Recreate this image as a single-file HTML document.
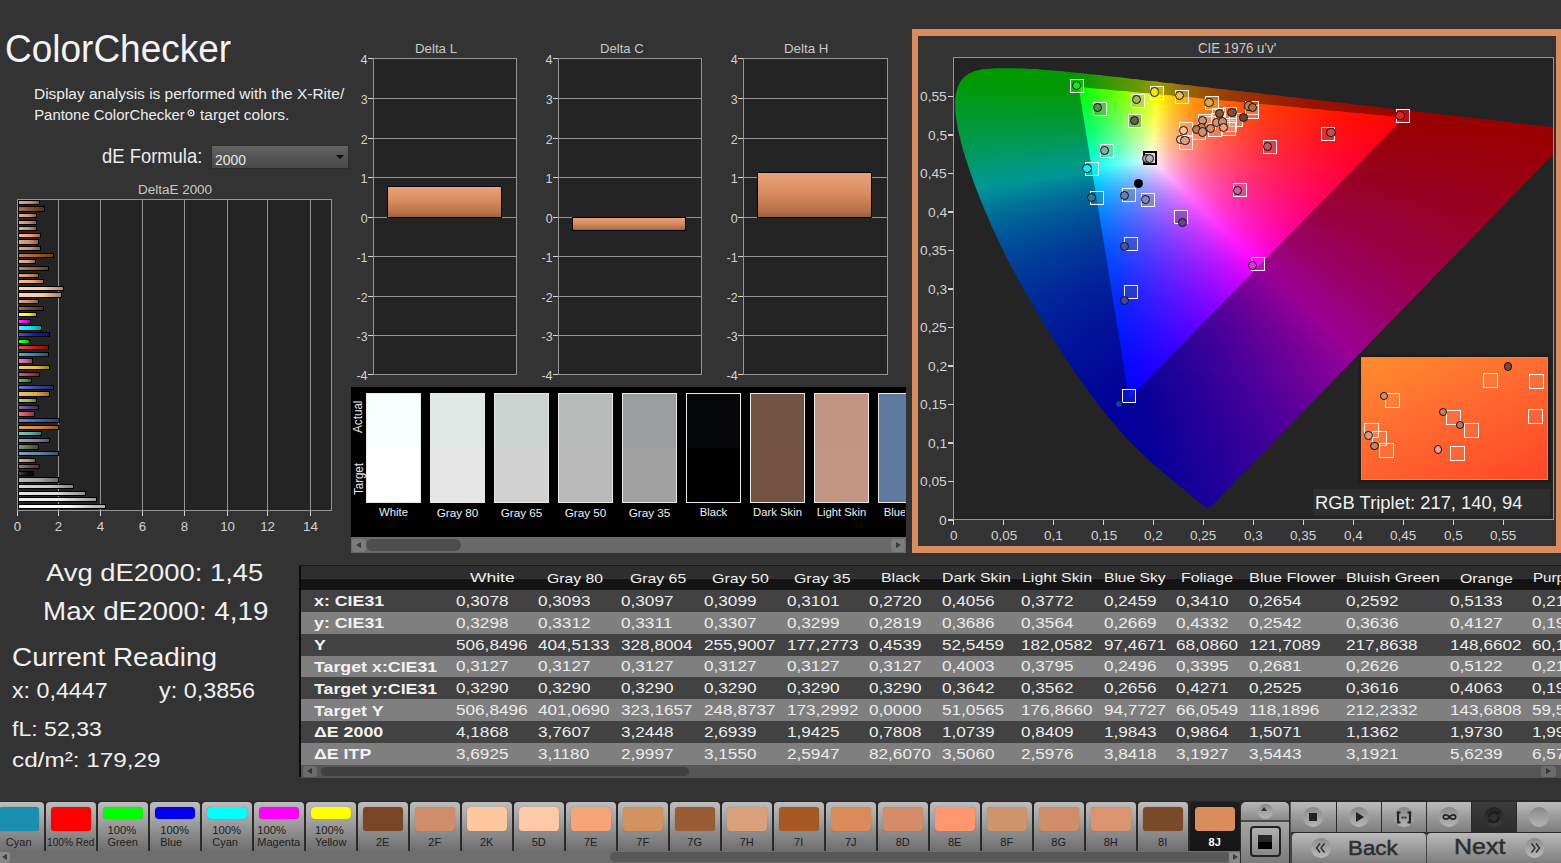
<!DOCTYPE html>
<html><head><meta charset="utf-8"><style>
html,body{margin:0;padding:0;width:1561px;height:863px;overflow:hidden;background:#333333;}
.t{position:absolute;white-space:nowrap;line-height:1;font-family:"Liberation Sans",sans-serif;transform-origin:0 0;}
</style></head><body>
<div class="t" style="left:5.30px;top:30.22px;font-size:38.21px;font-weight:normal;color:#f4f4f4;transform:scaleX(0.9682);">ColorChecker</div>
<div class="t" style="left:34.20px;top:86.86px;font-size:14.76px;font-weight:normal;color:#ececec;transform:scaleX(1.0482);">Display analysis is performed with the X-Rite/</div>
<div class="t" style="left:34.20px;top:107.54px;font-size:14.90px;font-weight:normal;color:#ececec;">Pantone ColorChecker</div>
<svg style="position:absolute;left:187px;top:108.5px" width="8" height="8" viewBox="0 0 8 8"><circle cx="4" cy="4" r="2.9" fill="none" stroke="#e8e8e8" stroke-width="1.3"/><circle cx="4" cy="4" r="1.1" fill="#e8e8e8"/></svg>
<div class="t" style="left:200.00px;top:107.54px;font-size:14.90px;font-weight:normal;color:#ececec;transform:scaleX(1.0383);">target colors.</div>
<div class="t" style="left:101.70px;top:147.25px;font-size:19.59px;font-weight:normal;color:#ececec;transform:scaleX(0.9405);">dE Formula:</div>
<div style="position:absolute;left:210.80px;top:145.00px;width:138.70px;height:24.30px;background:linear-gradient(#656565,#555 45%,#484848);border:1px solid #2c2c2c;box-sizing:border-box;"></div>
<div class="t" style="left:215.00px;top:152.19px;font-size:15.43px;font-weight:normal;color:#e8e8e8;transform:scaleX(0.9030);">2000</div>
<div style="position:absolute;left:335.6px;top:155.4px;width:0;height:0;border-left:4px solid transparent;border-right:4px solid transparent;border-top:4.8px solid #0a0a0a"></div>
<div class="t" style="left:137.60px;top:183.50px;font-size:12.00px;font-weight:normal;color:#c8c8c8;transform:scaleX(1.1217);">DeltaE 2000</div>
<div style="position:absolute;left:17.00px;top:199.00px;width:315.00px;height:312.00px;background:#242424;"></div>
<div style="position:absolute;left:17.00px;top:199.00px;width:1.00px;height:312.00px;background:#959595"></div>
<div style="position:absolute;left:58.00px;top:199.00px;width:1.00px;height:312.00px;background:#959595"></div>
<div style="position:absolute;left:100.00px;top:199.00px;width:1.00px;height:312.00px;background:#959595"></div>
<div style="position:absolute;left:142.00px;top:199.00px;width:1.00px;height:312.00px;background:#959595"></div>
<div style="position:absolute;left:184.00px;top:199.00px;width:1.00px;height:312.00px;background:#959595"></div>
<div style="position:absolute;left:227.00px;top:199.00px;width:1.00px;height:312.00px;background:#959595"></div>
<div style="position:absolute;left:267.00px;top:199.00px;width:1.00px;height:312.00px;background:#959595"></div>
<div style="position:absolute;left:310.00px;top:199.00px;width:1.00px;height:312.00px;background:#959595"></div>
<div style="position:absolute;left:331.00px;top:199.00px;width:1.00px;height:312.00px;background:#959595"></div>
<div style="position:absolute;left:17.00px;top:199.00px;width:315.00px;height:1.00px;background:#959595"></div>
<div style="position:absolute;left:17.00px;top:510.00px;width:315.00px;height:1.00px;background:#959595"></div>
<div style="position:absolute;left:17.00px;top:511.00px;width:1.00px;height:5.00px;background:#d2d2d2"></div>
<div class="t" style="left:13.81px;top:520.01px;font-size:13.29px;font-weight:normal;color:#d2d2d2;">0</div>
<div style="position:absolute;left:58.00px;top:511.00px;width:1.00px;height:5.00px;background:#d2d2d2"></div>
<div class="t" style="left:54.81px;top:520.01px;font-size:13.29px;font-weight:normal;color:#d2d2d2;">2</div>
<div style="position:absolute;left:100.00px;top:511.00px;width:1.00px;height:5.00px;background:#d2d2d2"></div>
<div class="t" style="left:96.76px;top:519.84px;font-size:13.48px;font-weight:normal;color:#d2d2d2;">4</div>
<div style="position:absolute;left:142.00px;top:511.00px;width:1.00px;height:5.00px;background:#d2d2d2"></div>
<div class="t" style="left:138.81px;top:520.01px;font-size:13.29px;font-weight:normal;color:#d2d2d2;">6</div>
<div style="position:absolute;left:184.00px;top:511.00px;width:1.00px;height:5.00px;background:#d2d2d2"></div>
<div class="t" style="left:180.81px;top:520.01px;font-size:13.29px;font-weight:normal;color:#d2d2d2;">8</div>
<div style="position:absolute;left:227.00px;top:511.00px;width:1.00px;height:5.00px;background:#d2d2d2"></div>
<div class="t" style="left:220.13px;top:520.01px;font-size:13.29px;font-weight:normal;color:#d2d2d2;">10</div>
<div style="position:absolute;left:267.00px;top:511.00px;width:1.00px;height:5.00px;background:#d2d2d2"></div>
<div class="t" style="left:260.13px;top:520.01px;font-size:13.29px;font-weight:normal;color:#d2d2d2;">12</div>
<div style="position:absolute;left:310.00px;top:511.00px;width:1.00px;height:5.00px;background:#d2d2d2"></div>
<div class="t" style="left:303.02px;top:519.84px;font-size:13.48px;font-weight:normal;color:#d2d2d2;">14</div>
<div style="position:absolute;left:17.50px;top:199.80px;width:22.48px;height:5.20px;background:linear-gradient(to right,#e2a986,#d98c5e 55%,#8d5b3d);border:1px solid #000;box-sizing:border-box;"></div>
<div style="position:absolute;left:17.50px;top:206.41px;width:27.50px;height:5.20px;background:linear-gradient(to right,#9b775e,#7a4a28 55%,#4f301a);border:1px solid #000;box-sizing:border-box;"></div>
<div style="position:absolute;left:17.50px;top:213.02px;width:19.55px;height:5.20px;background:linear-gradient(to right,#e3af94,#da9470 55%,#8e6049);border:1px solid #000;box-sizing:border-box;"></div>
<div style="position:absolute;left:17.50px;top:219.63px;width:19.55px;height:5.20px;background:linear-gradient(to right,#dca98e,#d18c68 55%,#885b44);border:1px solid #000;box-sizing:border-box;"></div>
<div style="position:absolute;left:17.50px;top:226.24px;width:19.55px;height:5.20px;background:linear-gradient(to right,#dcaf91,#d0946c 55%,#876046);border:1px solid #000;box-sizing:border-box;"></div>
<div style="position:absolute;left:17.50px;top:232.85px;width:23.53px;height:5.20px;background:linear-gradient(to right,#ffb092,#ff966e 55%,#a66248);border:1px solid #000;box-sizing:border-box;"></div>
<div style="position:absolute;left:17.50px;top:239.46px;width:21.64px;height:5.20px;background:linear-gradient(to right,#e0a98e,#d68c68 55%,#8b5b44);border:1px solid #000;box-sizing:border-box;"></div>
<div style="position:absolute;left:17.50px;top:246.07px;width:23.53px;height:5.20px;background:linear-gradient(to right,#e4a783,#db8a5a 55%,#8e5a3a);border:1px solid #000;box-sizing:border-box;"></div>
<div style="position:absolute;left:17.50px;top:252.68px;width:36.71px;height:5.20px;background:linear-gradient(to right,#bc8359,#a65a22 55%,#6c3a16);border:1px solid #000;box-sizing:border-box;"></div>
<div style="position:absolute;left:17.50px;top:259.29px;width:18.50px;height:5.20px;background:linear-gradient(to right,#e3b89b,#daa07a 55%,#8e684f);border:1px solid #000;box-sizing:border-box;"></div>
<div style="position:absolute;left:17.50px;top:265.90px;width:31.69px;height:5.20px;background:linear-gradient(to right,#b38565,#9a5c32 55%,#643c20);border:1px solid #000;box-sizing:border-box;"></div>
<div style="position:absolute;left:17.50px;top:272.51px;width:21.64px;height:5.20px;background:linear-gradient(to right,#dfad86,#d4925e 55%,#8a5f3d);border:1px solid #000;box-sizing:border-box;"></div>
<div style="position:absolute;left:17.50px;top:279.12px;width:26.04px;height:5.20px;background:linear-gradient(to right,#f9bb9a,#f7a478 55%,#a16b4e);border:1px solid #000;box-sizing:border-box;"></div>
<div style="position:absolute;left:17.50px;top:285.73px;width:46.55px;height:5.20px;background:linear-gradient(to right,#ffd6bc,#ffc8a6 55%,#a6826c);border:1px solid #000;box-sizing:border-box;"></div>
<div style="position:absolute;left:17.50px;top:292.34px;width:44.25px;height:5.20px;background:linear-gradient(to right,#ffd5b6,#ffc79d 55%,#a68166);border:1px solid #000;box-sizing:border-box;"></div>
<div style="position:absolute;left:17.50px;top:298.95px;width:21.64px;height:5.20px;background:linear-gradient(to right,#dba98e,#cf8c68 55%,#875b44);border:1px solid #000;box-sizing:border-box;"></div>
<div style="position:absolute;left:17.50px;top:305.56px;width:26.67px;height:5.20px;background:linear-gradient(to right,#9b735c,#7a4426 55%,#4f2c19);border:1px solid #000;box-sizing:border-box;"></div>
<div style="position:absolute;left:17.50px;top:312.17px;width:19.55px;height:5.20px;background:linear-gradient(to right,#ffff40,#ffff00 55%,#a6a600);border:1px solid #000;box-sizing:border-box;"></div>
<div style="position:absolute;left:17.50px;top:318.78px;width:13.69px;height:5.20px;background:linear-gradient(to right,#ff40ff,#ff00ff 55%,#a600a6);border:1px solid #000;box-sizing:border-box;"></div>
<div style="position:absolute;left:17.50px;top:325.39px;width:24.78px;height:5.20px;background:linear-gradient(to right,#40eef4,#00e8f0 55%,#00979c);border:1px solid #000;box-sizing:border-box;"></div>
<div style="position:absolute;left:17.50px;top:332.00px;width:32.74px;height:5.20px;background:linear-gradient(to right,#5252c4,#1818b0 55%,#101072);border:1px solid #000;box-sizing:border-box;"></div>
<div style="position:absolute;left:17.50px;top:338.61px;width:12.64px;height:5.20px;background:linear-gradient(to right,#40ff40,#00ff00 55%,#00a600);border:1px solid #000;box-sizing:border-box;"></div>
<div style="position:absolute;left:17.50px;top:345.22px;width:31.06px;height:5.20px;background:linear-gradient(to right,#d65252,#c81818 55%,#821010);border:1px solid #000;box-sizing:border-box;"></div>
<div style="position:absolute;left:17.50px;top:351.83px;width:31.69px;height:5.20px;background:linear-gradient(to right,#52acc4,#1890b0 55%,#105e72);border:1px solid #000;box-sizing:border-box;"></div>
<div style="position:absolute;left:17.50px;top:358.44px;width:15.36px;height:5.20px;background:linear-gradient(to right,#dc88be,#d060a8 55%,#873e6d);border:1px solid #000;box-sizing:border-box;"></div>
<div style="position:absolute;left:17.50px;top:365.05px;width:32.53px;height:5.20px;background:linear-gradient(to right,#eed064,#e8c030 55%,#977d1f);border:1px solid #000;box-sizing:border-box;"></div>
<div style="position:absolute;left:17.50px;top:371.66px;width:22.48px;height:5.20px;background:linear-gradient(to right,#d06470,#c03040 55%,#7d1f2a);border:1px solid #000;box-sizing:border-box;"></div>
<div style="position:absolute;left:17.50px;top:378.27px;width:14.73px;height:5.20px;background:linear-gradient(to right,#70b87c,#40a050 55%,#2a6834);border:1px solid #000;box-sizing:border-box;"></div>
<div style="position:absolute;left:17.50px;top:384.88px;width:36.71px;height:5.20px;background:linear-gradient(to right,#6a76b8,#3848a0 55%,#242f68);border:1px solid #000;box-sizing:border-box;"></div>
<div style="position:absolute;left:17.50px;top:391.49px;width:32.53px;height:5.20px;background:linear-gradient(to right,#eebe70,#e8a840 55%,#976d2a);border:1px solid #000;box-sizing:border-box;"></div>
<div style="position:absolute;left:17.50px;top:398.10px;width:19.55px;height:5.20px;background:linear-gradient(to right,#b8d070,#a0c040 55%,#687d2a);border:1px solid #000;box-sizing:border-box;"></div>
<div style="position:absolute;left:17.50px;top:404.71px;width:21.85px;height:5.20px;background:linear-gradient(to right,#8870a0,#604080 55%,#3e2a53);border:1px solid #000;box-sizing:border-box;"></div>
<div style="position:absolute;left:17.50px;top:411.32px;width:17.67px;height:5.20px;background:linear-gradient(to right,#d07c88,#c05060 55%,#7d343e);border:1px solid #000;box-sizing:border-box;"></div>
<div style="position:absolute;left:17.50px;top:417.93px;width:42.16px;height:5.20px;background:linear-gradient(to right,#7088c4,#4060b0 55%,#2a3e72);border:1px solid #000;box-sizing:border-box;"></div>
<div style="position:absolute;left:17.50px;top:424.54px;width:41.74px;height:5.20px;background:linear-gradient(to right,#e8a064,#e08030 55%,#92531f);border:1px solid #000;box-sizing:border-box;"></div>
<div style="position:absolute;left:17.50px;top:431.15px;width:24.36px;height:5.20px;background:linear-gradient(to right,#88c4b8,#60b0a0 55%,#3e7268);border:1px solid #000;box-sizing:border-box;"></div>
<div style="position:absolute;left:17.50px;top:437.76px;width:32.11px;height:5.20px;background:linear-gradient(to right,#a0a0c4,#8080b0 55%,#535372);border:1px solid #000;box-sizing:border-box;"></div>
<div style="position:absolute;left:17.50px;top:444.37px;width:21.22px;height:5.20px;background:linear-gradient(to right,#889470,#607040 55%,#3e492a);border:1px solid #000;box-sizing:border-box;"></div>
<div style="position:absolute;left:17.50px;top:450.98px;width:41.95px;height:5.20px;background:linear-gradient(to right,#88a0be,#6080a8 55%,#3e536d);border:1px solid #000;box-sizing:border-box;"></div>
<div style="position:absolute;left:17.50px;top:457.59px;width:18.08px;height:5.20px;background:linear-gradient(to right,#d6aca0,#c89080 55%,#825e53);border:1px solid #000;box-sizing:border-box;"></div>
<div style="position:absolute;left:17.50px;top:464.20px;width:22.90px;height:5.20px;background:linear-gradient(to right,#947c70,#705040 55%,#49342a);border:1px solid #000;box-sizing:border-box;"></div>
<div style="position:absolute;left:17.50px;top:470.81px;width:16.83px;height:5.20px;background:linear-gradient(to right,#4c4c4c,#101010 55%,#0a0a0a);border:1px solid #000;box-sizing:border-box;"></div>
<div style="position:absolute;left:17.50px;top:477.42px;width:41.11px;height:5.20px;background:linear-gradient(to right,#b8b8b8,#a0a0a0 55%,#686868);border:1px solid #000;box-sizing:border-box;"></div>
<div style="position:absolute;left:17.50px;top:484.03px;width:56.81px;height:5.20px;background:linear-gradient(to right,#d6d6d6,#c8c8c8 55%,#828282);border:1px solid #000;box-sizing:border-box;"></div>
<div style="position:absolute;left:17.50px;top:490.64px;width:68.32px;height:5.20px;background:linear-gradient(to right,#e5e5e5,#dcdcdc 55%,#8f8f8f);border:1px solid #000;box-sizing:border-box;"></div>
<div style="position:absolute;left:17.50px;top:497.25px;width:79.21px;height:5.20px;background:linear-gradient(to right,#efefef,#eaeaea 55%,#989898);border:1px solid #000;box-sizing:border-box;"></div>
<div style="position:absolute;left:17.50px;top:503.86px;width:88.21px;height:5.20px;background:linear-gradient(to right,#ffffff,#ffffff 55%,#a6a6a6);border:1px solid #000;box-sizing:border-box;"></div>
<div style="position:absolute;left:17.00px;top:199.00px;width:1.00px;height:312.00px;background:#959595"></div>
<div class="t" style="left:415.30px;top:43.21px;font-size:12.69px;font-weight:normal;color:#c8c8c8;transform:scaleX(1.0466);">Delta L</div>
<div style="position:absolute;left:373.00px;top:58.00px;width:144.00px;height:317.00px;background:#242424;"></div>
<div style="position:absolute;left:373.00px;top:58.00px;width:1.00px;height:317.00px;background:#959595"></div>
<div style="position:absolute;left:516.00px;top:58.00px;width:1.00px;height:317.00px;background:#959595"></div>
<div style="position:absolute;left:373.00px;top:58.00px;width:144.00px;height:1.00px;background:#959595"></div>
<div style="position:absolute;left:368.00px;top:58.00px;width:5.00px;height:1.00px;background:#d2d2d2"></div>
<div class="t" style="left:360.60px;top:53.98px;font-size:12.61px;font-weight:normal;color:#d2d2d2;">4</div>
<div style="position:absolute;left:373.00px;top:98.00px;width:144.00px;height:1.00px;background:#959595"></div>
<div style="position:absolute;left:368.00px;top:98.00px;width:5.00px;height:1.00px;background:#d2d2d2"></div>
<div class="t" style="left:360.70px;top:94.14px;font-size:12.43px;font-weight:normal;color:#d2d2d2;">3</div>
<div style="position:absolute;left:373.00px;top:138.00px;width:144.00px;height:1.00px;background:#959595"></div>
<div style="position:absolute;left:368.00px;top:138.00px;width:5.00px;height:1.00px;background:#d2d2d2"></div>
<div class="t" style="left:360.70px;top:134.14px;font-size:12.43px;font-weight:normal;color:#d2d2d2;">2</div>
<div style="position:absolute;left:373.00px;top:177.00px;width:144.00px;height:1.00px;background:#959595"></div>
<div style="position:absolute;left:368.00px;top:177.00px;width:5.00px;height:1.00px;background:#d2d2d2"></div>
<div class="t" style="left:360.60px;top:172.98px;font-size:12.61px;font-weight:normal;color:#d2d2d2;">1</div>
<div style="position:absolute;left:373.00px;top:217.00px;width:144.00px;height:1.00px;background:#959595"></div>
<div style="position:absolute;left:368.00px;top:217.00px;width:5.00px;height:1.00px;background:#d2d2d2"></div>
<div class="t" style="left:360.70px;top:213.14px;font-size:12.43px;font-weight:normal;color:#d2d2d2;">0</div>
<div style="position:absolute;left:373.00px;top:256.00px;width:144.00px;height:1.00px;background:#959595"></div>
<div style="position:absolute;left:368.00px;top:256.00px;width:5.00px;height:1.00px;background:#d2d2d2"></div>
<div class="t" style="left:356.38px;top:251.98px;font-size:12.61px;font-weight:normal;color:#d2d2d2;">-1</div>
<div style="position:absolute;left:373.00px;top:296.00px;width:144.00px;height:1.00px;background:#959595"></div>
<div style="position:absolute;left:368.00px;top:296.00px;width:5.00px;height:1.00px;background:#d2d2d2"></div>
<div class="t" style="left:356.54px;top:292.14px;font-size:12.43px;font-weight:normal;color:#d2d2d2;">-2</div>
<div style="position:absolute;left:373.00px;top:335.00px;width:144.00px;height:1.00px;background:#959595"></div>
<div style="position:absolute;left:368.00px;top:335.00px;width:5.00px;height:1.00px;background:#d2d2d2"></div>
<div class="t" style="left:356.54px;top:331.14px;font-size:12.43px;font-weight:normal;color:#d2d2d2;">-3</div>
<div style="position:absolute;left:373.00px;top:374.00px;width:144.00px;height:1.00px;background:#959595"></div>
<div style="position:absolute;left:368.00px;top:374.00px;width:5.00px;height:1.00px;background:#d2d2d2"></div>
<div class="t" style="left:356.38px;top:369.98px;font-size:12.61px;font-weight:normal;color:#d2d2d2;">-4</div>
<div style="position:absolute;left:387.20px;top:185.93px;width:114.40px;height:32.17px;background:linear-gradient(#e9a27a,#d98c5e 45%,#b87248 85%,#9a6040);border:1px solid #000;box-sizing:border-box;"></div>
<div class="t" style="left:599.70px;top:43.21px;font-size:12.69px;font-weight:normal;color:#c8c8c8;transform:scaleX(1.0326);">Delta C</div>
<div style="position:absolute;left:558.00px;top:58.00px;width:144.00px;height:317.00px;background:#242424;"></div>
<div style="position:absolute;left:558.00px;top:58.00px;width:1.00px;height:317.00px;background:#959595"></div>
<div style="position:absolute;left:701.00px;top:58.00px;width:1.00px;height:317.00px;background:#959595"></div>
<div style="position:absolute;left:558.00px;top:58.00px;width:144.00px;height:1.00px;background:#959595"></div>
<div style="position:absolute;left:553.00px;top:58.00px;width:5.00px;height:1.00px;background:#d2d2d2"></div>
<div class="t" style="left:545.60px;top:53.98px;font-size:12.61px;font-weight:normal;color:#d2d2d2;">4</div>
<div style="position:absolute;left:558.00px;top:98.00px;width:144.00px;height:1.00px;background:#959595"></div>
<div style="position:absolute;left:553.00px;top:98.00px;width:5.00px;height:1.00px;background:#d2d2d2"></div>
<div class="t" style="left:545.70px;top:94.14px;font-size:12.43px;font-weight:normal;color:#d2d2d2;">3</div>
<div style="position:absolute;left:558.00px;top:138.00px;width:144.00px;height:1.00px;background:#959595"></div>
<div style="position:absolute;left:553.00px;top:138.00px;width:5.00px;height:1.00px;background:#d2d2d2"></div>
<div class="t" style="left:545.70px;top:134.14px;font-size:12.43px;font-weight:normal;color:#d2d2d2;">2</div>
<div style="position:absolute;left:558.00px;top:177.00px;width:144.00px;height:1.00px;background:#959595"></div>
<div style="position:absolute;left:553.00px;top:177.00px;width:5.00px;height:1.00px;background:#d2d2d2"></div>
<div class="t" style="left:545.60px;top:172.98px;font-size:12.61px;font-weight:normal;color:#d2d2d2;">1</div>
<div style="position:absolute;left:558.00px;top:217.00px;width:144.00px;height:1.00px;background:#959595"></div>
<div style="position:absolute;left:553.00px;top:217.00px;width:5.00px;height:1.00px;background:#d2d2d2"></div>
<div class="t" style="left:545.70px;top:213.14px;font-size:12.43px;font-weight:normal;color:#d2d2d2;">0</div>
<div style="position:absolute;left:558.00px;top:256.00px;width:144.00px;height:1.00px;background:#959595"></div>
<div style="position:absolute;left:553.00px;top:256.00px;width:5.00px;height:1.00px;background:#d2d2d2"></div>
<div class="t" style="left:541.38px;top:251.98px;font-size:12.61px;font-weight:normal;color:#d2d2d2;">-1</div>
<div style="position:absolute;left:558.00px;top:296.00px;width:144.00px;height:1.00px;background:#959595"></div>
<div style="position:absolute;left:553.00px;top:296.00px;width:5.00px;height:1.00px;background:#d2d2d2"></div>
<div class="t" style="left:541.54px;top:292.14px;font-size:12.43px;font-weight:normal;color:#d2d2d2;">-2</div>
<div style="position:absolute;left:558.00px;top:335.00px;width:144.00px;height:1.00px;background:#959595"></div>
<div style="position:absolute;left:553.00px;top:335.00px;width:5.00px;height:1.00px;background:#d2d2d2"></div>
<div class="t" style="left:541.54px;top:331.14px;font-size:12.43px;font-weight:normal;color:#d2d2d2;">-3</div>
<div style="position:absolute;left:558.00px;top:374.00px;width:144.00px;height:1.00px;background:#959595"></div>
<div style="position:absolute;left:553.00px;top:374.00px;width:5.00px;height:1.00px;background:#d2d2d2"></div>
<div class="t" style="left:541.38px;top:369.98px;font-size:12.61px;font-weight:normal;color:#d2d2d2;">-4</div>
<div style="position:absolute;left:572.20px;top:217.00px;width:114.20px;height:14.03px;background:linear-gradient(#e9a27a,#d98c5e 45%,#b87248 85%,#9a6040);border:1px solid #000;box-sizing:border-box;"></div>
<div class="t" style="left:784.30px;top:43.21px;font-size:12.69px;font-weight:normal;color:#c8c8c8;transform:scaleX(1.0491);">Delta H</div>
<div style="position:absolute;left:743.00px;top:58.00px;width:145.00px;height:317.00px;background:#242424;"></div>
<div style="position:absolute;left:743.00px;top:58.00px;width:1.00px;height:317.00px;background:#959595"></div>
<div style="position:absolute;left:887.00px;top:58.00px;width:1.00px;height:317.00px;background:#959595"></div>
<div style="position:absolute;left:743.00px;top:58.00px;width:145.00px;height:1.00px;background:#959595"></div>
<div style="position:absolute;left:738.00px;top:58.00px;width:5.00px;height:1.00px;background:#d2d2d2"></div>
<div class="t" style="left:730.70px;top:53.98px;font-size:12.61px;font-weight:normal;color:#d2d2d2;">4</div>
<div style="position:absolute;left:743.00px;top:98.00px;width:145.00px;height:1.00px;background:#959595"></div>
<div style="position:absolute;left:738.00px;top:98.00px;width:5.00px;height:1.00px;background:#d2d2d2"></div>
<div class="t" style="left:730.80px;top:94.14px;font-size:12.43px;font-weight:normal;color:#d2d2d2;">3</div>
<div style="position:absolute;left:743.00px;top:138.00px;width:145.00px;height:1.00px;background:#959595"></div>
<div style="position:absolute;left:738.00px;top:138.00px;width:5.00px;height:1.00px;background:#d2d2d2"></div>
<div class="t" style="left:730.80px;top:134.14px;font-size:12.43px;font-weight:normal;color:#d2d2d2;">2</div>
<div style="position:absolute;left:743.00px;top:177.00px;width:145.00px;height:1.00px;background:#959595"></div>
<div style="position:absolute;left:738.00px;top:177.00px;width:5.00px;height:1.00px;background:#d2d2d2"></div>
<div class="t" style="left:730.70px;top:172.98px;font-size:12.61px;font-weight:normal;color:#d2d2d2;">1</div>
<div style="position:absolute;left:743.00px;top:217.00px;width:145.00px;height:1.00px;background:#959595"></div>
<div style="position:absolute;left:738.00px;top:217.00px;width:5.00px;height:1.00px;background:#d2d2d2"></div>
<div class="t" style="left:730.80px;top:213.14px;font-size:12.43px;font-weight:normal;color:#d2d2d2;">0</div>
<div style="position:absolute;left:743.00px;top:256.00px;width:145.00px;height:1.00px;background:#959595"></div>
<div style="position:absolute;left:738.00px;top:256.00px;width:5.00px;height:1.00px;background:#d2d2d2"></div>
<div class="t" style="left:726.48px;top:251.98px;font-size:12.61px;font-weight:normal;color:#d2d2d2;">-1</div>
<div style="position:absolute;left:743.00px;top:296.00px;width:145.00px;height:1.00px;background:#959595"></div>
<div style="position:absolute;left:738.00px;top:296.00px;width:5.00px;height:1.00px;background:#d2d2d2"></div>
<div class="t" style="left:726.64px;top:292.14px;font-size:12.43px;font-weight:normal;color:#d2d2d2;">-2</div>
<div style="position:absolute;left:743.00px;top:335.00px;width:145.00px;height:1.00px;background:#959595"></div>
<div style="position:absolute;left:738.00px;top:335.00px;width:5.00px;height:1.00px;background:#d2d2d2"></div>
<div class="t" style="left:726.64px;top:331.14px;font-size:12.43px;font-weight:normal;color:#d2d2d2;">-3</div>
<div style="position:absolute;left:743.00px;top:374.00px;width:145.00px;height:1.00px;background:#959595"></div>
<div style="position:absolute;left:738.00px;top:374.00px;width:5.00px;height:1.00px;background:#d2d2d2"></div>
<div class="t" style="left:726.48px;top:369.98px;font-size:12.61px;font-weight:normal;color:#d2d2d2;">-4</div>
<div style="position:absolute;left:757.30px;top:172.12px;width:115.20px;height:45.98px;background:linear-gradient(#e9a27a,#d98c5e 45%,#b87248 85%,#9a6040);border:1px solid #000;box-sizing:border-box;"></div>
<div style="position:absolute;left:350.50px;top:387.00px;width:555.00px;height:150.00px;background:#000;"></div>
<div style="position:absolute;left:350.5px;top:387px;width:555px;height:150px;overflow:hidden">
<div style="position:absolute;left:15.50px;top:6px;width:55px;height:110px;border:1.5px solid #e8e8e8;box-sizing:border-box;background:linear-gradient(#f6fffd 50%,#ffffff 50%)"></div>
<div style="position:absolute;left:79.50px;top:6px;width:55px;height:110px;border:1.5px solid #e8e8e8;box-sizing:border-box;background:linear-gradient(#e0e6e3 50%,#e6e6e6 50%)"></div>
<div style="position:absolute;left:143.50px;top:6px;width:55px;height:110px;border:1.5px solid #e8e8e8;box-sizing:border-box;background:linear-gradient(#ccd2d0 50%,#d1d1d1 50%)"></div>
<div style="position:absolute;left:207.50px;top:6px;width:55px;height:110px;border:1.5px solid #e8e8e8;box-sizing:border-box;background:linear-gradient(#b6bab9 50%,#b9b9b9 50%)"></div>
<div style="position:absolute;left:271.50px;top:6px;width:55px;height:110px;border:1.5px solid #e8e8e8;box-sizing:border-box;background:linear-gradient(#9a9d9d 50%,#a1a1a1 50%)"></div>
<div style="position:absolute;left:335.50px;top:6px;width:55px;height:110px;border:1.5px solid #e8e8e8;box-sizing:border-box;background:linear-gradient(#050608 50%,#000000 50%)"></div>
<div style="position:absolute;left:399.50px;top:6px;width:55px;height:110px;border:1.5px solid #e8e8e8;box-sizing:border-box;background:linear-gradient(#735444 50%,#735243 50%)"></div>
<div style="position:absolute;left:463.50px;top:6px;width:55px;height:110px;border:1.5px solid #e8e8e8;box-sizing:border-box;background:linear-gradient(#c29582 50%,#c29682 50%)"></div>
<div style="position:absolute;left:527.50px;top:6px;width:55px;height:110px;border:1.5px solid #e8e8e8;box-sizing:border-box;background:linear-gradient(#5e7b9e 50%,#5e7a9d 50%)"></div>
</div>
<div class="t" style="left:379.05px;top:507.29px;font-size:11.31px;font-weight:normal;color:#f0f0f0;">White</div>
<div class="t" style="left:436.68px;top:506.94px;font-size:11.71px;font-weight:normal;color:#f0f0f0;">Gray 80</div>
<div class="t" style="left:500.68px;top:506.94px;font-size:11.71px;font-weight:normal;color:#f0f0f0;">Gray 65</div>
<div class="t" style="left:564.68px;top:506.94px;font-size:11.71px;font-weight:normal;color:#f0f0f0;">Gray 50</div>
<div class="t" style="left:628.68px;top:506.94px;font-size:11.71px;font-weight:normal;color:#f0f0f0;">Gray 35</div>
<div class="t" style="left:699.64px;top:507.29px;font-size:11.31px;font-weight:normal;color:#f0f0f0;">Black</div>
<div class="t" style="left:752.98px;top:507.29px;font-size:11.31px;font-weight:normal;color:#f0f0f0;">Dark Skin</div>
<div class="t" style="left:816.67px;top:507.29px;font-size:11.31px;font-weight:normal;color:#f0f0f0;">Light Skin</div>
<div style="position:absolute;left:877px;top:500px;width:28.4px;height:30px;overflow:hidden">
<div class="t" style="left:6.80px;top:7.29px;font-size:11.31px;font-weight:normal;color:#f0f0f0;">Blue Sky</div>
</div>
<div class="t" style="left:352.39px;top:432.90px;font-size:12.41px;color:#e8e8e8;transform:rotate(-90deg) scaleX(0.9417);">Actual</div>
<div class="t" style="left:351.86px;top:495.00px;font-size:13.04px;color:#e8e8e8;transform:rotate(-90deg) scaleX(0.8825);">Target</div>
<div style="position:absolute;left:350.50px;top:537.00px;width:555.00px;height:16.00px;background:#6a6a6a;"></div>
<div style="position:absolute;left:352.00px;top:538.50px;width:13.50px;height:13.00px;background:#7c7c7c;border-radius:3px;"></div>
<div style="position:absolute;left:355.5px;top:541.5px;width:0;height:0;border-top:3.5px solid transparent;border-bottom:3.5px solid transparent;border-right:5px solid #3a3a3a"></div>
<div style="position:absolute;left:366.00px;top:539.00px;width:95.00px;height:12.00px;background:#4e4e4e;border-radius:6px;"></div>
<div style="position:absolute;left:891.00px;top:538.50px;width:13.50px;height:13.00px;background:#7c7c7c;border-radius:3px;"></div>
<div style="position:absolute;left:895.5px;top:541.5px;width:0;height:0;border-top:3.5px solid transparent;border-bottom:3.5px solid transparent;border-left:5px solid #3a3a3a"></div>
<div class="t" style="left:46.40px;top:561.41px;font-size:24.69px;font-weight:normal;color:#f0f0f0;transform:scaleX(1.1092);">Avg dE2000: 1,45</div>
<div class="t" style="left:42.60px;top:598.96px;font-size:25.93px;font-weight:normal;color:#f0f0f0;transform:scaleX(1.0711);">Max dE2000: 4,19</div>
<div class="t" style="left:12.20px;top:643.74px;font-size:26.07px;font-weight:normal;color:#f0f0f0;transform:scaleX(1.0719);">Current Reading</div>
<div class="t" style="left:12.20px;top:680.02px;font-size:21.86px;font-weight:normal;color:#f0f0f0;transform:scaleX(1.0629);">x: 0,4447</div>
<div class="t" style="left:159.40px;top:680.02px;font-size:21.86px;font-weight:normal;color:#f0f0f0;transform:scaleX(1.0685);">y: 0,3856</div>
<div class="t" style="left:12.20px;top:718.36px;font-size:21.10px;font-weight:normal;color:#f0f0f0;transform:scaleX(1.0939);">fL: 52,33</div>
<div class="t" style="left:12.20px;top:750.18px;font-size:20.97px;font-weight:normal;color:#f0f0f0;transform:scaleX(1.1591);">cd/m²: 179,29</div>
<div style="position:absolute;left:299.00px;top:565.00px;width:1262.00px;height:1.20px;background:#1a1a1a;"></div>
<div style="position:absolute;left:299.00px;top:566.20px;width:1262.00px;height:12.30px;background:#2e2e2e;"></div>
<div style="position:absolute;left:299.00px;top:578.50px;width:1262.00px;height:11.50px;background:#141414;"></div>
<div style="position:absolute;left:299.00px;top:590.00px;width:1262.00px;height:22.05px;background:#424242;"></div>
<div style="position:absolute;left:299.00px;top:611.85px;width:1262.00px;height:22.05px;background:#7f7f7f;"></div>
<div style="position:absolute;left:299.00px;top:633.70px;width:1262.00px;height:22.05px;background:#424242;"></div>
<div style="position:absolute;left:299.00px;top:655.55px;width:1262.00px;height:22.05px;background:#7f7f7f;"></div>
<div style="position:absolute;left:299.00px;top:677.40px;width:1262.00px;height:22.05px;background:#424242;"></div>
<div style="position:absolute;left:299.00px;top:699.25px;width:1262.00px;height:22.05px;background:#7f7f7f;"></div>
<div style="position:absolute;left:299.00px;top:721.10px;width:1262.00px;height:22.05px;background:#424242;"></div>
<div style="position:absolute;left:299.00px;top:742.95px;width:1262.00px;height:22.05px;background:#7f7f7f;"></div>
<div style="position:absolute;left:299.00px;top:566.20px;width:2.00px;height:211.00px;background:#0a0a0a;"></div>
<div class="t" style="left:470.20px;top:572.21px;font-size:12.69px;font-weight:normal;color:#f0f0f0;transform:scaleX(1.3756);">White</div>
<div class="t" style="left:547.00px;top:571.83px;font-size:13.14px;font-weight:normal;color:#f0f0f0;transform:scaleX(1.1986);">Gray 80</div>
<div class="t" style="left:629.50px;top:571.83px;font-size:13.14px;font-weight:normal;color:#f0f0f0;transform:scaleX(1.2028);">Gray 65</div>
<div class="t" style="left:711.70px;top:571.83px;font-size:13.14px;font-weight:normal;color:#f0f0f0;transform:scaleX(1.2178);">Gray 50</div>
<div class="t" style="left:794.20px;top:571.83px;font-size:13.14px;font-weight:normal;color:#f0f0f0;transform:scaleX(1.2114);">Gray 35</div>
<div class="t" style="left:880.50px;top:572.21px;font-size:12.69px;font-weight:normal;color:#f0f0f0;transform:scaleX(1.2544);">Black</div>
<div class="t" style="left:941.60px;top:572.21px;font-size:12.69px;font-weight:normal;color:#f0f0f0;transform:scaleX(1.2507);">Dark Skin</div>
<div class="t" style="left:1022.00px;top:572.21px;font-size:12.69px;font-weight:normal;color:#f0f0f0;transform:scaleX(1.2566);">Light Skin</div>
<div class="t" style="left:1103.60px;top:572.21px;font-size:12.69px;font-weight:normal;color:#f0f0f0;transform:scaleX(1.2285);">Blue Sky</div>
<div class="t" style="left:1181.00px;top:572.21px;font-size:12.69px;font-weight:normal;color:#f0f0f0;transform:scaleX(1.2493);">Foliage</div>
<div class="t" style="left:1249.00px;top:572.21px;font-size:12.69px;font-weight:normal;color:#f0f0f0;transform:scaleX(1.2955);">Blue Flower</div>
<div class="t" style="left:1345.60px;top:572.21px;font-size:12.69px;font-weight:normal;color:#f0f0f0;transform:scaleX(1.2789);">Bluish Green</div>
<div class="t" style="left:1459.50px;top:571.83px;font-size:13.14px;font-weight:normal;color:#f0f0f0;transform:scaleX(1.2069);">Orange</div>
<div class="t" style="left:1532.60px;top:572.21px;font-size:12.69px;font-weight:normal;color:#f0f0f0;transform:scaleX(1.1891);">Purplish Blue</div>
<div class="t" style="left:456.20px;top:593.94px;font-size:14.43px;font-weight:normal;color:#ececec;transform:scaleX(1.1891);">0,3078</div>
<div class="t" style="left:538.40px;top:593.94px;font-size:14.43px;font-weight:normal;color:#ececec;transform:scaleX(1.1891);">0,3093</div>
<div class="t" style="left:621.30px;top:593.94px;font-size:14.43px;font-weight:normal;color:#ececec;transform:scaleX(1.1891);">0,3097</div>
<div class="t" style="left:703.90px;top:593.94px;font-size:14.43px;font-weight:normal;color:#ececec;transform:scaleX(1.1891);">0,3099</div>
<div class="t" style="left:786.50px;top:593.94px;font-size:14.43px;font-weight:normal;color:#ececec;transform:scaleX(1.1891);">0,3101</div>
<div class="t" style="left:868.60px;top:593.94px;font-size:14.43px;font-weight:normal;color:#ececec;transform:scaleX(1.1891);">0,2720</div>
<div class="t" style="left:941.60px;top:593.94px;font-size:14.43px;font-weight:normal;color:#ececec;transform:scaleX(1.1891);">0,4056</div>
<div class="t" style="left:1021.10px;top:593.94px;font-size:14.43px;font-weight:normal;color:#ececec;transform:scaleX(1.1891);">0,3772</div>
<div class="t" style="left:1103.60px;top:593.94px;font-size:14.43px;font-weight:normal;color:#ececec;transform:scaleX(1.1891);">0,2459</div>
<div class="t" style="left:1175.90px;top:593.94px;font-size:14.43px;font-weight:normal;color:#ececec;transform:scaleX(1.1891);">0,3410</div>
<div class="t" style="left:1249.00px;top:593.94px;font-size:14.43px;font-weight:normal;color:#ececec;transform:scaleX(1.1891);">0,2654</div>
<div class="t" style="left:1345.60px;top:593.94px;font-size:14.43px;font-weight:normal;color:#ececec;transform:scaleX(1.1891);">0,2592</div>
<div class="t" style="left:1450.00px;top:593.94px;font-size:14.43px;font-weight:normal;color:#ececec;transform:scaleX(1.1891);">0,5133</div>
<div class="t" style="left:1531.80px;top:593.94px;font-size:14.43px;font-weight:normal;color:#ececec;transform:scaleX(1.1891);">0,2107</div>
<div class="t" style="left:456.20px;top:615.79px;font-size:14.43px;font-weight:normal;color:#ececec;transform:scaleX(1.1891);">0,3298</div>
<div class="t" style="left:538.40px;top:615.79px;font-size:14.43px;font-weight:normal;color:#ececec;transform:scaleX(1.1891);">0,3312</div>
<div class="t" style="left:621.30px;top:615.79px;font-size:14.43px;font-weight:normal;color:#ececec;transform:scaleX(1.1891);">0,3311</div>
<div class="t" style="left:703.90px;top:615.79px;font-size:14.43px;font-weight:normal;color:#ececec;transform:scaleX(1.1891);">0,3307</div>
<div class="t" style="left:786.50px;top:615.79px;font-size:14.43px;font-weight:normal;color:#ececec;transform:scaleX(1.1891);">0,3299</div>
<div class="t" style="left:868.60px;top:615.79px;font-size:14.43px;font-weight:normal;color:#ececec;transform:scaleX(1.1891);">0,2819</div>
<div class="t" style="left:941.60px;top:615.79px;font-size:14.43px;font-weight:normal;color:#ececec;transform:scaleX(1.1891);">0,3686</div>
<div class="t" style="left:1021.10px;top:615.79px;font-size:14.43px;font-weight:normal;color:#ececec;transform:scaleX(1.1891);">0,3564</div>
<div class="t" style="left:1103.60px;top:615.79px;font-size:14.43px;font-weight:normal;color:#ececec;transform:scaleX(1.1891);">0,2669</div>
<div class="t" style="left:1175.90px;top:615.79px;font-size:14.43px;font-weight:normal;color:#ececec;transform:scaleX(1.1891);">0,4332</div>
<div class="t" style="left:1249.00px;top:615.79px;font-size:14.43px;font-weight:normal;color:#ececec;transform:scaleX(1.1891);">0,2542</div>
<div class="t" style="left:1345.60px;top:615.79px;font-size:14.43px;font-weight:normal;color:#ececec;transform:scaleX(1.1891);">0,3636</div>
<div class="t" style="left:1450.00px;top:615.79px;font-size:14.43px;font-weight:normal;color:#ececec;transform:scaleX(1.1891);">0,4127</div>
<div class="t" style="left:1531.80px;top:615.79px;font-size:14.43px;font-weight:normal;color:#ececec;transform:scaleX(1.1891);">0,1912</div>
<div class="t" style="left:456.20px;top:637.64px;font-size:14.43px;font-weight:normal;color:#ececec;transform:scaleX(1.1891);">506,8496</div>
<div class="t" style="left:538.40px;top:637.64px;font-size:14.43px;font-weight:normal;color:#ececec;transform:scaleX(1.1891);">404,5133</div>
<div class="t" style="left:621.30px;top:637.64px;font-size:14.43px;font-weight:normal;color:#ececec;transform:scaleX(1.1891);">328,8004</div>
<div class="t" style="left:703.90px;top:637.64px;font-size:14.43px;font-weight:normal;color:#ececec;transform:scaleX(1.1891);">255,9007</div>
<div class="t" style="left:786.50px;top:637.64px;font-size:14.43px;font-weight:normal;color:#ececec;transform:scaleX(1.1891);">177,2773</div>
<div class="t" style="left:868.60px;top:637.64px;font-size:14.43px;font-weight:normal;color:#ececec;transform:scaleX(1.1891);">0,4539</div>
<div class="t" style="left:941.60px;top:637.64px;font-size:14.43px;font-weight:normal;color:#ececec;transform:scaleX(1.1891);">52,5459</div>
<div class="t" style="left:1021.10px;top:637.64px;font-size:14.43px;font-weight:normal;color:#ececec;transform:scaleX(1.1891);">182,0582</div>
<div class="t" style="left:1103.60px;top:637.64px;font-size:14.43px;font-weight:normal;color:#ececec;transform:scaleX(1.1891);">97,4671</div>
<div class="t" style="left:1175.90px;top:637.64px;font-size:14.43px;font-weight:normal;color:#ececec;transform:scaleX(1.1891);">68,0860</div>
<div class="t" style="left:1249.00px;top:637.64px;font-size:14.43px;font-weight:normal;color:#ececec;transform:scaleX(1.1891);">121,7089</div>
<div class="t" style="left:1345.60px;top:637.64px;font-size:14.43px;font-weight:normal;color:#ececec;transform:scaleX(1.1891);">217,8638</div>
<div class="t" style="left:1450.00px;top:637.64px;font-size:14.43px;font-weight:normal;color:#ececec;transform:scaleX(1.1891);">148,6602</div>
<div class="t" style="left:1531.80px;top:637.64px;font-size:14.43px;font-weight:normal;color:#ececec;transform:scaleX(1.1891);">60,1234</div>
<div class="t" style="left:456.20px;top:659.49px;font-size:14.43px;font-weight:normal;color:#ececec;transform:scaleX(1.1891);">0,3127</div>
<div class="t" style="left:538.40px;top:659.49px;font-size:14.43px;font-weight:normal;color:#ececec;transform:scaleX(1.1891);">0,3127</div>
<div class="t" style="left:621.30px;top:659.49px;font-size:14.43px;font-weight:normal;color:#ececec;transform:scaleX(1.1891);">0,3127</div>
<div class="t" style="left:703.90px;top:659.49px;font-size:14.43px;font-weight:normal;color:#ececec;transform:scaleX(1.1891);">0,3127</div>
<div class="t" style="left:786.50px;top:659.49px;font-size:14.43px;font-weight:normal;color:#ececec;transform:scaleX(1.1891);">0,3127</div>
<div class="t" style="left:868.60px;top:659.49px;font-size:14.43px;font-weight:normal;color:#ececec;transform:scaleX(1.1891);">0,3127</div>
<div class="t" style="left:941.60px;top:659.49px;font-size:14.43px;font-weight:normal;color:#ececec;transform:scaleX(1.1891);">0,4003</div>
<div class="t" style="left:1021.10px;top:659.49px;font-size:14.43px;font-weight:normal;color:#ececec;transform:scaleX(1.1891);">0,3795</div>
<div class="t" style="left:1103.60px;top:659.49px;font-size:14.43px;font-weight:normal;color:#ececec;transform:scaleX(1.1891);">0,2496</div>
<div class="t" style="left:1175.90px;top:659.49px;font-size:14.43px;font-weight:normal;color:#ececec;transform:scaleX(1.1891);">0,3395</div>
<div class="t" style="left:1249.00px;top:659.49px;font-size:14.43px;font-weight:normal;color:#ececec;transform:scaleX(1.1891);">0,2681</div>
<div class="t" style="left:1345.60px;top:659.49px;font-size:14.43px;font-weight:normal;color:#ececec;transform:scaleX(1.1891);">0,2626</div>
<div class="t" style="left:1450.00px;top:659.49px;font-size:14.43px;font-weight:normal;color:#ececec;transform:scaleX(1.1891);">0,5122</div>
<div class="t" style="left:1531.80px;top:659.49px;font-size:14.43px;font-weight:normal;color:#ececec;transform:scaleX(1.1891);">0,2119</div>
<div class="t" style="left:456.20px;top:681.34px;font-size:14.43px;font-weight:normal;color:#ececec;transform:scaleX(1.1891);">0,3290</div>
<div class="t" style="left:538.40px;top:681.34px;font-size:14.43px;font-weight:normal;color:#ececec;transform:scaleX(1.1891);">0,3290</div>
<div class="t" style="left:621.30px;top:681.34px;font-size:14.43px;font-weight:normal;color:#ececec;transform:scaleX(1.1891);">0,3290</div>
<div class="t" style="left:703.90px;top:681.34px;font-size:14.43px;font-weight:normal;color:#ececec;transform:scaleX(1.1891);">0,3290</div>
<div class="t" style="left:786.50px;top:681.34px;font-size:14.43px;font-weight:normal;color:#ececec;transform:scaleX(1.1891);">0,3290</div>
<div class="t" style="left:868.60px;top:681.34px;font-size:14.43px;font-weight:normal;color:#ececec;transform:scaleX(1.1891);">0,3290</div>
<div class="t" style="left:941.60px;top:681.34px;font-size:14.43px;font-weight:normal;color:#ececec;transform:scaleX(1.1891);">0,3642</div>
<div class="t" style="left:1021.10px;top:681.34px;font-size:14.43px;font-weight:normal;color:#ececec;transform:scaleX(1.1891);">0,3562</div>
<div class="t" style="left:1103.60px;top:681.34px;font-size:14.43px;font-weight:normal;color:#ececec;transform:scaleX(1.1891);">0,2656</div>
<div class="t" style="left:1175.90px;top:681.34px;font-size:14.43px;font-weight:normal;color:#ececec;transform:scaleX(1.1891);">0,4271</div>
<div class="t" style="left:1249.00px;top:681.34px;font-size:14.43px;font-weight:normal;color:#ececec;transform:scaleX(1.1891);">0,2525</div>
<div class="t" style="left:1345.60px;top:681.34px;font-size:14.43px;font-weight:normal;color:#ececec;transform:scaleX(1.1891);">0,3616</div>
<div class="t" style="left:1450.00px;top:681.34px;font-size:14.43px;font-weight:normal;color:#ececec;transform:scaleX(1.1891);">0,4063</div>
<div class="t" style="left:1531.80px;top:681.34px;font-size:14.43px;font-weight:normal;color:#ececec;transform:scaleX(1.1891);">0,1934</div>
<div class="t" style="left:456.20px;top:703.19px;font-size:14.43px;font-weight:normal;color:#ececec;transform:scaleX(1.1891);">506,8496</div>
<div class="t" style="left:538.40px;top:703.19px;font-size:14.43px;font-weight:normal;color:#ececec;transform:scaleX(1.1891);">401,0690</div>
<div class="t" style="left:621.30px;top:703.19px;font-size:14.43px;font-weight:normal;color:#ececec;transform:scaleX(1.1891);">323,1657</div>
<div class="t" style="left:703.90px;top:703.19px;font-size:14.43px;font-weight:normal;color:#ececec;transform:scaleX(1.1891);">248,8737</div>
<div class="t" style="left:786.50px;top:703.19px;font-size:14.43px;font-weight:normal;color:#ececec;transform:scaleX(1.1891);">173,2992</div>
<div class="t" style="left:868.60px;top:703.19px;font-size:14.43px;font-weight:normal;color:#ececec;transform:scaleX(1.1891);">0,0000</div>
<div class="t" style="left:941.60px;top:703.19px;font-size:14.43px;font-weight:normal;color:#ececec;transform:scaleX(1.1891);">51,0565</div>
<div class="t" style="left:1021.10px;top:703.19px;font-size:14.43px;font-weight:normal;color:#ececec;transform:scaleX(1.1891);">176,8660</div>
<div class="t" style="left:1103.60px;top:703.19px;font-size:14.43px;font-weight:normal;color:#ececec;transform:scaleX(1.1891);">94,7727</div>
<div class="t" style="left:1175.90px;top:703.19px;font-size:14.43px;font-weight:normal;color:#ececec;transform:scaleX(1.1891);">66,0549</div>
<div class="t" style="left:1249.00px;top:703.19px;font-size:14.43px;font-weight:normal;color:#ececec;transform:scaleX(1.1891);">118,1896</div>
<div class="t" style="left:1345.60px;top:703.19px;font-size:14.43px;font-weight:normal;color:#ececec;transform:scaleX(1.1891);">212,2332</div>
<div class="t" style="left:1450.00px;top:703.19px;font-size:14.43px;font-weight:normal;color:#ececec;transform:scaleX(1.1891);">143,6808</div>
<div class="t" style="left:1531.80px;top:703.19px;font-size:14.43px;font-weight:normal;color:#ececec;transform:scaleX(1.1891);">59,5123</div>
<div class="t" style="left:456.20px;top:725.04px;font-size:14.43px;font-weight:normal;color:#ececec;transform:scaleX(1.1891);">4,1868</div>
<div class="t" style="left:538.40px;top:725.04px;font-size:14.43px;font-weight:normal;color:#ececec;transform:scaleX(1.1891);">3,7607</div>
<div class="t" style="left:621.30px;top:725.04px;font-size:14.43px;font-weight:normal;color:#ececec;transform:scaleX(1.1891);">3,2448</div>
<div class="t" style="left:703.90px;top:725.04px;font-size:14.43px;font-weight:normal;color:#ececec;transform:scaleX(1.1891);">2,6939</div>
<div class="t" style="left:786.50px;top:725.04px;font-size:14.43px;font-weight:normal;color:#ececec;transform:scaleX(1.1891);">1,9425</div>
<div class="t" style="left:868.60px;top:725.04px;font-size:14.43px;font-weight:normal;color:#ececec;transform:scaleX(1.1891);">0,7808</div>
<div class="t" style="left:941.60px;top:725.04px;font-size:14.43px;font-weight:normal;color:#ececec;transform:scaleX(1.1891);">1,0739</div>
<div class="t" style="left:1021.10px;top:725.04px;font-size:14.43px;font-weight:normal;color:#ececec;transform:scaleX(1.1891);">0,8409</div>
<div class="t" style="left:1103.60px;top:725.04px;font-size:14.43px;font-weight:normal;color:#ececec;transform:scaleX(1.1891);">1,9843</div>
<div class="t" style="left:1175.90px;top:725.04px;font-size:14.43px;font-weight:normal;color:#ececec;transform:scaleX(1.1891);">0,9864</div>
<div class="t" style="left:1249.00px;top:725.04px;font-size:14.43px;font-weight:normal;color:#ececec;transform:scaleX(1.1891);">1,5071</div>
<div class="t" style="left:1345.60px;top:725.04px;font-size:14.43px;font-weight:normal;color:#ececec;transform:scaleX(1.1891);">1,1362</div>
<div class="t" style="left:1450.00px;top:725.04px;font-size:14.43px;font-weight:normal;color:#ececec;transform:scaleX(1.1891);">1,9730</div>
<div class="t" style="left:1531.80px;top:725.04px;font-size:14.43px;font-weight:normal;color:#ececec;transform:scaleX(1.1891);">1,9912</div>
<div class="t" style="left:456.20px;top:746.89px;font-size:14.43px;font-weight:normal;color:#ececec;transform:scaleX(1.1891);">3,6925</div>
<div class="t" style="left:538.40px;top:746.89px;font-size:14.43px;font-weight:normal;color:#ececec;transform:scaleX(1.1891);">3,1180</div>
<div class="t" style="left:621.30px;top:746.89px;font-size:14.43px;font-weight:normal;color:#ececec;transform:scaleX(1.1891);">2,9997</div>
<div class="t" style="left:703.90px;top:746.89px;font-size:14.43px;font-weight:normal;color:#ececec;transform:scaleX(1.1891);">3,1550</div>
<div class="t" style="left:786.50px;top:746.89px;font-size:14.43px;font-weight:normal;color:#ececec;transform:scaleX(1.1891);">2,5947</div>
<div class="t" style="left:868.60px;top:746.89px;font-size:14.43px;font-weight:normal;color:#ececec;transform:scaleX(1.1891);">82,6070</div>
<div class="t" style="left:941.60px;top:746.89px;font-size:14.43px;font-weight:normal;color:#ececec;transform:scaleX(1.1891);">3,5060</div>
<div class="t" style="left:1021.10px;top:746.89px;font-size:14.43px;font-weight:normal;color:#ececec;transform:scaleX(1.1891);">2,5976</div>
<div class="t" style="left:1103.60px;top:746.89px;font-size:14.43px;font-weight:normal;color:#ececec;transform:scaleX(1.1891);">3,8418</div>
<div class="t" style="left:1175.90px;top:746.89px;font-size:14.43px;font-weight:normal;color:#ececec;transform:scaleX(1.1891);">3,1927</div>
<div class="t" style="left:1249.00px;top:746.89px;font-size:14.43px;font-weight:normal;color:#ececec;transform:scaleX(1.1891);">3,5443</div>
<div class="t" style="left:1345.60px;top:746.89px;font-size:14.43px;font-weight:normal;color:#ececec;transform:scaleX(1.1891);">3,1921</div>
<div class="t" style="left:1450.00px;top:746.89px;font-size:14.43px;font-weight:normal;color:#ececec;transform:scaleX(1.1891);">5,6239</div>
<div class="t" style="left:1531.80px;top:746.89px;font-size:14.43px;font-weight:normal;color:#ececec;transform:scaleX(1.1891);">6,5712</div>
<div class="t" style="left:314.20px;top:593.29px;font-size:15.07px;font-weight:bold;color:#f2f2f2;transform:scaleX(1.1810);">x: CIE31</div>
<div class="t" style="left:314.20px;top:615.14px;font-size:15.07px;font-weight:bold;color:#f2f2f2;transform:scaleX(1.1810);">y: CIE31</div>
<div class="t" style="left:314.20px;top:636.99px;font-size:15.07px;font-weight:bold;color:#f2f2f2;transform:scaleX(1.1810);">Y</div>
<div class="t" style="left:314.20px;top:658.84px;font-size:15.07px;font-weight:bold;color:#f2f2f2;transform:scaleX(1.1810);">Target x:CIE31</div>
<div class="t" style="left:314.20px;top:680.69px;font-size:15.07px;font-weight:bold;color:#f2f2f2;transform:scaleX(1.1810);">Target y:CIE31</div>
<div class="t" style="left:314.20px;top:702.54px;font-size:15.07px;font-weight:bold;color:#f2f2f2;transform:scaleX(1.1810);">Target Y</div>
<div class="t" style="left:314.20px;top:724.39px;font-size:15.07px;font-weight:bold;color:#f2f2f2;transform:scaleX(1.1810);">ΔE 2000</div>
<div class="t" style="left:314.20px;top:746.24px;font-size:15.07px;font-weight:bold;color:#f2f2f2;transform:scaleX(1.1810);">ΔE ITP</div>
<div style="position:absolute;left:301.00px;top:765.00px;width:1260.00px;height:12.50px;background:#565656;"></div>
<div style="position:absolute;left:302.50px;top:766.00px;width:14.50px;height:11.00px;background:#6c6c6c;border-radius:3px;"></div>
<div style="position:absolute;left:307px;top:768px;width:0;height:0;border-top:3.5px solid transparent;border-bottom:3.5px solid transparent;border-right:5px solid #333"></div>
<div style="position:absolute;left:321.00px;top:766.50px;width:368.00px;height:9.50px;background:#404040;border-radius:5px;"></div>
<div style="position:absolute;left:1541.00px;top:766.00px;width:14.50px;height:11.00px;background:#6c6c6c;border-radius:3px;"></div>
<div style="position:absolute;left:1546px;top:768px;width:0;height:0;border-top:3.5px solid transparent;border-bottom:3.5px solid transparent;border-left:5px solid #333"></div>
<div style="position:absolute;left:0.00px;top:801.00px;width:1242.00px;height:62.00px;background:#2a2a2a;"></div>
<div style="position:absolute;left:-6.30px;top:802.00px;width:50.10px;height:48.50px;background:linear-gradient(#bdbdbd,#a4a4a4 35%,#7e7e7e 80%,#6e6e6e);border-radius:4px 4px 0 0;"></div>
<div style="position:absolute;left:-0.90px;top:806.80px;width:39.70px;height:24.20px;background:#1a90b0;border-radius:3.5px;box-shadow:0 0 1px rgba(0,0,0,.4);"></div>
<div class="t" style="left:5.84px;top:836.54px;font-size:11.01px;font-weight:normal;color:#202020;">Cyan</div>
<div style="position:absolute;left:45.70px;top:802.00px;width:50.10px;height:48.50px;background:linear-gradient(#bdbdbd,#a4a4a4 35%,#7e7e7e 80%,#6e6e6e);border-radius:4px 4px 0 0;"></div>
<div style="position:absolute;left:51.10px;top:806.80px;width:39.70px;height:24.20px;background:#ff0000;border-radius:3.5px;box-shadow:0 0 1px rgba(0,0,0,.4);"></div>
<div class="t" style="left:47.00px;top:836.54px;font-size:11.01px;font-weight:normal;color:#202020;transform:scaleX(0.9215);">100% Red</div>
<div style="position:absolute;left:97.70px;top:802.00px;width:50.10px;height:48.50px;background:linear-gradient(#bdbdbd,#a4a4a4 35%,#7e7e7e 80%,#6e6e6e);border-radius:4px 4px 0 0;"></div>
<div style="position:absolute;left:103.10px;top:806.80px;width:39.70px;height:12.70px;background:#00ff00;border-radius:4px;box-shadow:0 0 1px rgba(0,0,0,.4);"></div>
<div class="t" style="left:107.39px;top:824.59px;font-size:11.30px;font-weight:normal;color:#202020;">100%</div>
<div class="t" style="left:107.39px;top:836.54px;font-size:11.01px;font-weight:normal;color:#202020;">Green</div>
<div style="position:absolute;left:149.70px;top:802.00px;width:50.10px;height:48.50px;background:linear-gradient(#bdbdbd,#a4a4a4 35%,#7e7e7e 80%,#6e6e6e);border-radius:4px 4px 0 0;"></div>
<div style="position:absolute;left:155.10px;top:806.80px;width:39.70px;height:12.70px;background:#0000ee;border-radius:4px;box-shadow:0 0 1px rgba(0,0,0,.4);"></div>
<div class="t" style="left:160.23px;top:824.59px;font-size:11.30px;font-weight:normal;color:#202020;">100%</div>
<div class="t" style="left:160.23px;top:836.54px;font-size:11.01px;font-weight:normal;color:#202020;">Blue</div>
<div style="position:absolute;left:201.70px;top:802.00px;width:50.10px;height:48.50px;background:linear-gradient(#bdbdbd,#a4a4a4 35%,#7e7e7e 80%,#6e6e6e);border-radius:4px 4px 0 0;"></div>
<div style="position:absolute;left:207.10px;top:806.80px;width:39.70px;height:12.70px;background:#00ffff;border-radius:4px;box-shadow:0 0 1px rgba(0,0,0,.4);"></div>
<div class="t" style="left:212.23px;top:824.59px;font-size:11.30px;font-weight:normal;color:#202020;">100%</div>
<div class="t" style="left:212.23px;top:836.54px;font-size:11.01px;font-weight:normal;color:#202020;">Cyan</div>
<div style="position:absolute;left:253.70px;top:802.00px;width:50.10px;height:48.50px;background:linear-gradient(#bdbdbd,#a4a4a4 35%,#7e7e7e 80%,#6e6e6e);border-radius:4px 4px 0 0;"></div>
<div style="position:absolute;left:259.10px;top:806.80px;width:39.70px;height:12.70px;background:#ff00ff;border-radius:4px;box-shadow:0 0 1px rgba(0,0,0,.4);"></div>
<div class="t" style="left:257.25px;top:824.59px;font-size:11.30px;font-weight:normal;color:#202020;">100%</div>
<div class="t" style="left:257.25px;top:836.54px;font-size:11.01px;font-weight:normal;color:#202020;">Magenta</div>
<div style="position:absolute;left:305.70px;top:802.00px;width:50.10px;height:48.50px;background:linear-gradient(#bdbdbd,#a4a4a4 35%,#7e7e7e 80%,#6e6e6e);border-radius:4px 4px 0 0;"></div>
<div style="position:absolute;left:311.10px;top:806.80px;width:39.70px;height:12.70px;background:#ffff00;border-radius:4px;box-shadow:0 0 1px rgba(0,0,0,.4);"></div>
<div class="t" style="left:314.98px;top:824.59px;font-size:11.30px;font-weight:normal;color:#202020;">100%</div>
<div class="t" style="left:314.98px;top:836.54px;font-size:11.01px;font-weight:normal;color:#202020;">Yellow</div>
<div style="position:absolute;left:357.70px;top:802.00px;width:50.10px;height:48.50px;background:linear-gradient(#bdbdbd,#a4a4a4 35%,#7e7e7e 80%,#6e6e6e);border-radius:4px 4px 0 0;"></div>
<div style="position:absolute;left:363.10px;top:806.80px;width:39.70px;height:24.20px;background:#7a4426;border-radius:3.5px;box-shadow:0 0 1px rgba(0,0,0,.4);"></div>
<div class="t" style="left:375.95px;top:836.54px;font-size:11.01px;font-weight:normal;color:#202020;">2E</div>
<div style="position:absolute;left:409.70px;top:802.00px;width:50.10px;height:48.50px;background:linear-gradient(#bdbdbd,#a4a4a4 35%,#7e7e7e 80%,#6e6e6e);border-radius:4px 4px 0 0;"></div>
<div style="position:absolute;left:415.10px;top:806.80px;width:39.70px;height:24.20px;background:#cf8c68;border-radius:3.5px;box-shadow:0 0 1px rgba(0,0,0,.4);"></div>
<div class="t" style="left:428.28px;top:836.54px;font-size:11.01px;font-weight:normal;color:#202020;">2F</div>
<div style="position:absolute;left:461.70px;top:802.00px;width:50.10px;height:48.50px;background:linear-gradient(#bdbdbd,#a4a4a4 35%,#7e7e7e 80%,#6e6e6e);border-radius:4px 4px 0 0;"></div>
<div style="position:absolute;left:467.10px;top:806.80px;width:39.70px;height:24.20px;background:#ffc79d;border-radius:3.5px;box-shadow:0 0 1px rgba(0,0,0,.4);"></div>
<div class="t" style="left:479.95px;top:836.54px;font-size:11.01px;font-weight:normal;color:#202020;">2K</div>
<div style="position:absolute;left:513.70px;top:802.00px;width:50.10px;height:48.50px;background:linear-gradient(#bdbdbd,#a4a4a4 35%,#7e7e7e 80%,#6e6e6e);border-radius:4px 4px 0 0;"></div>
<div style="position:absolute;left:519.10px;top:806.80px;width:39.70px;height:24.20px;background:#ffc8a6;border-radius:3.5px;box-shadow:0 0 1px rgba(0,0,0,.4);"></div>
<div class="t" style="left:531.65px;top:836.54px;font-size:11.01px;font-weight:normal;color:#202020;">5D</div>
<div style="position:absolute;left:565.70px;top:802.00px;width:50.10px;height:48.50px;background:linear-gradient(#bdbdbd,#a4a4a4 35%,#7e7e7e 80%,#6e6e6e);border-radius:4px 4px 0 0;"></div>
<div style="position:absolute;left:571.10px;top:806.80px;width:39.70px;height:24.20px;background:#f7a478;border-radius:3.5px;box-shadow:0 0 1px rgba(0,0,0,.4);"></div>
<div class="t" style="left:583.95px;top:836.54px;font-size:11.01px;font-weight:normal;color:#202020;">7E</div>
<div style="position:absolute;left:617.70px;top:802.00px;width:50.10px;height:48.50px;background:linear-gradient(#bdbdbd,#a4a4a4 35%,#7e7e7e 80%,#6e6e6e);border-radius:4px 4px 0 0;"></div>
<div style="position:absolute;left:623.10px;top:806.80px;width:39.70px;height:24.20px;background:#d4925e;border-radius:3.5px;box-shadow:0 0 1px rgba(0,0,0,.4);"></div>
<div class="t" style="left:636.28px;top:836.54px;font-size:11.01px;font-weight:normal;color:#202020;">7F</div>
<div style="position:absolute;left:669.70px;top:802.00px;width:50.10px;height:48.50px;background:linear-gradient(#bdbdbd,#a4a4a4 35%,#7e7e7e 80%,#6e6e6e);border-radius:4px 4px 0 0;"></div>
<div style="position:absolute;left:675.10px;top:806.80px;width:39.70px;height:24.20px;background:#9a5c32;border-radius:3.5px;box-shadow:0 0 1px rgba(0,0,0,.4);"></div>
<div class="t" style="left:687.35px;top:836.54px;font-size:11.01px;font-weight:normal;color:#202020;">7G</div>
<div style="position:absolute;left:721.70px;top:802.00px;width:50.10px;height:48.50px;background:linear-gradient(#bdbdbd,#a4a4a4 35%,#7e7e7e 80%,#6e6e6e);border-radius:4px 4px 0 0;"></div>
<div style="position:absolute;left:727.10px;top:806.80px;width:39.70px;height:24.20px;background:#daa07a;border-radius:3.5px;box-shadow:0 0 1px rgba(0,0,0,.4);"></div>
<div class="t" style="left:739.65px;top:836.54px;font-size:11.01px;font-weight:normal;color:#202020;">7H</div>
<div style="position:absolute;left:773.70px;top:802.00px;width:50.10px;height:48.50px;background:linear-gradient(#bdbdbd,#a4a4a4 35%,#7e7e7e 80%,#6e6e6e);border-radius:4px 4px 0 0;"></div>
<div style="position:absolute;left:779.10px;top:806.80px;width:39.70px;height:24.20px;background:#a65a22;border-radius:3.5px;box-shadow:0 0 1px rgba(0,0,0,.4);"></div>
<div class="t" style="left:794.10px;top:836.54px;font-size:11.01px;font-weight:normal;color:#202020;">7I</div>
<div style="position:absolute;left:825.70px;top:802.00px;width:50.10px;height:48.50px;background:linear-gradient(#bdbdbd,#a4a4a4 35%,#7e7e7e 80%,#6e6e6e);border-radius:4px 4px 0 0;"></div>
<div style="position:absolute;left:831.10px;top:806.80px;width:39.70px;height:24.20px;background:#db8a5a;border-radius:3.5px;box-shadow:0 0 1px rgba(0,0,0,.4);"></div>
<div class="t" style="left:844.89px;top:836.54px;font-size:11.01px;font-weight:normal;color:#202020;">7J</div>
<div style="position:absolute;left:877.70px;top:802.00px;width:50.10px;height:48.50px;background:linear-gradient(#bdbdbd,#a4a4a4 35%,#7e7e7e 80%,#6e6e6e);border-radius:4px 4px 0 0;"></div>
<div style="position:absolute;left:883.10px;top:806.80px;width:39.70px;height:24.20px;background:#d68c68;border-radius:3.5px;box-shadow:0 0 1px rgba(0,0,0,.4);"></div>
<div class="t" style="left:895.65px;top:836.54px;font-size:11.01px;font-weight:normal;color:#202020;">8D</div>
<div style="position:absolute;left:929.70px;top:802.00px;width:50.10px;height:48.50px;background:linear-gradient(#bdbdbd,#a4a4a4 35%,#7e7e7e 80%,#6e6e6e);border-radius:4px 4px 0 0;"></div>
<div style="position:absolute;left:935.10px;top:806.80px;width:39.70px;height:24.20px;background:#ff966e;border-radius:3.5px;box-shadow:0 0 1px rgba(0,0,0,.4);"></div>
<div class="t" style="left:947.95px;top:836.54px;font-size:11.01px;font-weight:normal;color:#202020;">8E</div>
<div style="position:absolute;left:981.70px;top:802.00px;width:50.10px;height:48.50px;background:linear-gradient(#bdbdbd,#a4a4a4 35%,#7e7e7e 80%,#6e6e6e);border-radius:4px 4px 0 0;"></div>
<div style="position:absolute;left:987.10px;top:806.80px;width:39.70px;height:24.20px;background:#d0946c;border-radius:3.5px;box-shadow:0 0 1px rgba(0,0,0,.4);"></div>
<div class="t" style="left:1000.28px;top:836.54px;font-size:11.01px;font-weight:normal;color:#202020;">8F</div>
<div style="position:absolute;left:1033.70px;top:802.00px;width:50.10px;height:48.50px;background:linear-gradient(#bdbdbd,#a4a4a4 35%,#7e7e7e 80%,#6e6e6e);border-radius:4px 4px 0 0;"></div>
<div style="position:absolute;left:1039.10px;top:806.80px;width:39.70px;height:24.20px;background:#d18c68;border-radius:3.5px;box-shadow:0 0 1px rgba(0,0,0,.4);"></div>
<div class="t" style="left:1051.35px;top:836.54px;font-size:11.01px;font-weight:normal;color:#202020;">8G</div>
<div style="position:absolute;left:1085.70px;top:802.00px;width:50.10px;height:48.50px;background:linear-gradient(#bdbdbd,#a4a4a4 35%,#7e7e7e 80%,#6e6e6e);border-radius:4px 4px 0 0;"></div>
<div style="position:absolute;left:1091.10px;top:806.80px;width:39.70px;height:24.20px;background:#da9470;border-radius:3.5px;box-shadow:0 0 1px rgba(0,0,0,.4);"></div>
<div class="t" style="left:1103.65px;top:836.54px;font-size:11.01px;font-weight:normal;color:#202020;">8H</div>
<div style="position:absolute;left:1137.70px;top:802.00px;width:50.10px;height:48.50px;background:linear-gradient(#bdbdbd,#a4a4a4 35%,#7e7e7e 80%,#6e6e6e);border-radius:4px 4px 0 0;"></div>
<div style="position:absolute;left:1143.10px;top:806.80px;width:39.70px;height:24.20px;background:#7a4a28;border-radius:3.5px;box-shadow:0 0 1px rgba(0,0,0,.4);"></div>
<div class="t" style="left:1158.10px;top:836.54px;font-size:11.01px;font-weight:normal;color:#202020;">8I</div>
<div style="position:absolute;left:1189.70px;top:802.00px;width:50.10px;height:48.50px;background:linear-gradient(#1e1e1e,#151515);border-radius:4px 4px 0 0;"></div>
<div style="position:absolute;left:1195.10px;top:806.80px;width:39.70px;height:24.20px;background:#d98c5e;border-radius:3.5px;box-shadow:0 0 1px rgba(0,0,0,.4);"></div>
<div class="t" style="left:1208.59px;top:836.54px;font-size:11.01px;font-weight:bold;color:#ffffff;">8J</div>
<div style="position:absolute;left:-8.20px;top:802.00px;width:1.90px;height:48.50px;background:#2a2a2a;"></div>
<div style="position:absolute;left:43.80px;top:802.00px;width:1.90px;height:48.50px;background:#2a2a2a;"></div>
<div style="position:absolute;left:95.80px;top:802.00px;width:1.90px;height:48.50px;background:#2a2a2a;"></div>
<div style="position:absolute;left:147.80px;top:802.00px;width:1.90px;height:48.50px;background:#2a2a2a;"></div>
<div style="position:absolute;left:199.80px;top:802.00px;width:1.90px;height:48.50px;background:#2a2a2a;"></div>
<div style="position:absolute;left:251.80px;top:802.00px;width:1.90px;height:48.50px;background:#2a2a2a;"></div>
<div style="position:absolute;left:303.80px;top:802.00px;width:1.90px;height:48.50px;background:#2a2a2a;"></div>
<div style="position:absolute;left:355.80px;top:802.00px;width:1.90px;height:48.50px;background:#2a2a2a;"></div>
<div style="position:absolute;left:407.80px;top:802.00px;width:1.90px;height:48.50px;background:#2a2a2a;"></div>
<div style="position:absolute;left:459.80px;top:802.00px;width:1.90px;height:48.50px;background:#2a2a2a;"></div>
<div style="position:absolute;left:511.80px;top:802.00px;width:1.90px;height:48.50px;background:#2a2a2a;"></div>
<div style="position:absolute;left:563.80px;top:802.00px;width:1.90px;height:48.50px;background:#2a2a2a;"></div>
<div style="position:absolute;left:615.80px;top:802.00px;width:1.90px;height:48.50px;background:#2a2a2a;"></div>
<div style="position:absolute;left:667.80px;top:802.00px;width:1.90px;height:48.50px;background:#2a2a2a;"></div>
<div style="position:absolute;left:719.80px;top:802.00px;width:1.90px;height:48.50px;background:#2a2a2a;"></div>
<div style="position:absolute;left:771.80px;top:802.00px;width:1.90px;height:48.50px;background:#2a2a2a;"></div>
<div style="position:absolute;left:823.80px;top:802.00px;width:1.90px;height:48.50px;background:#2a2a2a;"></div>
<div style="position:absolute;left:875.80px;top:802.00px;width:1.90px;height:48.50px;background:#2a2a2a;"></div>
<div style="position:absolute;left:927.80px;top:802.00px;width:1.90px;height:48.50px;background:#2a2a2a;"></div>
<div style="position:absolute;left:979.80px;top:802.00px;width:1.90px;height:48.50px;background:#2a2a2a;"></div>
<div style="position:absolute;left:1031.80px;top:802.00px;width:1.90px;height:48.50px;background:#2a2a2a;"></div>
<div style="position:absolute;left:1083.80px;top:802.00px;width:1.90px;height:48.50px;background:#2a2a2a;"></div>
<div style="position:absolute;left:1135.80px;top:802.00px;width:1.90px;height:48.50px;background:#2a2a2a;"></div>
<div style="position:absolute;left:1187.80px;top:802.00px;width:1.90px;height:48.50px;background:#2a2a2a;"></div>
<div style="position:absolute;left:1239.80px;top:802.00px;width:1.90px;height:48.50px;background:#2a2a2a;"></div>
<div style="position:absolute;left:0.00px;top:850.50px;width:1242.00px;height:12.50px;background:#6e6e6e;"></div>
<div style="position:absolute;left:0.00px;top:851.50px;width:10.00px;height:11.00px;background:#8a8a8a;border-radius:0 3px 3px 0;"></div>
<div style="position:absolute;left:2px;top:853.5px;width:0;height:0;border-top:3.5px solid transparent;border-bottom:3.5px solid transparent;border-right:5px solid #3a3a3a"></div>
<div style="position:absolute;left:610.00px;top:852.00px;width:620.00px;height:10.00px;background:#585858;border-radius:5px;"></div>
<div style="position:absolute;left:1229.00px;top:851.50px;width:11.00px;height:11.00px;background:#8a8a8a;border-radius:3px;"></div>
<div style="position:absolute;left:1233px;top:853.5px;width:0;height:0;border-top:3.5px solid transparent;border-bottom:3.5px solid transparent;border-left:5px solid #3a3a3a"></div>
<div style="position:absolute;left:1240.00px;top:800.00px;width:321.00px;height:63.00px;background:#2a2a2a;"></div>
<div style="position:absolute;left:1241.00px;top:802.00px;width:48.00px;height:18.40px;background:linear-gradient(#b8b8b8,#8a8a8a);border-radius:5px 5px 0 0;"></div>
<div style="position:absolute;left:1241.00px;top:820.40px;width:48.00px;height:42.60px;background:linear-gradient(#a8a8a8,#7c7c7c);"></div>
<div style="position:absolute;left:1241.00px;top:820.40px;width:48.00px;height:1.20px;background:#4a4a4a;"></div>
<div style="position:absolute;left:1258.00px;top:804.00px;width:14.50px;height:14.50px;background:linear-gradient(#8a8a8a,#a8a8a8 60%,#b0b0b0);border-radius:50%;"></div>
<div style="position:absolute;left:1261.2px;top:806.8px;width:0;height:0;border-left:3.8px solid transparent;border-right:3.8px solid transparent;border-bottom:4px solid #333"></div>
<div style="position:absolute;left:1249.50px;top:826.40px;width:31.00px;height:30.60px;border:2.2px solid #222;border-radius:4px;box-sizing:border-box;background:linear-gradient(#b0b0b0,#888);"></div>
<div style="position:absolute;left:1257.60px;top:835.30px;width:14.50px;height:13.80px;background:linear-gradient(#262626 50%,#000 50%);"></div>
<div style="position:absolute;left:1290.40px;top:802.00px;width:45.60px;height:30.40px;background:linear-gradient(#bcbcbc,#9a9a9a 50%,#7e7e7e);"></div>
<div style="position:absolute;left:1303.20px;top:807.00px;width:20.00px;height:20.00px;background:linear-gradient(#888,#a4a4a4 60%,#b4b4b4);border-radius:50%;"></div>
<div style="position:absolute;left:1336.70px;top:802.00px;width:44.50px;height:30.40px;background:linear-gradient(#bcbcbc,#9a9a9a 50%,#7e7e7e);"></div>
<div style="position:absolute;left:1348.95px;top:807.00px;width:20.00px;height:20.00px;background:linear-gradient(#888,#a4a4a4 60%,#b4b4b4);border-radius:50%;"></div>
<div style="position:absolute;left:1381.80px;top:802.00px;width:44.30px;height:30.40px;background:linear-gradient(#bcbcbc,#9a9a9a 50%,#7e7e7e);"></div>
<div style="position:absolute;left:1393.95px;top:807.00px;width:20.00px;height:20.00px;background:linear-gradient(#888,#a4a4a4 60%,#b4b4b4);border-radius:50%;"></div>
<div style="position:absolute;left:1426.80px;top:802.00px;width:44.50px;height:30.40px;background:linear-gradient(#bcbcbc,#9a9a9a 50%,#7e7e7e);"></div>
<div style="position:absolute;left:1439.05px;top:807.00px;width:20.00px;height:20.00px;background:linear-gradient(#888,#a4a4a4 60%,#b4b4b4);border-radius:50%;"></div>
<div style="position:absolute;left:1472.00px;top:802.00px;width:44.30px;height:30.40px;background:linear-gradient(#3c3c3c,#2c2c2c);"></div>
<div style="position:absolute;left:1484.15px;top:807.00px;width:20.00px;height:20.00px;background:linear-gradient(#222,#3a3a3a);border-radius:50%;"></div>
<div style="position:absolute;left:1517.00px;top:802.00px;width:44.00px;height:30.40px;background:linear-gradient(#bcbcbc,#9a9a9a 50%,#7e7e7e);"></div>
<div style="position:absolute;left:1529.00px;top:807.00px;width:20.00px;height:20.00px;background:linear-gradient(#888,#a4a4a4 60%,#b4b4b4);border-radius:50%;"></div>
<div style="position:absolute;left:1290.40px;top:802.00px;width:1.00px;height:30.40px;background:#555;"></div>
<div style="position:absolute;left:1308.60px;top:813.00px;width:8.40px;height:8.40px;background:#222;"></div>
<div style="position:absolute;left:1355.8px;top:812px;width:0;height:0;border-top:5.3px solid transparent;border-bottom:5.3px solid transparent;border-left:8.5px solid #222"></div>
<svg style="position:absolute;left:1396px;top:811px" width="16" height="13" viewBox="0 0 16 13"><path d="M4.5 1.5 H2 V11.5 H4.5 M11.5 1.5 H14 V11.5 H11.5" fill="none" stroke="#222" stroke-width="2.2"/><rect x="5.6" y="5.6" width="1.9" height="1.9" fill="#222"/><rect x="8.5" y="5.6" width="1.9" height="1.9" fill="#222"/></svg>
<svg style="position:absolute;left:1440.5px;top:812px" width="17" height="10" viewBox="0 0 17 10"><path d="M8.5 5 C6.8 2.2 2.3 2.2 2.3 5 C2.3 7.8 6.8 7.8 8.5 5 C10.2 2.2 14.7 2.2 14.7 5 C14.7 7.8 10.2 7.8 8.5 5Z" fill="none" stroke="#222" stroke-width="1.7"/></svg>
<svg style="position:absolute;left:1485px;top:808px" width="18" height="18" viewBox="0 0 18 18"><path d="M4.2 9 A4.8 4.8 0 0 1 12.8 6" fill="none" stroke="#1c1c1c" stroke-width="2"/><path d="M13.8 9 A4.8 4.8 0 0 1 5.2 12" fill="none" stroke="#1c1c1c" stroke-width="2"/><path d="M10.5 4 L14.8 3.5 L14 8 Z" fill="#1c1c1c"/><path d="M7.5 14 L3.2 14.5 L4 10 Z" fill="#1c1c1c"/></svg>
<div style="position:absolute;left:1290.40px;top:832.40px;width:1.20px;height:30.60px;background:#444;"></div>
<div style="position:absolute;left:1291.60px;top:833.20px;width:134.50px;height:29.80px;background:linear-gradient(#bababa,#9c9c9c 50%,#7e7e7e);border-radius:4px 4px 0 0;"></div>
<div style="position:absolute;left:1427.00px;top:833.20px;width:134.00px;height:29.80px;background:linear-gradient(#bababa,#9c9c9c 50%,#7e7e7e);border-radius:4px 0 0 0;"></div>
<div style="position:absolute;left:1426.00px;top:832.40px;width:1.00px;height:30.60px;background:#444;"></div>
<div style="position:absolute;left:1311.00px;top:838.30px;width:19.60px;height:19.60px;background:linear-gradient(#8c8c8c,#a8a8a8 60%,#b8b8b8);border-radius:50%;"></div>
<div style="position:absolute;left:1524.50px;top:838.30px;width:19.60px;height:19.60px;background:linear-gradient(#8c8c8c,#a8a8a8 60%,#b8b8b8);border-radius:50%;"></div>
<svg style="position:absolute;left:1314px;top:841px" width="14" height="14" viewBox="0 0 14 14"><path d="M6 2.5 L2.5 7 L6 11.5 M10.5 2.5 L7 7 L10.5 11.5" fill="none" stroke="#2a2a2a" stroke-width="1.4"/></svg>
<svg style="position:absolute;left:1527.5px;top:841px" width="14" height="14" viewBox="0 0 14 14"><path d="M3.5 2.5 L7 7 L3.5 11.5 M8 2.5 L11.5 7 L8 11.5" fill="none" stroke="#2a2a2a" stroke-width="1.4"/></svg>
<div class="t" style="left:1347.70px;top:838.05px;font-size:20.41px;font-weight:normal;color:#2e2e2e;transform:scaleX(1.0940);-webkit-text-stroke:0.5px #2e2e2e;">Back</div>
<div class="t" style="left:1454.30px;top:837.17px;font-size:21.45px;font-weight:normal;color:#2e2e2e;transform:scaleX(1.1661);-webkit-text-stroke:0.5px #2e2e2e;">Next</div>
<div style="position:absolute;left:912.00px;top:29.30px;width:649.00px;height:523.70px;background:#d98c5e;"></div>
<div style="position:absolute;left:918.20px;top:36.20px;width:638.20px;height:509.70px;background:#333333;"></div>
<div class="t" style="left:1197.70px;top:41.18px;font-size:14.14px;font-weight:normal;color:#c8c8c8;transform:scaleX(0.9408);">CIE 1976 u'v'</div>
<div style="position:absolute;left:953.00px;top:57.00px;width:601.00px;height:463.00px;background:#242424;border:1px solid #959595;box-sizing:border-box"></div>
<div style="position:absolute;left:953.8px;top:57.8px;width:599.5px;height:461.2px;overflow:hidden;clip-path:polygon(256.6px 449.4px,256.6px 449.4px,256.6px 449.4px,256.5px 449.4px,256.5px 449.4px,256.5px 449.4px,256.4px 449.5px,256.4px 449.5px,256.3px 449.6px,256.3px 449.6px,256.2px 449.7px,256.2px 449.7px,256.1px 449.7px,256.0px 449.7px,256.0px 449.7px,255.9px 449.7px,255.8px 449.7px,255.8px 449.8px,255.7px 449.8px,255.6px 449.9px,255.5px 449.9px,255.4px 449.9px,255.3px 449.9px,255.2px 449.9px,255.1px 449.9px,255.0px 449.9px,254.9px 449.9px,254.8px 449.9px,254.6px 449.9px,254.5px 449.9px,254.4px 449.9px,254.2px 449.9px,254.1px 450.0px,253.9px 450.0px,253.7px 450.0px,253.5px 449.9px,253.3px 449.9px,253.0px 449.7px,252.7px 449.6px,252.4px 449.4px,252.0px 449.2px,251.6px 448.9px,251.1px 448.6px,250.6px 448.3px,250.0px 447.9px,249.4px 447.5px,248.8px 447.0px,248.2px 446.5px,247.5px 446.0px,246.8px 445.4px,245.9px 444.8px,245.1px 444.1px,244.1px 443.3px,243.1px 442.5px,242.0px 441.6px,240.9px 440.7px,239.7px 439.7px,238.5px 438.7px,237.3px 437.6px,235.9px 436.4px,234.5px 435.2px,233.1px 434.0px,231.5px 432.8px,230.0px 431.4px,228.3px 430.0px,226.5px 428.6px,224.6px 427.0px,222.5px 425.3px,220.4px 423.6px,218.2px 421.8px,215.9px 419.9px,213.5px 417.9px,211.1px 415.9px,208.6px 413.8px,206.0px 411.6px,203.2px 409.2px,200.3px 406.7px,197.3px 404.1px,194.2px 401.3px,191.0px 398.3px,187.6px 395.1px,184.1px 391.8px,180.6px 388.4px,176.9px 384.7px,173.0px 380.6px,168.8px 376.0px,164.3px 370.9px,159.6px 365.3px,154.5px 359.3px,149.3px 352.8px,144.0px 345.9px,138.4px 338.6px,132.7px 330.8px,126.8px 322.5px,120.7px 313.9px,114.6px 304.8px,108.4px 295.3px,102.0px 285.3px,95.5px 274.9px,89.1px 264.3px,82.8px 253.7px,76.4px 242.8px,70.1px 231.7px,63.8px 220.5px,57.8px 209.3px,52.1px 198.3px,46.8px 187.4px,41.7px 176.5px,36.8px 165.8px,32.3px 155.3px,28.1px 145.2px,24.3px 135.5px,20.7px 126.1px,17.5px 117.1px,14.5px 108.5px,11.9px 100.4px,9.6px 92.9px,7.6px 85.8px,6.0px 79.2px,4.6px 73.0px,3.5px 67.1px,2.6px 61.7px,1.9px 56.8px,1.6px 52.2px,1.4px 48.0px,1.4px 44.0px,1.7px 40.2px,2.1px 36.8px,2.8px 33.6px,3.6px 30.7px,4.6px 28.0px,5.8px 25.6px,7.2px 23.3px,8.8px 21.3px,10.5px 19.5px,12.3px 17.9px,14.2px 16.5px,16.3px 15.4px,18.5px 14.4px,20.8px 13.5px,23.1px 12.8px,25.5px 12.2px,28.0px 11.7px,30.6px 11.4px,33.3px 11.1px,36.0px 10.9px,38.7px 10.7px,41.5px 10.5px,44.3px 10.5px,47.2px 10.4px,50.0px 10.4px,52.9px 10.4px,55.7px 10.4px,58.5px 10.4px,61.4px 10.5px,64.3px 10.6px,67.2px 10.7px,70.1px 10.8px,73.1px 10.9px,76.1px 11.1px,79.2px 11.3px,82.3px 11.5px,85.4px 11.7px,88.6px 11.9px,91.9px 12.2px,95.2px 12.4px,98.6px 12.7px,102.0px 13.0px,105.5px 13.3px,109.0px 13.7px,112.6px 14.0px,116.3px 14.4px,120.1px 14.7px,123.9px 15.1px,127.8px 15.5px,131.8px 15.9px,135.8px 16.4px,140.0px 16.8px,144.2px 17.3px,148.6px 17.7px,153.0px 18.2px,157.5px 18.7px,162.1px 19.2px,166.8px 19.8px,171.6px 20.3px,176.5px 20.9px,181.5px 21.4px,186.6px 22.0px,191.8px 22.6px,197.1px 23.2px,202.5px 23.8px,208.0px 24.4px,213.6px 25.1px,219.3px 25.7px,225.1px 26.4px,231.0px 27.1px,237.0px 27.8px,243.2px 28.5px,249.4px 29.2px,255.7px 29.9px,262.2px 30.7px,268.7px 31.4px,275.3px 32.2px,282.1px 33.0px,288.9px 33.7px,295.8px 34.5px,302.7px 35.3px,309.8px 36.1px,316.9px 37.0px,324.1px 37.8px,331.3px 38.6px,338.6px 39.4px,345.9px 40.3px,353.2px 41.2px,360.6px 42.0px,367.8px 42.8px,375.0px 43.7px,382.1px 44.5px,389.2px 45.3px,396.2px 46.1px,403.2px 46.9px,410.2px 47.7px,417.2px 48.5px,424.1px 49.3px,431.0px 50.1px,437.6px 50.9px,444.1px 51.6px,450.5px 52.3px,456.8px 53.1px,462.9px 53.8px,468.8px 54.4px,474.7px 55.1px,480.3px 55.8px,485.9px 56.4px,491.2px 57.0px,496.4px 57.6px,501.4px 58.2px,506.3px 58.8px,511.0px 59.3px,515.5px 59.8px,519.9px 60.3px,524.1px 60.8px,528.2px 61.3px,532.1px 61.7px,535.9px 62.2px,539.5px 62.6px,543.1px 63.0px,546.5px 63.4px,549.8px 63.8px,553.0px 64.1px,556.1px 64.5px,559.2px 64.9px,562.1px 65.2px,565.0px 65.5px,567.8px 65.9px,570.5px 66.2px,573.1px 66.5px,575.6px 66.8px,578.0px 67.0px,580.4px 67.3px,582.6px 67.6px,584.8px 67.8px,586.8px 68.0px,588.8px 68.3px,590.7px 68.5px,592.5px 68.7px,594.1px 68.9px,595.5px 69.0px,596.9px 69.2px,598.4px 69.4px,600.1px 69.6px,602.0px 69.8px,604.1px 70.0px,606.3px 70.3px,608.4px 70.5px,610.5px 70.8px,612.4px 71.0px,614.4px 71.2px,616.3px 71.4px,618.0px 71.6px,619.5px 71.8px,620.6px 71.9px,621.4px 72.0px,622.1px 72.1px,622.6px 72.2px,623.0px 72.2px)">
<div style="position:absolute;left:26.8px;top:9.5px;width:58.8px;height:2.4px;background:linear-gradient(90deg,#009900 0px,#009900 59px)"></div><div style="position:absolute;left:17.8px;top:11.5px;width:92.3px;height:2.4px;background:linear-gradient(90deg,#009900 0px,#009900 92px)"></div><div style="position:absolute;left:13.0px;top:13.5px;width:117.4px;height:2.4px;background:linear-gradient(90deg,#009900 0px,#029900 111px,#0b9900 117px)"></div><div style="position:absolute;left:9.9px;top:15.5px;width:139.4px;height:2.4px;background:linear-gradient(90deg,#009900 0px,#019900 114px,#299900 139px)"></div><div style="position:absolute;left:7.5px;top:17.5px;width:159.8px;height:2.4px;background:linear-gradient(90deg,#009900 0px,#029900 117px,#489900 160px)"></div><div style="position:absolute;left:5.7px;top:19.5px;width:179.5px;height:2.4px;background:linear-gradient(90deg,#009903 0px,#039900 120px,#609900 174px,#6c9900 179px)"></div><div style="position:absolute;left:4.1px;top:21.5px;width:198.7px;height:2.4px;background:linear-gradient(90deg,#009905 0px,#009900 120px,#5d9900 174px,#939900 199px)"></div><div style="position:absolute;left:2.9px;top:23.5px;width:217.4px;height:2.4px;background:linear-gradient(90deg,#009907 0px,#039900 123px,#619900 177px,#969900 201px,#997900 217px)"></div><div style="position:absolute;left:1.9px;top:25.5px;width:235.8px;height:2.4px;background:linear-gradient(90deg,#009909 0px,#019900 123px,#5f9900 177px,#999600 204px,#996600 231px,#996000 236px)"></div><div style="position:absolute;left:1.1px;top:27.5px;width:253.9px;height:2.4px;background:linear-gradient(90deg,#00990b 0px,#039900 126px,#649900 180px,#999800 204px,#996600 231px,#994d00 254px)"></div><div style="position:absolute;left:0.4px;top:29.5px;width:271.9px;height:2.4px;background:linear-gradient(90deg,#00990d 0px,#029902 126px,#629900 180px,#999900 204px,#996700 231px,#993e00 272px)"></div><div style="position:absolute;left:0.0px;top:31.5px;width:289.7px;height:2.4px;background:linear-gradient(90deg,#009910 0px,#019905 126px,#5b9900 177px,#999900 204px,#996700 231px,#993b00 276px,#993200 290px)"></div><div style="position:absolute;left:0.0px;top:33.5px;width:307.1px;height:2.4px;background:linear-gradient(90deg,#009912 0px,#009908 126px,#5b9901 177px,#999900 204px,#996600 231px,#993a00 276px,#992900 307px)"></div><div style="position:absolute;left:0.0px;top:35.5px;width:324.5px;height:2.4px;background:linear-gradient(90deg,#009914 0px,#00990a 126px,#5b9904 177px,#999800 204px,#996600 231px,#993a00 276px,#992100 325px)"></div><div style="position:absolute;left:0.0px;top:37.5px;width:341.9px;height:2.4px;background:linear-gradient(90deg,#009916 0px,#04990d 129px,#629907 180px,#999804 204px,#996500 231px,#993a00 276px,#991a00 342px)"></div><div style="position:absolute;left:0.0px;top:39.5px;width:359.2px;height:2.4px;background:linear-gradient(90deg,#009918 0px,#039910 129px,#62990b 180px,#999807 204px,#996502 231px,#993900 276px,#991500 359px)"></div><div style="position:absolute;left:0.0px;top:41.5px;width:376.5px;height:2.4px;background:linear-gradient(90deg,#00991b 0px,#039913 129px,#62990e 180px,#99970b 204px,#996405 231px,#993900 276px,#991500 357px,#991000 376px)"></div><div style="position:absolute;left:0.0px;top:43.5px;width:393.8px;height:2.4px;background:linear-gradient(90deg,#00991d 0px,#039916 129px,#629912 180px,#99970f 204px,#996408 231px,#993801 276px,#991500 357px,#990c00 394px)"></div><div style="position:absolute;left:0.0px;top:45.5px;width:411.2px;height:2.4px;background:linear-gradient(90deg,#00991f 0px,#029919 129px,#629915 180px,#999613 204px,#99630a 231px,#993803 276px,#991400 357px,#990800 411px)"></div><div style="position:absolute;left:0.0px;top:47.5px;width:428.6px;height:2.4px;background:linear-gradient(90deg,#009921 0px,#02991c 129px,#5b9919 177px,#999616 204px,#99630d 231px,#993705 276px,#991400 357px,#990500 429px)"></div><div style="position:absolute;left:0.0px;top:49.5px;width:446.0px;height:2.4px;background:linear-gradient(90deg,#009924 0px,#01991f 129px,#5b991d 177px,#99951a 204px,#996210 231px,#993707 276px,#991400 357px,#990200 446px)"></div><div style="position:absolute;left:0.0px;top:51.5px;width:463.6px;height:2.4px;background:linear-gradient(90deg,#009926 0px,#009923 129px,#5b9921 177px,#99951e 204px,#996213 231px,#993609 276px,#991301 357px,#990000 464px)"></div><div style="position:absolute;left:0.0px;top:53.5px;width:481.0px;height:2.4px;background:linear-gradient(90deg,#009928 0px,#009926 129px,#5b9924 177px,#969923 201px,#996116 231px,#99360b 276px,#991302 357px,#990000 477px,#990000 481px)"></div><div style="position:absolute;left:0.0px;top:55.5px;width:498.2px;height:2.4px;background:linear-gradient(90deg,#00992b 0px,#009929 129px,#5b9928 177px,#969928 201px,#996118 231px,#99350d 276px,#991304 357px,#990000 477px,#990000 498px)"></div><div style="position:absolute;left:0.0px;top:57.5px;width:515.5px;height:2.4px;background:linear-gradient(90deg,#00992d 0px,#04992c 132px,#62992c 180px,#97992c 201px,#99641d 228px,#993910 270px,#991506 348px,#990000 471px,#990000 516px)"></div><div style="position:absolute;left:0.0px;top:59.5px;width:532.9px;height:2.4px;background:linear-gradient(90deg,#00992f 0px,#039930 132px,#629930 180px,#979930 201px,#996420 228px,#993912 270px,#991507 348px,#990000 468px,#990000 533px)"></div><div style="position:absolute;left:0.0px;top:61.5px;width:550.4px;height:2.4px;background:linear-gradient(90deg,#009932 0px,#039933 132px,#629934 180px,#989935 201px,#996323 228px,#993814 270px,#991408 348px,#990001 468px,#990000 550px)"></div><div style="position:absolute;left:0.0px;top:63.5px;width:567.6px;height:2.4px;background:linear-gradient(90deg,#009934 0px,#029937 132px,#639938 180px,#999939 201px,#996727 225px,#993c18 264px,#99180b 336px,#990002 459px,#990000 568px)"></div><div style="position:absolute;left:0.2px;top:65.5px;width:584.7px;height:2.4px;background:linear-gradient(90deg,#009937 0px,#02993a 132px,#5c993c 177px,#99983d 201px,#99662a 225px,#993b1a 264px,#99170c 336px,#990003 459px,#990000 585px)"></div><div style="position:absolute;left:0.5px;top:67.5px;width:599.0px;height:2.4px;background:linear-gradient(90deg,#009939 0px,#02993e 132px,#5d9940 177px,#999741 201px,#99652d 225px,#993b1c 264px,#99170e 336px,#990004 456px,#990000 599px)"></div><div style="position:absolute;left:0.9px;top:69.5px;width:598.6px;height:2.4px;background:linear-gradient(90deg,#00993c 0px,#029941 132px,#5e9945 177px,#999545 201px,#996430 225px,#993a1e 264px,#99160f 336px,#990005 456px,#990000 599px)"></div><div style="position:absolute;left:1.3px;top:71.5px;width:598.2px;height:2.4px;background:linear-gradient(90deg,#00993e 0px,#029945 132px,#5f9949 177px,#96994b 198px,#996333 225px,#993920 264px,#991610 336px,#990006 453px,#990000 598px)"></div><div style="position:absolute;left:1.7px;top:73.5px;width:597.8px;height:2.4px;background:linear-gradient(90deg,#009941 0px,#039949 132px,#60994d 177px,#989950 198px,#996236 225px,#993621 267px,#991311 342px,#990006 456px,#990000 598px)"></div><div style="position:absolute;left:2.2px;top:75.5px;width:597.3px;height:2.4px;background:linear-gradient(90deg,#009943 0px,#03994d 132px,#619952 177px,#999955 198px,#99653b 222px,#993a26 261px,#991613 333px,#990007 450px,#990001 597px)"></div><div style="position:absolute;left:2.6px;top:77.5px;width:596.9px;height:2.4px;background:linear-gradient(90deg,#009946 0px,#039950 132px,#629957 177px,#999759 198px,#99643e 222px,#993928 261px,#991515 333px,#990009 447px,#990002 597px)"></div><div style="position:absolute;left:3.1px;top:79.5px;width:596.4px;height:2.4px;background:linear-gradient(90deg,#009949 0px,#039954 132px,#63995b 177px,#99955d 198px,#996241 222px,#99382a 261px,#991416 333px,#99000a 444px,#990002 596px)"></div><div style="position:absolute;left:3.6px;top:81.5px;width:595.9px;height:2.4px;background:linear-gradient(90deg,#00994b 0px,#049958 132px,#5d995f 174px,#969964 195px,#996144 222px,#99372c 261px,#991418 333px,#99000b 444px,#990003 596px)"></div><div style="position:absolute;left:4.1px;top:83.5px;width:595.4px;height:2.4px;background:linear-gradient(90deg,#00994e 0px,#04995c 132px,#5f9964 174px,#989969 195px,#99644a 219px,#99382f 258px,#99151a 327px,#99000c 438px,#990003 595px)"></div><div style="position:absolute;left:4.6px;top:85.5px;width:594.9px;height:2.4px;background:linear-gradient(90deg,#009951 0px,#009960 129px,#519968 168px,#99986e 195px,#996850 216px,#993c34 252px,#99181d 318px,#99000d 432px,#990004 595px)"></div><div style="position:absolute;left:5.1px;top:87.5px;width:594.4px;height:2.4px;background:linear-gradient(90deg,#009953 0px,#009964 129px,#5a996d 171px,#999572 195px,#996653 216px,#993b37 252px,#99171f 318px,#99000e 429px,#990005 594px)"></div><div style="position:absolute;left:5.7px;top:89.5px;width:593.8px;height:2.4px;background:linear-gradient(90deg,#009956 0px,#009968 129px,#5b9973 171px,#969979 192px,#996052 219px,#993635 258px,#99131e 330px,#99000f 435px,#990005 594px)"></div><div style="position:absolute;left:6.2px;top:91.5px;width:593.3px;height:2.4px;background:linear-gradient(90deg,#009959 0px,#00996d 129px,#5d9978 171px,#98997f 192px,#996359 216px,#99393b 252px,#991622 318px,#990011 426px,#990006 593px)"></div><div style="position:absolute;left:6.8px;top:93.5px;width:592.7px;height:2.4px;background:linear-gradient(90deg,#00995c 0px,#019971 129px,#5e997d 171px,#999883 192px,#99675f 213px,#993b3f 249px,#991624 315px,#990012 423px,#990006 593px)"></div><div style="position:absolute;left:7.4px;top:95.5px;width:592.1px;height:2.4px;background:linear-gradient(90deg,#00995f 0px,#019976 129px,#609982 171px,#999587 192px,#996562 213px,#993a41 249px,#991625 315px,#990013 423px,#990007 592px)"></div><div style="position:absolute;left:8.0px;top:97.5px;width:591.5px;height:2.4px;background:linear-gradient(90deg,#009962 0px,#02997a 129px,#619988 171px,#96998f 189px,#995f61 216px,#99343f 255px,#991124 327px,#990013 426px,#990008 591px)"></div><div style="position:absolute;left:8.6px;top:99.5px;width:590.8px;height:2.4px;background:linear-gradient(90deg,#009965 0px,#02997f 129px,#5b998c 168px,#989996 189px,#99676c 210px,#993d4a 243px,#99192c 303px,#990016 411px,#990008 591px)"></div><div style="position:absolute;left:9.2px;top:101.5px;width:588.3px;height:2.4px;background:linear-gradient(90deg,#009968 0px,#039984 129px,#5d9992 168px,#989699 189px,#99606b 213px,#993747 249px,#99142a 315px,#990016 417px,#990009 588px)"></div><div style="position:absolute;left:9.9px;top:103.5px;width:585.7px;height:2.4px;background:linear-gradient(90deg,#00996b 0px,#049989 129px,#5f9998 168px,#998b96 192px,#995a6a 216px,#993145 255px,#990f27 330px,#990017 420px,#99000a 586px)"></div><div style="position:absolute;left:10.5px;top:105.5px;width:583.1px;height:2.4px;background:linear-gradient(90deg,#00996e 0px,#00998c 126px,#5d9499 168px,#998999 192px,#99586c 216px,#993047 255px,#990e28 330px,#990018 417px,#99000a 583px)"></div><div style="position:absolute;left:11.2px;top:107.5px;width:580.5px;height:2.4px;background:linear-gradient(90deg,#009971 0px,#009991 126px,#4e9199 162px,#997f95 195px,#99526b 219px,#992b45 261px,#990a26 342px,#990018 423px,#99000b 580px)"></div><div style="position:absolute;left:11.9px;top:109.5px;width:577.9px;height:2.4px;background:linear-gradient(90deg,#009975 0px,#009996 126px,#997c98 195px,#994d6a 222px,#992644 267px,#990624 357px,#990016 453px,#99000c 578px)"></div><div style="position:absolute;left:12.5px;top:111.5px;width:575.2px;height:2.4px;background:linear-gradient(90deg,#009978 0px,#009699 126px,#967899 195px,#994869 225px,#992242 273px,#990323 369px,#99000d 575px)"></div><div style="position:absolute;left:13.2px;top:113.5px;width:572.6px;height:2.4px;background:linear-gradient(90deg,#00997b 0px,#009599 117px,#019199 126px,#997198 198px,#99466b 225px,#992144 273px,#990324 369px,#99000d 573px)"></div><div style="position:absolute;left:13.9px;top:115.5px;width:570.0px;height:2.4px;background:linear-gradient(90deg,#00997f 0px,#009599 105px,#028d99 126px,#976e99 198px,#993e66 231px,#991c41 282px,#990022 384px,#99000e 570px)"></div><div style="position:absolute;left:14.6px;top:117.5px;width:567.4px;height:2.4px;background:linear-gradient(90deg,#009982 0px,#009599 93px,#028899 126px,#996797 201px,#993d69 231px,#991b42 282px,#990023 384px,#99000f 567px)"></div><div style="position:absolute;left:15.3px;top:119.5px;width:564.7px;height:2.4px;background:linear-gradient(90deg,#009985 0px,#009599 81px,#038499 126px,#986499 201px,#993c6b 231px,#991a44 282px,#990025 381px,#990010 565px)"></div><div style="position:absolute;left:16.0px;top:121.5px;width:562.0px;height:2.4px;background:linear-gradient(90deg,#009989 0px,#009599 69px,#048099 126px,#995d96 204px,#99386a 234px,#991742 288px,#990025 384px,#990011 562px)"></div><div style="position:absolute;left:16.8px;top:123.5px;width:559.4px;height:2.4px;background:linear-gradient(90deg,#00998d 0px,#009399 60px,#007d99 123px,#995b99 204px,#99366c 234px,#991644 288px,#990026 384px,#990011 559px)"></div><div style="position:absolute;left:17.5px;top:125.5px;width:556.7px;height:2.4px;background:linear-gradient(90deg,#009990 0px,#009299 51px,#007999 123px,#995595 207px,#993067 240px,#991241 297px,#990026 387px,#990012 557px)"></div><div style="position:absolute;left:18.2px;top:127.5px;width:554.0px;height:2.4px;background:linear-gradient(90deg,#009994 0px,#008b99 60px,#007599 123px,#995398 207px,#992f69 240px,#991143 297px,#990028 384px,#990013 554px)"></div><div style="position:absolute;left:19.0px;top:129.5px;width:551.3px;height:2.4px;background:linear-gradient(90deg,#009998 0px,#017299 123px,#985099 207px,#992c68 243px,#990e41 303px,#990029 384px,#990014 551px)"></div><div style="position:absolute;left:19.7px;top:131.5px;width:548.6px;height:2.4px;background:linear-gradient(90deg,#009799 0px,#026e99 123px,#994b97 210px,#992a6a 243px,#990e43 303px,#99002b 381px,#990015 549px)"></div><div style="position:absolute;left:20.5px;top:133.5px;width:545.9px;height:2.4px;background:linear-gradient(90deg,#009399 0px,#026b99 123px,#994999 210px,#992769 246px,#990c43 306px,#99002c 381px,#990015 546px)"></div><div style="position:absolute;left:21.3px;top:135.5px;width:543.2px;height:2.4px;background:linear-gradient(90deg,#008f99 0px,#036899 123px,#994496 213px,#992468 249px,#990a41 312px,#99002d 381px,#990016 543px)"></div><div style="position:absolute;left:22.1px;top:137.5px;width:540.5px;height:2.4px;background:linear-gradient(90deg,#008c99 0px,#046599 123px,#994298 213px,#99236a 249px,#990943 312px,#99002e 381px,#990017 540px)"></div><div style="position:absolute;left:22.9px;top:139.5px;width:537.7px;height:2.4px;background:linear-gradient(90deg,#008999 0px,#006399 120px,#993d95 216px,#992069 252px,#990742 318px,#99002c 393px,#990018 538px)"></div><div style="position:absolute;left:23.7px;top:141.5px;width:535.0px;height:2.4px;background:linear-gradient(90deg,#008699 0px,#016099 120px,#993b97 216px,#991f6b 252px,#990744 315px,#99002e 387px,#990019 535px)"></div><div style="position:absolute;left:24.5px;top:143.5px;width:532.2px;height:2.4px;background:linear-gradient(90deg,#008299 0px,#015d99 120px,#983a99 216px,#991d6a 255px,#990543 321px,#990023 453px,#99001a 532px)"></div><div style="position:absolute;left:25.3px;top:145.5px;width:529.5px;height:2.4px;background:linear-gradient(90deg,#007f99 0px,#025a99 120px,#993597 219px,#991a69 258px,#990342 327px,#990022 465px,#99001b 529px)"></div><div style="position:absolute;left:26.1px;top:147.5px;width:526.7px;height:2.4px;background:linear-gradient(90deg,#007c99 0px,#035899 120px,#993498 219px,#99196a 258px,#990243 327px,#990023 462px,#99001c 527px)"></div><div style="position:absolute;left:26.9px;top:149.5px;width:523.9px;height:2.4px;background:linear-gradient(90deg,#007a99 0px,#035599 120px,#993096 222px,#991567 264px,#990041 336px,#990022 480px,#99001d 524px)"></div><div style="position:absolute;left:27.8px;top:151.5px;width:521.2px;height:2.4px;background:linear-gradient(90deg,#007799 0px,#045399 120px,#992e97 222px,#991468 264px,#990042 336px,#990022 480px,#99001d 521px)"></div><div style="position:absolute;left:28.6px;top:153.5px;width:518.4px;height:2.4px;background:linear-gradient(90deg,#007499 0px,#015299 117px,#992d99 222px,#99136a 264px,#990043 336px,#990023 480px,#99001e 518px)"></div><div style="position:absolute;left:29.4px;top:155.5px;width:515.6px;height:2.4px;background:linear-gradient(90deg,#007299 0px,#014f99 117px,#992997 225px,#991169 267px,#990042 342px,#990022 492px,#99001f 516px)"></div><div style="position:absolute;left:30.3px;top:157.5px;width:512.8px;height:2.4px;background:linear-gradient(90deg,#006f99 0px,#024d99 117px,#992898 225px,#99106a 267px,#990044 339px,#990024 483px,#990020 513px)"></div><div style="position:absolute;left:31.2px;top:159.5px;width:510.0px;height:2.4px;background:linear-gradient(90deg,#006d99 0px,#034b99 117px,#992496 228px,#990d67 273px,#990045 339px,#990025 483px,#990021 510px)"></div><div style="position:absolute;left:32.0px;top:161.5px;width:507.2px;height:2.4px;background:linear-gradient(90deg,#006a99 0px,#034999 117px,#992397 228px,#990c69 273px,#990046 339px,#990026 480px,#990022 507px)"></div><div style="position:absolute;left:32.9px;top:163.5px;width:504.4px;height:2.4px;background:linear-gradient(90deg,#006899 0px,#044799 117px,#992299 228px,#990c6a 273px,#990048 336px,#990027 474px,#990023 504px)"></div><div style="position:absolute;left:33.7px;top:165.5px;width:501.6px;height:2.4px;background:linear-gradient(90deg,#006699 0px,#014699 114px,#991e96 231px,#990a69 276px,#990049 336px,#990028 474px,#990024 502px)"></div><div style="position:absolute;left:34.6px;top:167.5px;width:498.8px;height:2.4px;background:linear-gradient(90deg,#006399 0px,#014499 114px,#991d98 231px,#99096a 276px,#99004a 336px,#990029 471px,#990025 499px)"></div><div style="position:absolute;left:35.5px;top:169.5px;width:495.9px;height:2.4px;background:linear-gradient(90deg,#006199 0px,#024299 114px,#991a95 234px,#990667 282px,#990047 348px,#990026 496px)"></div><div style="position:absolute;left:36.4px;top:171.5px;width:493.1px;height:2.4px;background:linear-gradient(90deg,#005f99 0px,#034099 114px,#991997 234px,#990669 282px,#990044 360px,#990027 493px)"></div><div style="position:absolute;left:37.3px;top:173.5px;width:490.3px;height:2.4px;background:linear-gradient(90deg,#005d99 0px,#033e99 114px,#991898 234px,#99056a 282px,#990043 366px,#990028 490px)"></div><div style="position:absolute;left:38.2px;top:175.5px;width:487.4px;height:2.4px;background:linear-gradient(90deg,#005b99 0px,#043c99 114px,#991596 237px,#990267 288px,#990040 378px,#990029 487px)"></div><div style="position:absolute;left:39.1px;top:177.5px;width:484.6px;height:2.4px;background:linear-gradient(90deg,#005999 0px,#013b99 111px,#991497 237px,#990268 288px,#990042 375px,#99002b 485px)"></div><div style="position:absolute;left:40.1px;top:179.5px;width:481.7px;height:2.4px;background:linear-gradient(90deg,#005799 0px,#023a99 111px,#991295 240px,#990067 291px,#990041 381px,#99002c 482px)"></div><div style="position:absolute;left:41.0px;top:181.5px;width:478.8px;height:2.4px;background:linear-gradient(90deg,#005599 0px,#023899 111px,#991196 240px,#990069 291px,#990042 381px,#99002d 479px)"></div><div style="position:absolute;left:41.9px;top:183.5px;width:475.9px;height:2.4px;background:linear-gradient(90deg,#005399 0px,#033699 111px,#990f98 240px,#99006a 291px,#990042 381px,#99002e 476px)"></div><div style="position:absolute;left:42.9px;top:185.5px;width:473.1px;height:2.4px;background:linear-gradient(90deg,#005299 0px,#043599 111px,#990d95 243px,#990067 297px,#990040 393px,#99002f 473px)"></div><div style="position:absolute;left:43.8px;top:187.5px;width:470.2px;height:2.4px;background:linear-gradient(90deg,#005099 0px,#013499 108px,#990c97 243px,#990068 297px,#990042 390px,#990030 470px)"></div><div style="position:absolute;left:44.8px;top:189.5px;width:467.3px;height:2.4px;background:linear-gradient(90deg,#004e99 0px,#023399 108px,#990b98 243px,#990069 297px,#990042 390px,#990031 467px)"></div><div style="position:absolute;left:45.8px;top:191.5px;width:464.3px;height:2.4px;background:linear-gradient(90deg,#004c99 0px,#023199 108px,#990996 246px,#99006a 297px,#990043 390px,#990032 464px)"></div><div style="position:absolute;left:46.7px;top:193.5px;width:461.4px;height:2.4px;background:linear-gradient(90deg,#004b99 0px,#033099 108px,#990897 246px,#99006b 297px,#990044 390px,#990034 461px)"></div><div style="position:absolute;left:47.7px;top:195.5px;width:458.5px;height:2.4px;background:linear-gradient(90deg,#004999 0px,#042e99 108px,#990798 246px,#99006a 300px,#990043 396px,#990035 458px)"></div><div style="position:absolute;left:48.7px;top:197.5px;width:455.6px;height:2.4px;background:linear-gradient(90deg,#004799 0px,#012e99 105px,#990596 249px,#990068 306px,#990041 408px,#990036 456px)"></div><div style="position:absolute;left:49.7px;top:199.5px;width:452.6px;height:2.4px;background:linear-gradient(90deg,#004699 0px,#022c99 105px,#990497 249px,#990069 306px,#990042 405px,#990037 453px)"></div><div style="position:absolute;left:50.7px;top:201.5px;width:449.6px;height:2.4px;background:linear-gradient(90deg,#004499 0px,#032b99 105px,#990295 252px,#990066 312px,#990040 417px,#990039 450px)"></div><div style="position:absolute;left:51.8px;top:203.5px;width:446.7px;height:2.4px;background:linear-gradient(90deg,#004399 0px,#032a99 105px,#990196 252px,#990067 312px,#990041 417px,#99003a 447px)"></div><div style="position:absolute;left:52.8px;top:205.5px;width:443.7px;height:2.4px;background:linear-gradient(90deg,#004199 0px,#042999 105px,#990197 252px,#990068 312px,#990041 417px,#99003b 444px)"></div><div style="position:absolute;left:53.8px;top:207.5px;width:440.7px;height:2.4px;background:linear-gradient(90deg,#004099 0px,#022899 102px,#990095 255px,#990066 318px,#99003f 429px,#99003c 441px)"></div><div style="position:absolute;left:54.9px;top:209.5px;width:437.7px;height:2.4px;background:linear-gradient(90deg,#003f99 0px,#022799 102px,#990096 255px,#990067 318px,#990040 426px,#99003e 438px)"></div><div style="position:absolute;left:56.0px;top:211.5px;width:434.7px;height:2.4px;background:linear-gradient(90deg,#003d99 0px,#032699 102px,#990097 255px,#990068 318px,#990041 426px,#99003f 435px)"></div><div style="position:absolute;left:57.0px;top:213.5px;width:431.7px;height:2.4px;background:linear-gradient(90deg,#003c99 0px,#042499 102px,#990098 255px,#990069 318px,#990042 426px,#990040 432px)"></div><div style="position:absolute;left:58.1px;top:215.5px;width:428.7px;height:2.4px;background:linear-gradient(90deg,#003b99 0px,#022499 99px,#990099 255px,#99006a 318px,#990042 426px,#990042 429px)"></div><div style="position:absolute;left:59.2px;top:217.5px;width:425.6px;height:2.4px;background:linear-gradient(90deg,#003999 0px,#022399 99px,#950099 252px,#990063 333px,#990043 426px)"></div><div style="position:absolute;left:60.3px;top:219.5px;width:422.6px;height:2.4px;background:linear-gradient(90deg,#003899 0px,#032299 99px,#910099 249px,#99008f 267px,#990062 336px,#990045 423px)"></div><div style="position:absolute;left:61.4px;top:221.5px;width:419.6px;height:2.4px;background:linear-gradient(90deg,#003799 0px,#042199 99px,#8d0099 246px,#990093 264px,#990064 333px,#990046 420px)"></div><div style="position:absolute;left:62.5px;top:223.5px;width:416.5px;height:2.4px;background:linear-gradient(90deg,#003599 0px,#042099 99px,#890099 243px,#990094 264px,#990065 333px,#990048 417px)"></div><div style="position:absolute;left:63.6px;top:225.5px;width:413.5px;height:2.4px;background:linear-gradient(90deg,#003499 0px,#021f99 96px,#860099 240px,#990095 264px,#990066 333px,#990049 413px)"></div><div style="position:absolute;left:64.7px;top:227.5px;width:410.4px;height:2.4px;background:linear-gradient(90deg,#003399 0px,#031e99 96px,#820099 237px,#990095 264px,#990067 333px,#99004b 410px)"></div><div style="position:absolute;left:65.9px;top:229.5px;width:407.3px;height:2.4px;background:linear-gradient(90deg,#003299 0px,#041d99 96px,#7f0099 234px,#990096 264px,#990068 333px,#99004c 407px)"></div><div style="position:absolute;left:67.0px;top:231.5px;width:404.3px;height:2.4px;background:linear-gradient(90deg,#003199 0px,#041c99 96px,#7e0099 234px,#990094 267px,#990067 336px,#99004e 404px)"></div><div style="position:absolute;left:68.1px;top:233.5px;width:401.2px;height:2.4px;background:linear-gradient(90deg,#003099 0px,#021c99 93px,#7b0099 231px,#990095 267px,#990068 336px,#99004f 401px)"></div><div style="position:absolute;left:69.3px;top:235.5px;width:398.1px;height:2.4px;background:linear-gradient(90deg,#002e99 0px,#031b99 93px,#770099 228px,#990096 267px,#990067 339px,#990051 398px)"></div><div style="position:absolute;left:70.4px;top:237.5px;width:395.0px;height:2.4px;background:linear-gradient(90deg,#002d99 0px,#041a99 93px,#740099 225px,#990097 267px,#990068 339px,#990052 395px)"></div><div style="position:absolute;left:71.5px;top:239.5px;width:391.9px;height:2.4px;background:linear-gradient(90deg,#002c99 0px,#021a99 90px,#710099 222px,#990095 270px,#990067 342px,#990054 392px)"></div><div style="position:absolute;left:72.7px;top:241.5px;width:388.8px;height:2.4px;background:linear-gradient(90deg,#002b99 0px,#031999 90px,#6e0099 219px,#990096 270px,#990068 342px,#990056 389px)"></div><div style="position:absolute;left:73.8px;top:243.5px;width:385.8px;height:2.4px;background:linear-gradient(90deg,#002a99 0px,#031899 90px,#6b0099 216px,#990097 270px,#990068 342px,#990057 386px)"></div><div style="position:absolute;left:75.0px;top:245.5px;width:382.6px;height:2.4px;background:linear-gradient(90deg,#002999 0px,#041799 90px,#680099 213px,#990095 273px,#990066 348px,#990059 383px)"></div><div style="position:absolute;left:76.2px;top:247.5px;width:379.5px;height:2.4px;background:linear-gradient(90deg,#002899 0px,#021799 87px,#650099 210px,#990095 273px,#990067 348px,#99005b 380px)"></div><div style="position:absolute;left:77.3px;top:249.5px;width:376.4px;height:2.4px;background:linear-gradient(90deg,#002799 0px,#031699 87px,#630099 207px,#990096 273px,#990068 348px,#99005c 376px)"></div><div style="position:absolute;left:78.5px;top:251.5px;width:373.3px;height:2.4px;background:linear-gradient(90deg,#002699 0px,#031599 87px,#600099 204px,#990097 273px,#990069 348px,#99005e 373px)"></div><div style="position:absolute;left:79.7px;top:253.5px;width:370.2px;height:2.4px;background:linear-gradient(90deg,#002599 0px,#041499 87px,#5d0099 201px,#990095 276px,#990067 354px,#990060 370px)"></div><div style="position:absolute;left:80.9px;top:255.5px;width:367.1px;height:2.4px;background:linear-gradient(90deg,#002499 0px,#021499 84px,#5b0099 198px,#990096 276px,#990067 354px,#990062 367px)"></div><div style="position:absolute;left:82.0px;top:257.5px;width:364.0px;height:2.4px;background:linear-gradient(90deg,#002399 0px,#031399 84px,#5a0099 198px,#990097 276px,#990068 354px,#990064 364px)"></div><div style="position:absolute;left:83.2px;top:259.5px;width:360.8px;height:2.4px;background:linear-gradient(90deg,#002299 0px,#041299 84px,#580099 195px,#990095 279px,#990066 360px,#990066 361px)"></div><div style="position:absolute;left:84.4px;top:261.5px;width:357.7px;height:2.4px;background:linear-gradient(90deg,#002299 0px,#041199 84px,#550099 192px,#990096 279px,#990068 358px)"></div><div style="position:absolute;left:85.6px;top:263.5px;width:354.6px;height:2.4px;background:linear-gradient(90deg,#002199 0px,#031199 81px,#530099 189px,#990096 279px,#99006a 355px)"></div><div style="position:absolute;left:86.8px;top:265.5px;width:351.4px;height:2.4px;background:linear-gradient(90deg,#002099 0px,#031099 81px,#510099 186px,#990097 279px,#99006c 351px)"></div><div style="position:absolute;left:88.0px;top:267.5px;width:348.3px;height:2.4px;background:linear-gradient(90deg,#001f99 0px,#041099 81px,#4e0099 183px,#990095 282px,#99006e 348px)"></div><div style="position:absolute;left:89.2px;top:269.5px;width:345.1px;height:2.4px;background:linear-gradient(90deg,#001e99 0px,#040f99 81px,#4e0099 183px,#990096 282px,#990070 345px)"></div><div style="position:absolute;left:90.5px;top:271.5px;width:341.9px;height:2.4px;background:linear-gradient(90deg,#001d99 0px,#030f99 78px,#4c0099 180px,#990096 282px,#990072 342px)"></div><div style="position:absolute;left:91.7px;top:273.5px;width:338.8px;height:2.4px;background:linear-gradient(90deg,#001c99 0px,#030e99 78px,#4a0099 177px,#990097 282px,#990074 339px)"></div><div style="position:absolute;left:92.9px;top:275.5px;width:335.6px;height:2.4px;background:linear-gradient(90deg,#001c99 0px,#040d99 78px,#480099 174px,#990095 285px,#990076 336px)"></div><div style="position:absolute;left:94.2px;top:277.5px;width:332.4px;height:2.4px;background:linear-gradient(90deg,#001b99 0px,#030d99 75px,#460099 171px,#990096 285px,#990078 332px)"></div><div style="position:absolute;left:95.4px;top:279.5px;width:329.2px;height:2.4px;background:linear-gradient(90deg,#001a99 0px,#030c99 75px,#440099 168px,#990097 285px,#99007b 329px)"></div><div style="position:absolute;left:96.6px;top:281.5px;width:326.0px;height:2.4px;background:linear-gradient(90deg,#001999 0px,#040c99 75px,#440099 168px,#990095 288px,#99007d 326px)"></div><div style="position:absolute;left:97.9px;top:283.5px;width:322.9px;height:2.4px;background:linear-gradient(90deg,#001899 0px,#040b99 75px,#420099 165px,#990096 288px,#99007f 323px)"></div><div style="position:absolute;left:99.1px;top:285.5px;width:319.7px;height:2.4px;background:linear-gradient(90deg,#001899 0px,#030b99 72px,#400099 162px,#990096 288px,#990082 320px)"></div><div style="position:absolute;left:100.4px;top:287.5px;width:316.5px;height:2.4px;background:linear-gradient(90deg,#001799 0px,#040a99 72px,#3e0099 159px,#990097 288px,#990084 316px)"></div><div style="position:absolute;left:101.7px;top:289.5px;width:313.2px;height:2.4px;background:linear-gradient(90deg,#001699 0px,#040999 72px,#3e0099 159px,#990095 291px,#990086 313px)"></div><div style="position:absolute;left:103.0px;top:291.5px;width:310.0px;height:2.4px;background:linear-gradient(90deg,#001599 0px,#030999 69px,#3c0099 156px,#990096 291px,#990089 310px)"></div><div style="position:absolute;left:104.2px;top:293.5px;width:306.8px;height:2.4px;background:linear-gradient(90deg,#001599 0px,#030999 69px,#3c0099 156px,#990096 291px,#99008c 307px)"></div><div style="position:absolute;left:105.5px;top:295.5px;width:303.6px;height:2.4px;background:linear-gradient(90deg,#001499 0px,#040899 69px,#3e0099 159px,#990097 291px,#99008e 304px)"></div><div style="position:absolute;left:106.8px;top:297.5px;width:300.3px;height:2.4px;background:linear-gradient(90deg,#001399 0px,#050799 69px,#3f0099 159px,#990095 294px,#990091 300px)"></div><div style="position:absolute;left:108.1px;top:299.5px;width:297.1px;height:2.4px;background:linear-gradient(90deg,#001399 0px,#030799 66px,#3f0099 159px,#990096 294px,#990093 297px)"></div><div style="position:absolute;left:109.4px;top:301.5px;width:293.8px;height:2.4px;background:linear-gradient(90deg,#001299 0px,#040799 66px,#430099 165px,#990096 294px)"></div><div style="position:absolute;left:110.7px;top:303.5px;width:290.6px;height:2.4px;background:linear-gradient(90deg,#001199 0px,#040699 66px,#490099 174px,#990099 291px)"></div><div style="position:absolute;left:112.1px;top:305.5px;width:287.3px;height:2.4px;background:linear-gradient(90deg,#001099 0px,#030699 63px,#470099 171px,#960099 287px)"></div><div style="position:absolute;left:113.4px;top:307.5px;width:284.0px;height:2.4px;background:linear-gradient(90deg,#001099 0px,#040599 63px,#570099 195px,#930099 284px)"></div><div style="position:absolute;left:114.8px;top:309.5px;width:280.7px;height:2.4px;background:linear-gradient(90deg,#000f99 0px,#040599 63px,#810099 258px,#910099 281px)"></div><div style="position:absolute;left:116.1px;top:311.5px;width:277.4px;height:2.4px;background:linear-gradient(90deg,#000e99 0px,#030599 60px,#8e0099 277px)"></div><div style="position:absolute;left:117.5px;top:313.5px;width:274.1px;height:2.4px;background:linear-gradient(90deg,#000e99 0px,#040499 60px,#8b0099 274px)"></div><div style="position:absolute;left:118.9px;top:315.5px;width:270.8px;height:2.4px;background:linear-gradient(90deg,#000d99 0px,#040399 60px,#890099 271px)"></div><div style="position:absolute;left:120.3px;top:317.5px;width:267.5px;height:2.4px;background:linear-gradient(90deg,#000d99 0px,#030399 57px,#860099 267px)"></div><div style="position:absolute;left:121.6px;top:319.5px;width:264.1px;height:2.4px;background:linear-gradient(90deg,#000c99 0px,#040399 57px,#840099 264px)"></div><div style="position:absolute;left:123.0px;top:321.5px;width:260.8px;height:2.4px;background:linear-gradient(90deg,#000b99 0px,#040299 57px,#810099 261px)"></div><div style="position:absolute;left:124.5px;top:323.5px;width:257.4px;height:2.4px;background:linear-gradient(90deg,#000b99 0px,#030299 54px,#7f0099 257px)"></div><div style="position:absolute;left:125.9px;top:325.5px;width:254.1px;height:2.4px;background:linear-gradient(90deg,#000a99 0px,#040299 54px,#7d0099 254px)"></div><div style="position:absolute;left:127.3px;top:327.5px;width:250.7px;height:2.4px;background:linear-gradient(90deg,#000a99 0px,#040199 54px,#7a0099 251px)"></div><div style="position:absolute;left:128.8px;top:329.5px;width:247.3px;height:2.4px;background:linear-gradient(90deg,#000999 0px,#030199 51px,#780099 247px)"></div><div style="position:absolute;left:130.2px;top:331.5px;width:243.9px;height:2.4px;background:linear-gradient(90deg,#000899 0px,#040099 51px,#760099 244px)"></div><div style="position:absolute;left:131.7px;top:333.5px;width:240.5px;height:2.4px;background:linear-gradient(90deg,#000899 0px,#050099 51px,#730099 241px)"></div><div style="position:absolute;left:133.2px;top:335.5px;width:237.1px;height:2.4px;background:linear-gradient(90deg,#000799 0px,#050099 51px,#710099 237px)"></div><div style="position:absolute;left:134.6px;top:337.5px;width:233.7px;height:2.4px;background:linear-gradient(90deg,#000799 0px,#040099 48px,#6f0099 234px)"></div><div style="position:absolute;left:136.1px;top:339.5px;width:230.2px;height:2.4px;background:linear-gradient(90deg,#000699 0px,#050099 48px,#6d0099 230px)"></div><div style="position:absolute;left:137.6px;top:341.5px;width:226.8px;height:2.4px;background:linear-gradient(90deg,#000599 0px,#040099 45px,#6b0099 227px)"></div><div style="position:absolute;left:139.1px;top:343.5px;width:223.3px;height:2.4px;background:linear-gradient(90deg,#000599 0px,#040099 45px,#690099 223px)"></div><div style="position:absolute;left:140.6px;top:345.5px;width:219.9px;height:2.4px;background:linear-gradient(90deg,#000499 0px,#050099 45px,#670099 220px)"></div><div style="position:absolute;left:142.2px;top:347.5px;width:216.4px;height:2.4px;background:linear-gradient(90deg,#000499 0px,#040099 42px,#650099 216px)"></div><div style="position:absolute;left:143.7px;top:349.5px;width:212.9px;height:2.4px;background:linear-gradient(90deg,#000399 0px,#050099 42px,#630099 213px)"></div><div style="position:absolute;left:145.3px;top:351.5px;width:209.4px;height:2.4px;background:linear-gradient(90deg,#000399 0px,#050099 42px,#610099 209px)"></div><div style="position:absolute;left:146.9px;top:353.5px;width:205.9px;height:2.4px;background:linear-gradient(90deg,#000299 0px,#040099 39px,#5f0099 206px)"></div><div style="position:absolute;left:148.5px;top:355.5px;width:202.3px;height:2.4px;background:linear-gradient(90deg,#000299 0px,#050099 39px,#5d0099 202px)"></div><div style="position:absolute;left:150.1px;top:357.5px;width:198.8px;height:2.4px;background:linear-gradient(90deg,#000199 0px,#060099 39px,#5b0099 199px)"></div><div style="position:absolute;left:151.7px;top:359.5px;width:195.2px;height:2.4px;background:linear-gradient(90deg,#000199 0px,#050099 36px,#590099 195px)"></div><div style="position:absolute;left:153.4px;top:361.5px;width:191.6px;height:2.4px;background:linear-gradient(90deg,#000099 0px,#050099 36px,#570099 192px)"></div><div style="position:absolute;left:155.1px;top:363.5px;width:188.0px;height:2.4px;background:linear-gradient(90deg,#000099 0px,#060099 36px,#560099 188px)"></div><div style="position:absolute;left:156.7px;top:365.5px;width:184.4px;height:2.4px;background:linear-gradient(90deg,#000099 0px,#070099 36px,#540099 184px)"></div><div style="position:absolute;left:158.5px;top:367.5px;width:180.7px;height:2.4px;background:linear-gradient(90deg,#000099 0px,#060099 33px,#520099 181px)"></div><div style="position:absolute;left:160.2px;top:369.5px;width:177.1px;height:2.4px;background:linear-gradient(90deg,#000099 0px,#060099 33px,#500099 177px)"></div><div style="position:absolute;left:161.9px;top:371.5px;width:173.4px;height:2.4px;background:linear-gradient(90deg,#000099 0px,#070099 33px,#4f0099 173px)"></div><div style="position:absolute;left:163.7px;top:373.5px;width:169.7px;height:2.4px;background:linear-gradient(90deg,#000099 0px,#080099 33px,#4d0099 170px)"></div><div style="position:absolute;left:165.4px;top:375.5px;width:166.0px;height:2.4px;background:linear-gradient(90deg,#000099 0px,#080099 33px,#4b0099 166px)"></div><div style="position:absolute;left:167.2px;top:377.5px;width:162.2px;height:2.4px;background:linear-gradient(90deg,#000099 0px,#0a0099 36px,#4a0099 162px)"></div><div style="position:absolute;left:169.0px;top:379.5px;width:158.5px;height:2.4px;background:linear-gradient(90deg,#000099 0px,#0d0099 39px,#480099 158px)"></div><div style="position:absolute;left:170.9px;top:381.5px;width:154.7px;height:2.4px;background:linear-gradient(90deg,#000099 0px,#100099 45px,#470099 155px)"></div><div style="position:absolute;left:172.8px;top:383.5px;width:150.8px;height:2.4px;background:linear-gradient(90deg,#000099 0px,#240099 84px,#450099 151px)"></div><div style="position:absolute;left:174.8px;top:385.5px;width:146.9px;height:2.4px;background:linear-gradient(90deg,#000099 0px,#430099 147px)"></div><div style="position:absolute;left:176.8px;top:387.5px;width:143.0px;height:2.4px;background:linear-gradient(90deg,#000099 0px,#420099 143px)"></div><div style="position:absolute;left:178.8px;top:389.5px;width:139.0px;height:2.4px;background:linear-gradient(90deg,#000099 0px,#400099 139px)"></div><div style="position:absolute;left:180.8px;top:391.5px;width:135.0px;height:2.4px;background:linear-gradient(90deg,#000099 0px,#3f0099 135px)"></div><div style="position:absolute;left:182.9px;top:393.5px;width:131.0px;height:2.4px;background:linear-gradient(90deg,#000099 0px,#3d0099 131px)"></div><div style="position:absolute;left:185.0px;top:395.5px;width:127.0px;height:2.4px;background:linear-gradient(90deg,#000099 0px,#3c0099 127px)"></div><div style="position:absolute;left:187.1px;top:397.5px;width:122.9px;height:2.4px;background:linear-gradient(90deg,#010099 0px,#3b0099 123px)"></div><div style="position:absolute;left:189.3px;top:399.5px;width:118.8px;height:2.4px;background:linear-gradient(90deg,#020099 0px,#390099 119px)"></div><div style="position:absolute;left:191.4px;top:401.5px;width:114.7px;height:2.4px;background:linear-gradient(90deg,#030099 0px,#380099 115px)"></div><div style="position:absolute;left:193.7px;top:403.5px;width:110.5px;height:2.4px;background:linear-gradient(90deg,#040099 0px,#360099 111px)"></div><div style="position:absolute;left:195.9px;top:405.5px;width:106.3px;height:2.4px;background:linear-gradient(90deg,#040099 0px,#350099 106px)"></div><div style="position:absolute;left:198.2px;top:407.5px;width:102.1px;height:2.4px;background:linear-gradient(90deg,#050099 0px,#340099 102px)"></div><div style="position:absolute;left:200.5px;top:409.5px;width:97.9px;height:2.4px;background:linear-gradient(90deg,#060099 0px,#320099 98px)"></div><div style="position:absolute;left:202.8px;top:411.5px;width:93.6px;height:2.4px;background:linear-gradient(90deg,#070099 0px,#310099 94px)"></div><div style="position:absolute;left:205.2px;top:413.5px;width:89.3px;height:2.4px;background:linear-gradient(90deg,#080099 0px,#300099 89px)"></div><div style="position:absolute;left:207.6px;top:415.5px;width:85.0px;height:2.4px;background:linear-gradient(90deg,#090099 0px,#2e0099 85px)"></div><div style="position:absolute;left:210.0px;top:417.5px;width:80.6px;height:2.4px;background:linear-gradient(90deg,#0a0099 0px,#2d0099 81px)"></div><div style="position:absolute;left:212.4px;top:419.5px;width:76.2px;height:2.4px;background:linear-gradient(90deg,#0a0099 0px,#2c0099 76px)"></div><div style="position:absolute;left:214.9px;top:421.5px;width:71.9px;height:2.4px;background:linear-gradient(90deg,#0b0099 0px,#2b0099 72px)"></div><div style="position:absolute;left:217.3px;top:423.5px;width:67.5px;height:2.4px;background:linear-gradient(90deg,#0c0099 0px,#290099 67px)"></div><div style="position:absolute;left:219.7px;top:425.5px;width:63.1px;height:2.4px;background:linear-gradient(90deg,#0d0099 0px,#280099 63px)"></div><div style="position:absolute;left:222.2px;top:427.5px;width:58.7px;height:2.4px;background:linear-gradient(90deg,#0e0099 0px,#270099 59px)"></div><div style="position:absolute;left:224.6px;top:429.5px;width:54.3px;height:2.4px;background:linear-gradient(90deg,#0f0099 0px,#260099 54px)"></div><div style="position:absolute;left:227.0px;top:431.5px;width:50.0px;height:2.4px;background:linear-gradient(90deg,#0f0099 0px,#250099 50px)"></div><div style="position:absolute;left:229.5px;top:433.5px;width:45.6px;height:2.4px;background:linear-gradient(90deg,#100099 0px,#240099 46px)"></div><div style="position:absolute;left:231.8px;top:435.5px;width:41.3px;height:2.4px;background:linear-gradient(90deg,#110099 0px,#220099 41px)"></div><div style="position:absolute;left:234.2px;top:437.5px;width:37.0px;height:2.4px;background:linear-gradient(90deg,#120099 0px,#210099 37px)"></div><div style="position:absolute;left:236.5px;top:439.5px;width:32.7px;height:2.4px;background:linear-gradient(90deg,#120099 0px,#200099 33px)"></div><div style="position:absolute;left:238.9px;top:441.5px;width:28.4px;height:2.4px;background:linear-gradient(90deg,#130099 0px,#1f0099 28px)"></div><div style="position:absolute;left:241.4px;top:443.5px;width:24.0px;height:2.4px;background:linear-gradient(90deg,#140099 0px,#1e0099 24px)"></div><div style="position:absolute;left:243.9px;top:445.5px;width:19.6px;height:2.4px;background:linear-gradient(90deg,#150099 0px,#1d0099 20px)"></div><div style="position:absolute;left:246.5px;top:447.5px;width:15.0px;height:2.4px;background:linear-gradient(90deg,#160099 0px,#1c0099 15px)"></div><div style="position:absolute;left:249.6px;top:449.5px;width:9.8px;height:2.4px;background:linear-gradient(90deg,#170099 0px,#1b0099 10px)"></div>
</div>
<div style="position:absolute;left:953.8px;top:57.8px;width:599.5px;height:461.2px;overflow:hidden;clip-path:polygon(450.4px 59.6px,124.9px 29.1px,175.3px 340.6px)">
<div style="position:absolute;left:122.0px;top:27.5px;width:10.4px;height:2.4px;background:linear-gradient(90deg,#00ff00 0px,#08ff00 6px,#13ff00 10px)"></div><div style="position:absolute;left:122.0px;top:29.5px;width:31.7px;height:2.4px;background:linear-gradient(90deg,#00ff04 0px,#07ff03 6px,#4eff00 32px)"></div><div style="position:absolute;left:122.3px;top:31.5px;width:52.7px;height:2.4px;background:linear-gradient(90deg,#00ff09 0px,#07ff07 6px,#6eff00 42px,#91ff00 53px)"></div><div style="position:absolute;left:122.6px;top:33.5px;width:73.8px;height:2.4px;background:linear-gradient(90deg,#00ff0d 0px,#07ff0c 6px,#6fff05 42px,#d9ff00 72px,#e0ff00 74px)"></div><div style="position:absolute;left:123.0px;top:35.5px;width:94.8px;height:2.4px;background:linear-gradient(90deg,#00ff12 0px,#07ff11 6px,#6fff0a 42px,#dbff03 72px,#fbff00 80px,#ffd600 92px,#ffcd00 95px)"></div><div style="position:absolute;left:123.3px;top:37.5px;width:115.8px;height:2.4px;background:linear-gradient(90deg,#00ff17 0px,#07ff16 6px,#70ff0f 42px,#ddff08 72px,#feff06 80px,#ffc201 98px,#ff9800 116px)"></div><div style="position:absolute;left:123.6px;top:39.5px;width:136.8px;height:2.4px;background:linear-gradient(90deg,#00ff1b 0px,#07ff1b 6px,#71ff15 42px,#deff0e 72px,#fffe0d 80px,#ffc607 96px,#ff9201 118px,#ff7300 137px)"></div><div style="position:absolute;left:123.9px;top:41.5px;width:157.9px;height:2.4px;background:linear-gradient(90deg,#00ff20 0px,#07ff20 6px,#6bff1a 40px,#d8ff15 70px,#fffc13 80px,#ffc40c 96px,#ff9005 118px,#ff6100 150px,#ff5800 158px)"></div><div style="position:absolute;left:124.2px;top:43.5px;width:178.9px;height:2.4px;background:linear-gradient(90deg,#00ff25 0px,#07ff25 6px,#6cff20 40px,#daff1b 70px,#fcff1a 78px,#ffce12 92px,#ff9b0b 112px,#ff6904 142px,#ff4400 179px)"></div><div style="position:absolute;left:124.6px;top:45.5px;width:199.9px;height:2.4px;background:linear-gradient(90deg,#00ff2a 0px,#08ff2a 6px,#6dff26 40px,#dcff21 70px,#feff20 78px,#ffc016 96px,#ff8d0d 118px,#ff5f05 150px,#ff3500 198px,#ff3400 200px)"></div><div style="position:absolute;left:124.9px;top:47.5px;width:220.9px;height:2.4px;background:linear-gradient(90deg,#00ff2f 0px,#08ff2f 6px,#6eff2b 40px,#deff28 70px,#fffe26 78px,#ffc41c 94px,#ff9012 116px,#ff6009 148px,#ff3702 194px,#ff2700 221px)"></div><div style="position:absolute;left:125.2px;top:49.5px;width:242.0px;height:2.4px;background:linear-gradient(90deg,#00ff35 0px,#08ff34 6px,#6fff31 40px,#d7ff2e 68px,#fffc2d 78px,#ffc221 94px,#ff8e16 116px,#ff5f0c 148px,#ff3504 196px,#ff1c00 242px)"></div><div style="position:absolute;left:125.5px;top:51.5px;width:263.0px;height:2.4px;background:linear-gradient(90deg,#00ff3a 0px,#08ff39 6px,#70ff37 40px,#d9ff35 68px,#fcff34 76px,#ffc727 92px,#ff911b 114px,#ff6211 144px,#ff3807 190px,#ff1400 263px)"></div><div style="position:absolute;left:125.9px;top:53.5px;width:284.0px;height:2.4px;background:linear-gradient(90deg,#00ff3f 0px,#08ff3f 6px,#70ff3d 40px,#dbff3c 68px,#feff3b 76px,#ffc52d 92px,#ff8f1f 114px,#ff6114 144px,#ff370a 190px,#ff1301 262px,#ff0c00 284px)"></div><div style="position:absolute;left:126.2px;top:55.5px;width:305.0px;height:2.4px;background:linear-gradient(90deg,#00ff45 0px,#08ff44 6px,#71ff43 40px,#ddff42 68px,#fffe42 76px,#ffc332 92px,#ff8e24 114px,#ff6017 144px,#ff360c 190px,#ff1303 262px,#ff0500 305px)"></div><div style="position:absolute;left:126.5px;top:57.5px;width:326.1px;height:2.4px;background:linear-gradient(90deg,#00ff4a 0px,#08ff4a 6px,#72ff4a 40px,#dfff49 68px,#fffc48 76px,#ffc137 92px,#ff8c28 114px,#ff5f1b 144px,#ff350f 190px,#ff1104 264px,#ff0000 326px)"></div><div style="position:absolute;left:126.8px;top:59.5px;width:325.9px;height:2.4px;background:linear-gradient(90deg,#00ff50 0px,#08ff50 6px,#6cff50 38px,#d8ff50 66px,#fcff50 74px,#ffb93b 94px,#ff872b 116px,#ff591c 148px,#ff3010 196px,#ff0d05 274px,#ff0001 326px)"></div><div style="position:absolute;left:127.2px;top:61.5px;width:324.3px;height:2.4px;background:linear-gradient(90deg,#00ff55 0px,#08ff55 6px,#6dff56 38px,#daff57 66px,#feff58 74px,#ffc344 90px,#ff9133 110px,#ff6123 140px,#ff3815 184px,#ff1309 254px,#ff0002 324px)"></div><div style="position:absolute;left:127.5px;top:63.5px;width:322.0px;height:2.4px;background:linear-gradient(90deg,#00ff5b 0px,#02ff5b 4px,#67ff5d 36px,#d4ff5e 64px,#fffe5f 74px,#ffc84b 88px,#ff9339 108px,#ff6528 136px,#ff3b19 178px,#ff170c 244px,#ff0004 322px)"></div><div style="position:absolute;left:127.8px;top:65.5px;width:319.8px;height:2.4px;background:linear-gradient(90deg,#00ff61 0px,#02ff61 4px,#68ff63 36px,#d5ff66 64px,#f9ff66 72px,#fff262 76px,#ffb94c 92px,#ff8639 114px,#ff5827 146px,#ff2f18 194px,#ff0c0a 272px,#ff0005 320px)"></div><div style="position:absolute;left:128.1px;top:67.5px;width:317.5px;height:2.4px;background:linear-gradient(90deg,#00ff66 0px,#02ff67 4px,#69ff6a 36px,#d7ff6d 64px,#fcff6e 72px,#ffbd54 90px,#ff883e 112px,#ff5b2c 142px,#ff321c 188px,#ff0f0d 262px,#ff0007 317px)"></div><div style="position:absolute;left:128.4px;top:69.5px;width:315.2px;height:2.4px;background:linear-gradient(90deg,#00ff6c 0px,#02ff6d 4px,#69ff71 36px,#d9ff75 64px,#feff76 72px,#ffc25c 88px,#ff8f46 108px,#ff6133 136px,#ff3821 178px,#ff1412 246px,#ff0009 315px)"></div><div style="position:absolute;left:128.8px;top:71.5px;width:312.9px;height:2.4px;background:linear-gradient(90deg,#00ff72 0px,#02ff73 4px,#6aff77 36px,#d2ff7c 62px,#fffd7d 72px,#ffc664 86px,#ff914c 106px,#ff6237 134px,#ff3924 176px,#ff1514 242px,#ff000b 313px)"></div><div style="position:absolute;left:129.1px;top:73.5px;width:310.6px;height:2.4px;background:linear-gradient(90deg,#00ff79 0px,#02ff79 4px,#6bff7e 36px,#d4ff84 62px,#f9ff85 70px,#fff27f 74px,#ffb864 90px,#ff844b 112px,#ff5535 144px,#ff2d22 192px,#ff0a12 270px,#ff000c 311px)"></div><div style="position:absolute;left:129.4px;top:75.5px;width:308.4px;height:2.4px;background:linear-gradient(90deg,#00ff7f 0px,#02ff7f 4px,#6cff85 36px,#d6ff8c 62px,#fcff8e 70px,#ffbc6c 88px,#ff8a53 108px,#ff5b3c 138px,#ff3228 182px,#ff1016 252px,#ff000e 308px)"></div><div style="position:absolute;left:129.7px;top:77.5px;width:306.1px;height:2.4px;background:linear-gradient(90deg,#00ff85 0px,#02ff86 4px,#66ff8c 34px,#cfff93 60px,#feff96 70px,#ffc779 84px,#ff915c 104px,#ff6143 132px,#ff372d 174px,#ff131b 240px,#ff0010 306px)"></div><div style="position:absolute;left:130.1px;top:79.5px;width:303.8px;height:2.4px;background:linear-gradient(90deg,#00ff8c 0px,#02ff8c 4px,#66ff94 34px,#d1ff9b 60px,#fffd9d 70px,#ffc57e 84px,#ff8f61 104px,#ff6047 132px,#ff3630 174px,#ff131c 240px,#ff0012 304px)"></div><div style="position:absolute;left:130.4px;top:81.5px;width:301.5px;height:2.4px;background:linear-gradient(90deg,#00ff92 0px,#03ff93 4px,#67ff9b 34px,#d3ffa3 60px,#faffa6 68px,#fff19f 72px,#ffbc80 86px,#ff8963 106px,#ff5c49 134px,#ff3432 176px,#ff101e 244px,#ff0014 302px)"></div><div style="position:absolute;left:130.7px;top:83.5px;width:299.2px;height:2.4px;background:linear-gradient(90deg,#00ff99 0px,#03ff9a 4px,#68ffa2 34px,#d5ffac 60px,#fcffaf 68px,#ffba86 86px,#ff8768 106px,#ff5b4d 134px,#ff3134 178px,#ff0e1f 248px,#ff0015 299px)"></div><div style="position:absolute;left:131.0px;top:85.5px;width:297.0px;height:2.4px;background:linear-gradient(90deg,#00ff9f 0px,#03ffa0 4px,#69ffaa 34px,#d8ffb5 60px,#ffffb8 68px,#ffc594 82px,#ff9374 100px,#ff6457 126px,#ff393c 166px,#ff1525 228px,#ff0017 297px)"></div><div style="position:absolute;left:131.4px;top:87.5px;width:294.7px;height:2.4px;background:linear-gradient(90deg,#00ffa6 0px,#03ffa7 4px,#6affb2 34px,#daffbd 60px,#fffdc0 68px,#ffc39a 82px,#ff9179 100px,#ff635b 126px,#ff383f 166px,#ff1527 228px,#ff0019 295px)"></div><div style="position:absolute;left:131.7px;top:89.5px;width:292.4px;height:2.4px;background:linear-gradient(90deg,#00ffad 0px,#03ffae 4px,#6bffba 34px,#d2ffc5 58px,#faffca 66px,#fff1c0 70px,#ffba9b 84px,#ff8778 104px,#ff5959 132px,#ff313e 174px,#ff0e26 242px,#ff001b 292px)"></div><div style="position:absolute;left:132.0px;top:91.5px;width:290.1px;height:2.4px;background:linear-gradient(90deg,#00ffb4 0px,#03ffb6 4px,#6cffc2 34px,#d4ffce 58px,#fcffd3 66px,#ffbfa6 82px,#ff8d83 100px,#ff6062 126px,#ff3645 166px,#ff122b 230px,#ff001d 290px)"></div><div style="position:absolute;left:132.3px;top:93.5px;width:287.8px;height:2.4px;background:linear-gradient(90deg,#00ffbb 0px,#03ffbd 4px,#65ffc9 32px,#cdffd6 56px,#ffffdd 66px,#ffc3b1 80px,#ff908b 98px,#ff6168 124px,#ff384a 162px,#ff1530 222px,#ff001f 288px)"></div><div style="position:absolute;left:132.7px;top:95.5px;width:285.5px;height:2.4px;background:linear-gradient(90deg,#00ffc3 0px,#03ffc4 4px,#66ffd2 32px,#cfffe0 56px,#fffde4 66px,#ffc1b7 80px,#ff8e90 98px,#ff606c 124px,#ff374d 162px,#ff1331 224px,#ff0022 286px)"></div><div style="position:absolute;left:133.0px;top:97.5px;width:283.3px;height:2.4px;background:linear-gradient(90deg,#00ffca 0px,#03ffcc 4px,#67ffda 32px,#d1ffe9 56px,#faffef 64px,#fff0e4 68px,#ffb8b7 82px,#ff848e 102px,#ff576a 130px,#ff2f4a 172px,#ff0c2e 240px,#ff0024 283px)"></div><div style="position:absolute;left:133.3px;top:99.5px;width:281.0px;height:2.4px;background:linear-gradient(90deg,#00ffd1 0px,#03ffd3 4px,#68ffe3 32px,#d3fff3 56px,#fcfff9 64px,#ffbdc3 80px,#ff8b9a 98px,#ff5d74 124px,#ff3451 164px,#ff1034 228px,#ff0026 281px)"></div><div style="position:absolute;left:133.6px;top:101.5px;width:278.7px;height:2.4px;background:linear-gradient(90deg,#00ffd9 0px,#03ffdb 4px,#69ffeb 32px,#d5fffd 56px,#fbfbff 64px,#ffe1ea 70px,#ffaebe 84px,#ff7d94 104px,#ff4f6d 134px,#ff274b 180px,#ff062e 254px,#ff0028 279px)"></div><div style="position:absolute;left:133.9px;top:103.5px;width:276.4px;height:2.4px;background:linear-gradient(90deg,#00ffe1 0px,#03ffe3 4px,#6afff4 32px,#b8fcff 50px,#fcefff 66px,#ffb2c9 82px,#ff7f9c 102px,#ff5375 130px,#ff2a51 174px,#ff0933 244px,#ff002a 276px)"></div><div style="position:absolute;left:134.3px;top:105.5px;width:274.1px;height:2.4px;background:linear-gradient(90deg,#00ffe9 0px,#03ffeb 4px,#6bfffe 32px,#fde4ff 68px,#ffaac9 84px,#ff799d 104px,#ff4d74 134px,#ff2650 180px,#ff0431 256px,#ff002c 274px)"></div><div style="position:absolute;left:134.6px;top:107.5px;width:271.9px;height:2.4px;background:linear-gradient(90deg,#00fff1 0px,#03fff3 4px,#52fcff 26px,#ffdaff 70px,#ffa2ca 86px,#ff709b 108px,#ff4571 140px,#ff1f4d 190px,#ff0030 268px,#ff002f 272px)"></div><div style="position:absolute;left:134.9px;top:109.5px;width:269.6px;height:2.4px;background:linear-gradient(90deg,#00fff9 0px,#03fffb 4px,#6dedff 34px,#ffcffe 72px,#ff9aca 88px,#ff6b9c 110px,#ff4273 142px,#ff1d4e 192px,#ff0032 268px,#ff0031 270px)"></div><div style="position:absolute;left:135.2px;top:111.5px;width:267.3px;height:2.4px;background:linear-gradient(90deg,#00fdff 0px,#03faff 4px,#bcd5ff 56px,#ffc5fd 74px,#ff93ca 90px,#ff6399 114px,#ff3b70 148px,#ff174c 202px,#ff0034 267px)"></div><div style="position:absolute;left:135.6px;top:113.5px;width:265.0px;height:2.4px;background:linear-gradient(90deg,#00f5ff 0px,#03f2ff 4px,#beccff 58px,#fbbfff 74px,#ffaded 80px,#ff7fbc 98px,#ff548f 124px,#ff2c66 164px,#ff0b42 228px,#ff0036 265px)"></div><div style="position:absolute;left:135.9px;top:115.5px;width:262.7px;height:2.4px;background:linear-gradient(90deg,#00edff 0px,#03ebff 4px,#c1c3ff 60px,#fcb7ff 76px,#ff7dc1 98px,#ff5293 124px,#ff2b69 164px,#ff0b45 226px,#ff0038 263px)"></div><div style="position:absolute;left:136.2px;top:117.5px;width:260.5px;height:2.4px;background:linear-gradient(90deg,#00e6ff 0px,#03e3ff 4px,#bcbcff 60px,#fdaeff 78px,#ff7bc6 98px,#ff5197 124px,#ff2c6d 162px,#ff0c49 222px,#ff003b 260px)"></div><div style="position:absolute;left:136.5px;top:119.5px;width:258.2px;height:2.4px;background:linear-gradient(90deg,#00dfff 0px,#03dcff 4px,#bfb4ff 62px,#fea7ff 80px,#ff79cb 98px,#ff4f9a 124px,#ff2b70 162px,#ff0b4b 222px,#ff003d 258px)"></div><div style="position:absolute;left:136.9px;top:121.5px;width:255.9px;height:2.4px;background:linear-gradient(90deg,#00d8ff 0px,#02d6ff 4px,#bbaeff 62px,#ff9ffe 82px,#ff74cb 100px,#ff4b9b 126px,#ff2871 164px,#ff094d 224px,#ff0040 256px)"></div><div style="position:absolute;left:137.2px;top:123.5px;width:253.6px;height:2.4px;background:linear-gradient(90deg,#00d2ff 0px,#02cfff 4px,#bda7ff 64px,#ff97fd 84px,#ff6ecb 102px,#ff489c 128px,#ff2673 166px,#ff084e 226px,#ff0043 254px)"></div><div style="position:absolute;left:137.5px;top:125.5px;width:251.3px;height:2.4px;background:linear-gradient(90deg,#00ccff 0px,#02c9ff 4px,#bf9fff 66px,#ff8ffc 86px,#ff65c7 106px,#ff4098 134px,#ff1e6d 176px,#ff0249 242px,#ff0045 251px)"></div><div style="position:absolute;left:137.8px;top:127.5px;width:249.1px;height:2.4px;background:linear-gradient(90deg,#00c6ff 0px,#08c2ff 6px,#c299ff 68px,#fc8cff 86px,#ff5dc3 110px,#ff3993 140px,#ff196a 184px,#ff0048 249px)"></div><div style="position:absolute;left:138.1px;top:129.5px;width:246.8px;height:2.4px;background:linear-gradient(90deg,#00c0ff 0px,#08bcff 6px,#c492ff 70px,#fd85ff 88px,#ff58c3 112px,#ff3594 142px,#ff176b 186px,#ff004b 247px)"></div><div style="position:absolute;left:138.5px;top:131.5px;width:244.5px;height:2.4px;background:linear-gradient(90deg,#00baff 0px,#08b7ff 6px,#c68cff 72px,#fe7fff 90px,#ff57c8 112px,#ff3498 142px,#ff166e 186px,#ff004e 244px)"></div><div style="position:absolute;left:138.8px;top:133.5px;width:242.2px;height:2.4px;background:linear-gradient(90deg,#00b5ff 0px,#07b2ff 6px,#c287ff 72px,#ff79ff 92px,#ff55cc 112px,#ff339b 142px,#ff1570 186px,#ff0051 242px)"></div><div style="position:absolute;left:139.1px;top:135.5px;width:239.9px;height:2.4px;background:linear-gradient(90deg,#00b0ff 0px,#07adff 6px,#c481ff 74px,#ff73fe 94px,#ff4ec8 116px,#ff2e99 146px,#ff116f 192px,#ff0054 240px)"></div><div style="position:absolute;left:139.4px;top:137.5px;width:237.6px;height:2.4px;background:linear-gradient(90deg,#00abff 0px,#07a8ff 6px,#c07dff 74px,#ff6dfd 96px,#ff4ac8 118px,#ff2a98 150px,#ff0e6e 196px,#ff0057 238px)"></div><div style="position:absolute;left:139.8px;top:139.5px;width:235.4px;height:2.4px;background:linear-gradient(90deg,#00a7ff 0px,#07a3ff 6px,#c278ff 76px,#ff68fc 98px,#ff46c8 120px,#ff2799 152px,#ff0c6e 200px,#ff005a 235px)"></div><div style="position:absolute;left:140.1px;top:141.5px;width:233.1px;height:2.4px;background:linear-gradient(90deg,#00a2ff 0px,#079fff 6px,#c472ff 78px,#fd65ff 98px,#ff40c5 124px,#ff2295 158px,#ff086b 208px,#ff005d 233px)"></div><div style="position:absolute;left:140.4px;top:143.5px;width:230.8px;height:2.4px;background:linear-gradient(90deg,#009eff 0px,#079aff 6px,#c06fff 78px,#fe60ff 100px,#ff3cc5 126px,#ff1f96 160px,#ff066c 210px,#ff0060 231px)"></div><div style="position:absolute;left:140.7px;top:145.5px;width:228.5px;height:2.4px;background:linear-gradient(90deg,#0099ff 0px,#0796ff 6px,#c26aff 80px,#ff5bff 102px,#ff3bc9 126px,#ff1e99 160px,#ff056e 210px,#ff0063 229px)"></div><div style="position:absolute;left:141.1px;top:147.5px;width:226.2px;height:2.4px;background:linear-gradient(90deg,#0095ff 0px,#0792ff 6px,#c465ff 82px,#ff56fe 104px,#ff38c9 128px,#ff1c99 162px,#ff046f 212px,#ff0067 226px)"></div><div style="position:absolute;left:141.4px;top:149.5px;width:224.0px;height:2.4px;background:linear-gradient(90deg,#0091ff 0px,#068eff 6px,#c161ff 82px,#ff52fd 106px,#ff34c9 130px,#ff1a9a 164px,#ff0270 214px,#ff006a 224px)"></div><div style="position:absolute;left:141.7px;top:151.5px;width:221.7px;height:2.4px;background:linear-gradient(90deg,#008dff 0px,#068aff 6px,#c35dff 84px,#ff4dfd 108px,#ff31c9 132px,#ff1699 168px,#ff006f 220px,#ff006e 222px)"></div><div style="position:absolute;left:142.0px;top:153.5px;width:219.4px;height:2.4px;background:linear-gradient(90deg,#008aff 0px,#0687ff 6px,#c459ff 86px,#ff49fc 110px,#ff2cc6 136px,#ff1397 172px,#ff0071 219px)"></div><div style="position:absolute;left:142.4px;top:155.5px;width:217.1px;height:2.4px;background:linear-gradient(90deg,#0086ff 0px,#0683ff 6px,#c156ff 86px,#fe47ff 110px,#ff29c6 138px,#ff1198 174px,#ff0075 217px)"></div><div style="position:absolute;left:142.7px;top:157.5px;width:214.8px;height:2.4px;background:linear-gradient(90deg,#0083ff 0px,#0680ff 6px,#c351ff 88px,#ff43ff 112px,#ff28ca 138px,#ff109b 174px,#ff0079 215px)"></div><div style="position:absolute;left:143.0px;top:159.5px;width:212.6px;height:2.4px;background:linear-gradient(90deg,#007fff 0px,#067cff 6px,#c44dff 90px,#ff3fff 114px,#ff25ca 140px,#ff0d99 178px,#ff007c 213px)"></div><div style="position:absolute;left:143.3px;top:161.5px;width:210.3px;height:2.4px;background:linear-gradient(90deg,#007cff 0px,#0679ff 6px,#c14bff 90px,#ff3bfe 116px,#ff22ca 142px,#ff0b9a 180px,#ff0080 210px)"></div><div style="position:absolute;left:143.6px;top:163.5px;width:208.0px;height:2.4px;background:linear-gradient(90deg,#0079ff 0px,#0676ff 6px,#c347ff 92px,#ff37fd 118px,#ff1ec7 146px,#ff0797 186px,#ff0084 208px)"></div><div style="position:absolute;left:144.0px;top:165.5px;width:205.7px;height:2.4px;background:linear-gradient(90deg,#0076ff 0px,#0673ff 6px,#c044ff 92px,#ff34fc 120px,#ff1bc7 148px,#ff0697 188px,#ff0088 206px)"></div><div style="position:absolute;left:144.3px;top:167.5px;width:203.4px;height:2.4px;background:linear-gradient(90deg,#0073ff 0px,#0670ff 6px,#c141ff 94px,#fe32ff 120px,#ff18c4 152px,#ff0294 194px,#ff008c 203px)"></div><div style="position:absolute;left:144.6px;top:169.5px;width:201.2px;height:2.4px;background:linear-gradient(90deg,#0070ff 0px,#066dff 6px,#c33dff 96px,#fe2eff 122px,#ff16c8 152px,#ff0299 192px,#ff0091 201px)"></div><div style="position:absolute;left:144.9px;top:171.5px;width:198.9px;height:2.4px;background:linear-gradient(90deg,#006dff 0px,#056aff 6px,#c03bff 96px,#ff2bff 124px,#ff15cb 152px,#ff019b 192px,#ff0095 199px)"></div><div style="position:absolute;left:145.3px;top:173.5px;width:196.6px;height:2.4px;background:linear-gradient(90deg,#006aff 0px,#0567ff 6px,#c238ff 98px,#ff28fe 126px,#ff12c8 156px,#ff0099 197px)"></div><div style="position:absolute;left:145.6px;top:175.5px;width:194.3px;height:2.4px;background:linear-gradient(90deg,#0068ff 0px,#0565ff 6px,#c335ff 100px,#ff25fd 128px,#ff0fc8 158px,#ff009e 194px)"></div><div style="position:absolute;left:145.9px;top:177.5px;width:192.0px;height:2.4px;background:linear-gradient(90deg,#0065ff 0px,#0961ff 8px,#c531ff 102px,#ff22fd 130px,#ff0dc8 160px,#ff00a2 192px)"></div><div style="position:absolute;left:146.2px;top:179.5px;width:189.7px;height:2.4px;background:linear-gradient(90deg,#0062ff 0px,#095fff 8px,#c62eff 104px,#ff1ffc 132px,#ff0bc8 162px,#ff00a7 190px)"></div><div style="position:absolute;left:146.6px;top:181.5px;width:187.5px;height:2.4px;background:linear-gradient(90deg,#0060ff 0px,#095cff 8px,#c72bff 106px,#fe1dff 132px,#ff08c6 166px,#ff00ac 187px)"></div><div style="position:absolute;left:146.9px;top:183.5px;width:185.2px;height:2.4px;background:linear-gradient(90deg,#005eff 0px,#095aff 8px,#c52aff 106px,#ff1bff 134px,#ff07c9 166px,#ff00b1 185px)"></div><div style="position:absolute;left:147.2px;top:185.5px;width:182.9px;height:2.4px;background:linear-gradient(90deg,#005bff 0px,#0958ff 8px,#c627ff 108px,#ff18fe 136px,#ff05c9 168px,#ff00b6 183px)"></div><div style="position:absolute;left:147.5px;top:187.5px;width:180.6px;height:2.4px;background:linear-gradient(90deg,#0059ff 0px,#0855ff 8px,#c325ff 108px,#ff15fe 138px,#ff03c9 170px,#ff00bb 181px)"></div><div style="position:absolute;left:147.8px;top:189.5px;width:178.3px;height:2.4px;background:linear-gradient(90deg,#0057ff 0px,#0853ff 8px,#c522ff 110px,#ff13fd 140px,#ff01c9 172px,#ff00c1 178px)"></div><div style="position:absolute;left:148.2px;top:191.5px;width:176.1px;height:2.4px;background:linear-gradient(90deg,#0055ff 0px,#0851ff 8px,#c620ff 112px,#ff10fd 142px,#ff00c6 176px)"></div><div style="position:absolute;left:148.5px;top:193.5px;width:173.8px;height:2.4px;background:linear-gradient(90deg,#0052ff 0px,#084fff 8px,#c41eff 112px,#ff0efc 144px,#ff00cc 174px)"></div><div style="position:absolute;left:148.8px;top:195.5px;width:171.5px;height:2.4px;background:linear-gradient(90deg,#0050ff 0px,#084dff 8px,#c51bff 114px,#ff0cff 144px,#ff00d2 171px)"></div><div style="position:absolute;left:149.1px;top:197.5px;width:169.2px;height:2.4px;background:linear-gradient(90deg,#004eff 0px,#084bff 8px,#c619ff 116px,#ff0aff 146px,#ff00d8 169px)"></div><div style="position:absolute;left:149.5px;top:199.5px;width:166.9px;height:2.4px;background:linear-gradient(90deg,#004cff 0px,#0849ff 8px,#c418ff 116px,#ff08fe 148px,#ff00de 167px)"></div><div style="position:absolute;left:149.8px;top:201.5px;width:164.7px;height:2.4px;background:linear-gradient(90deg,#004aff 0px,#0847ff 8px,#c515ff 118px,#ff05fd 150px,#ff00e4 165px)"></div><div style="position:absolute;left:150.1px;top:203.5px;width:162.4px;height:2.4px;background:linear-gradient(90deg,#0048ff 0px,#0845ff 8px,#c613ff 120px,#ff03fd 152px,#ff00eb 162px)"></div><div style="position:absolute;left:150.4px;top:205.5px;width:160.1px;height:2.4px;background:linear-gradient(90deg,#0047ff 0px,#0843ff 8px,#c411ff 120px,#ff01fc 154px,#ff00f2 160px)"></div><div style="position:absolute;left:150.8px;top:207.5px;width:157.8px;height:2.4px;background:linear-gradient(90deg,#0045ff 0px,#0b41ff 10px,#c80eff 124px,#ff00fc 156px,#ff00f9 158px)"></div><div style="position:absolute;left:151.1px;top:209.5px;width:155.5px;height:2.4px;background:linear-gradient(90deg,#0043ff 0px,#0a3fff 10px,#c60dff 124px,#fe00ff 156px)"></div><div style="position:absolute;left:151.4px;top:211.5px;width:153.2px;height:2.4px;background:linear-gradient(90deg,#0041ff 0px,#0a3dff 10px,#c70bff 126px,#f700ff 153px)"></div><div style="position:absolute;left:151.7px;top:213.5px;width:151.0px;height:2.4px;background:linear-gradient(90deg,#0040ff 0px,#0a3cff 10px,#c809ff 128px,#f000ff 151px)"></div><div style="position:absolute;left:152.1px;top:215.5px;width:148.7px;height:2.4px;background:linear-gradient(90deg,#003eff 0px,#0a3aff 10px,#c608ff 128px,#ea00ff 149px)"></div><div style="position:absolute;left:152.4px;top:217.5px;width:146.4px;height:2.4px;background:linear-gradient(90deg,#003cff 0px,#0a38ff 10px,#c706ff 130px,#e300ff 146px)"></div><div style="position:absolute;left:152.7px;top:219.5px;width:144.1px;height:2.4px;background:linear-gradient(90deg,#003bff 0px,#0a37ff 10px,#c804ff 132px,#dd00ff 144px)"></div><div style="position:absolute;left:153.0px;top:221.5px;width:141.8px;height:2.4px;background:linear-gradient(90deg,#0039ff 0px,#0a35ff 10px,#c603ff 132px,#d600ff 142px)"></div><div style="position:absolute;left:153.3px;top:223.5px;width:139.6px;height:2.4px;background:linear-gradient(90deg,#0038ff 0px,#0a34ff 10px,#c701ff 134px,#d000ff 140px)"></div><div style="position:absolute;left:153.7px;top:225.5px;width:137.3px;height:2.4px;background:linear-gradient(90deg,#0036ff 0px,#0a32ff 10px,#c800ff 136px,#ca00ff 137px)"></div><div style="position:absolute;left:154.0px;top:227.5px;width:135.0px;height:2.4px;background:linear-gradient(90deg,#0035ff 0px,#0c30ff 12px,#c500ff 135px)"></div><div style="position:absolute;left:154.3px;top:229.5px;width:132.7px;height:2.4px;background:linear-gradient(90deg,#0033ff 0px,#0c2fff 12px,#bf00ff 133px)"></div><div style="position:absolute;left:154.6px;top:231.5px;width:130.4px;height:2.4px;background:linear-gradient(90deg,#0032ff 0px,#0c2dff 12px,#b900ff 130px)"></div><div style="position:absolute;left:155.0px;top:233.5px;width:128.2px;height:2.4px;background:linear-gradient(90deg,#0031ff 0px,#0c2cff 12px,#b400ff 128px)"></div><div style="position:absolute;left:155.3px;top:235.5px;width:125.9px;height:2.4px;background:linear-gradient(90deg,#002fff 0px,#0c2bff 12px,#af00ff 126px)"></div><div style="position:absolute;left:155.6px;top:237.5px;width:123.6px;height:2.4px;background:linear-gradient(90deg,#002eff 0px,#0c29ff 12px,#a900ff 124px)"></div><div style="position:absolute;left:155.9px;top:239.5px;width:121.3px;height:2.4px;background:linear-gradient(90deg,#002dff 0px,#0c28ff 12px,#a400ff 121px)"></div><div style="position:absolute;left:156.3px;top:241.5px;width:119.0px;height:2.4px;background:linear-gradient(90deg,#002bff 0px,#0e26ff 14px,#9f00ff 119px)"></div><div style="position:absolute;left:156.6px;top:243.5px;width:116.8px;height:2.4px;background:linear-gradient(90deg,#002aff 0px,#0e25ff 14px,#9b00ff 117px)"></div><div style="position:absolute;left:156.9px;top:245.5px;width:114.5px;height:2.4px;background:linear-gradient(90deg,#0029ff 0px,#0e24ff 14px,#9600ff 114px)"></div><div style="position:absolute;left:157.2px;top:247.5px;width:112.2px;height:2.4px;background:linear-gradient(90deg,#0028ff 0px,#0e23ff 14px,#9100ff 112px)"></div><div style="position:absolute;left:157.5px;top:249.5px;width:109.9px;height:2.4px;background:linear-gradient(90deg,#0026ff 0px,#0e22ff 14px,#8d00ff 110px)"></div><div style="position:absolute;left:157.9px;top:251.5px;width:107.6px;height:2.4px;background:linear-gradient(90deg,#0025ff 0px,#0e20ff 14px,#8800ff 108px)"></div><div style="position:absolute;left:158.2px;top:253.5px;width:105.3px;height:2.4px;background:linear-gradient(90deg,#0024ff 0px,#101fff 16px,#8400ff 105px)"></div><div style="position:absolute;left:158.5px;top:255.5px;width:103.1px;height:2.4px;background:linear-gradient(90deg,#0023ff 0px,#101eff 16px,#8000ff 103px)"></div><div style="position:absolute;left:158.8px;top:257.5px;width:100.8px;height:2.4px;background:linear-gradient(90deg,#0022ff 0px,#101cff 16px,#7c00ff 101px)"></div><div style="position:absolute;left:159.2px;top:259.5px;width:98.5px;height:2.4px;background:linear-gradient(90deg,#0021ff 0px,#0f1bff 16px,#7700ff 99px)"></div><div style="position:absolute;left:159.5px;top:261.5px;width:96.2px;height:2.4px;background:linear-gradient(90deg,#0020ff 0px,#121aff 18px,#7300ff 96px)"></div><div style="position:absolute;left:159.8px;top:263.5px;width:93.9px;height:2.4px;background:linear-gradient(90deg,#001fff 0px,#1219ff 18px,#6f00ff 94px)"></div><div style="position:absolute;left:160.1px;top:265.5px;width:91.7px;height:2.4px;background:linear-gradient(90deg,#001eff 0px,#1118ff 18px,#6c00ff 92px)"></div><div style="position:absolute;left:160.5px;top:267.5px;width:89.4px;height:2.4px;background:linear-gradient(90deg,#001dff 0px,#1117ff 18px,#6800ff 89px)"></div><div style="position:absolute;left:160.8px;top:269.5px;width:87.1px;height:2.4px;background:linear-gradient(90deg,#001cff 0px,#1415ff 20px,#6400ff 87px)"></div><div style="position:absolute;left:161.1px;top:271.5px;width:84.8px;height:2.4px;background:linear-gradient(90deg,#001bff 0px,#1314ff 20px,#6000ff 85px)"></div><div style="position:absolute;left:161.4px;top:273.5px;width:82.5px;height:2.4px;background:linear-gradient(90deg,#001aff 0px,#1313ff 20px,#5d00ff 83px)"></div><div style="position:absolute;left:161.8px;top:275.5px;width:80.3px;height:2.4px;background:linear-gradient(90deg,#0019ff 0px,#1512ff 22px,#5900ff 80px)"></div><div style="position:absolute;left:162.1px;top:277.5px;width:78.0px;height:2.4px;background:linear-gradient(90deg,#0018ff 0px,#1511ff 22px,#5600ff 78px)"></div><div style="position:absolute;left:162.4px;top:279.5px;width:75.7px;height:2.4px;background:linear-gradient(90deg,#0017ff 0px,#170fff 24px,#5300ff 76px)"></div><div style="position:absolute;left:162.7px;top:281.5px;width:73.4px;height:2.4px;background:linear-gradient(90deg,#0016ff 0px,#170fff 24px,#4f00ff 73px)"></div><div style="position:absolute;left:163.0px;top:283.5px;width:71.1px;height:2.4px;background:linear-gradient(90deg,#0015ff 0px,#190dff 26px,#4c00ff 71px)"></div><div style="position:absolute;left:163.4px;top:285.5px;width:68.9px;height:2.4px;background:linear-gradient(90deg,#0014ff 0px,#190cff 26px,#4900ff 69px)"></div><div style="position:absolute;left:163.7px;top:287.5px;width:66.6px;height:2.4px;background:linear-gradient(90deg,#0013ff 0px,#1b0bff 28px,#4600ff 67px)"></div><div style="position:absolute;left:164.0px;top:289.5px;width:64.3px;height:2.4px;background:linear-gradient(90deg,#0013ff 0px,#1d09ff 30px,#4300ff 64px)"></div><div style="position:absolute;left:164.3px;top:291.5px;width:62.0px;height:2.4px;background:linear-gradient(90deg,#0012ff 0px,#1d09ff 30px,#4000ff 62px)"></div><div style="position:absolute;left:164.7px;top:293.5px;width:59.7px;height:2.4px;background:linear-gradient(90deg,#0011ff 0px,#1f07ff 32px,#3d00ff 60px)"></div><div style="position:absolute;left:165.0px;top:295.5px;width:57.4px;height:2.4px;background:linear-gradient(90deg,#0010ff 0px,#2006ff 34px,#3a00ff 57px)"></div><div style="position:absolute;left:165.3px;top:297.5px;width:55.2px;height:2.4px;background:linear-gradient(90deg,#000fff 0px,#2205ff 36px,#3700ff 55px)"></div><div style="position:absolute;left:165.6px;top:299.5px;width:52.9px;height:2.4px;background:linear-gradient(90deg,#000eff 0px,#2403ff 38px,#3400ff 53px)"></div><div style="position:absolute;left:166.0px;top:301.5px;width:50.6px;height:2.4px;background:linear-gradient(90deg,#000eff 0px,#2602ff 40px,#3100ff 51px)"></div><div style="position:absolute;left:166.3px;top:303.5px;width:48.3px;height:2.4px;background:linear-gradient(90deg,#000dff 0px,#2801ff 42px,#2e00ff 48px)"></div><div style="position:absolute;left:166.6px;top:305.5px;width:46.0px;height:2.4px;background:linear-gradient(90deg,#000cff 0px,#2c00ff 46px)"></div><div style="position:absolute;left:166.9px;top:307.5px;width:43.8px;height:2.4px;background:linear-gradient(90deg,#000bff 0px,#2900ff 44px)"></div><div style="position:absolute;left:167.2px;top:309.5px;width:41.5px;height:2.4px;background:linear-gradient(90deg,#000bff 0px,#2600ff 41px)"></div><div style="position:absolute;left:167.6px;top:311.5px;width:39.2px;height:2.4px;background:linear-gradient(90deg,#000aff 0px,#2400ff 39px)"></div><div style="position:absolute;left:167.9px;top:313.5px;width:36.9px;height:2.4px;background:linear-gradient(90deg,#0009ff 0px,#2100ff 37px)"></div><div style="position:absolute;left:168.2px;top:315.5px;width:34.6px;height:2.4px;background:linear-gradient(90deg,#0009ff 0px,#1f00ff 35px)"></div><div style="position:absolute;left:168.5px;top:317.5px;width:32.4px;height:2.4px;background:linear-gradient(90deg,#0008ff 0px,#1c00ff 32px)"></div><div style="position:absolute;left:168.9px;top:319.5px;width:30.1px;height:2.4px;background:linear-gradient(90deg,#0007ff 0px,#1a00ff 30px)"></div><div style="position:absolute;left:169.2px;top:321.5px;width:27.8px;height:2.4px;background:linear-gradient(90deg,#0007ff 0px,#1800ff 28px)"></div><div style="position:absolute;left:169.5px;top:323.5px;width:25.5px;height:2.4px;background:linear-gradient(90deg,#0006ff 0px,#1500ff 26px)"></div><div style="position:absolute;left:169.8px;top:325.5px;width:23.2px;height:2.4px;background:linear-gradient(90deg,#0005ff 0px,#1300ff 23px)"></div><div style="position:absolute;left:170.2px;top:327.5px;width:20.9px;height:2.4px;background:linear-gradient(90deg,#0005ff 0px,#1100ff 21px)"></div><div style="position:absolute;left:170.5px;top:329.5px;width:18.7px;height:2.4px;background:linear-gradient(90deg,#0004ff 0px,#0e00ff 19px)"></div><div style="position:absolute;left:170.8px;top:331.5px;width:16.4px;height:2.4px;background:linear-gradient(90deg,#0003ff 0px,#0c00ff 16px)"></div><div style="position:absolute;left:171.1px;top:333.5px;width:14.1px;height:2.4px;background:linear-gradient(90deg,#0003ff 0px,#0a00ff 14px)"></div><div style="position:absolute;left:171.5px;top:335.5px;width:11.8px;height:2.4px;background:linear-gradient(90deg,#0002ff 0px,#0800ff 12px)"></div><div style="position:absolute;left:171.8px;top:337.5px;width:9.5px;height:2.4px;background:linear-gradient(90deg,#0001ff 0px,#0600ff 10px)"></div><div style="position:absolute;left:172.1px;top:339.5px;width:7.3px;height:2.4px;background:linear-gradient(90deg,#0001ff 0px,#0400ff 7px)"></div>
</div>
<div style="position:absolute;left:948.30px;top:519.40px;width:5.00px;height:1.20px;background:#d2d2d2"></div>
<div class="t" style="left:939.36px;top:514.86px;font-size:12.29px;font-weight:normal;color:#d2d2d2;transform:scaleX(1.1200);">0</div>
<div style="position:absolute;left:948.30px;top:480.90px;width:5.00px;height:1.20px;background:#d2d2d2"></div>
<div class="t" style="left:920.24px;top:476.36px;font-size:12.29px;font-weight:normal;color:#d2d2d2;transform:scaleX(1.1200);">0,05</div>
<div style="position:absolute;left:948.30px;top:442.40px;width:5.00px;height:1.20px;background:#d2d2d2"></div>
<div class="t" style="left:927.87px;top:437.86px;font-size:12.29px;font-weight:normal;color:#d2d2d2;transform:scaleX(1.1200);">0,1</div>
<div style="position:absolute;left:948.30px;top:403.90px;width:5.00px;height:1.20px;background:#d2d2d2"></div>
<div class="t" style="left:920.24px;top:399.36px;font-size:12.29px;font-weight:normal;color:#d2d2d2;transform:scaleX(1.1200);">0,15</div>
<div style="position:absolute;left:948.30px;top:365.40px;width:5.00px;height:1.20px;background:#d2d2d2"></div>
<div class="t" style="left:927.87px;top:360.86px;font-size:12.29px;font-weight:normal;color:#d2d2d2;transform:scaleX(1.1200);">0,2</div>
<div style="position:absolute;left:948.30px;top:326.90px;width:5.00px;height:1.20px;background:#d2d2d2"></div>
<div class="t" style="left:920.24px;top:322.36px;font-size:12.29px;font-weight:normal;color:#d2d2d2;transform:scaleX(1.1200);">0,25</div>
<div style="position:absolute;left:948.30px;top:288.40px;width:5.00px;height:1.20px;background:#d2d2d2"></div>
<div class="t" style="left:927.87px;top:283.86px;font-size:12.29px;font-weight:normal;color:#d2d2d2;transform:scaleX(1.1200);">0,3</div>
<div style="position:absolute;left:948.30px;top:249.90px;width:5.00px;height:1.20px;background:#d2d2d2"></div>
<div class="t" style="left:920.24px;top:245.36px;font-size:12.29px;font-weight:normal;color:#d2d2d2;transform:scaleX(1.1200);">0,35</div>
<div style="position:absolute;left:948.30px;top:211.40px;width:5.00px;height:1.20px;background:#d2d2d2"></div>
<div class="t" style="left:927.87px;top:206.86px;font-size:12.29px;font-weight:normal;color:#d2d2d2;transform:scaleX(1.1200);">0,4</div>
<div style="position:absolute;left:948.30px;top:172.90px;width:5.00px;height:1.20px;background:#d2d2d2"></div>
<div class="t" style="left:920.24px;top:168.36px;font-size:12.29px;font-weight:normal;color:#d2d2d2;transform:scaleX(1.1200);">0,45</div>
<div style="position:absolute;left:948.30px;top:134.40px;width:5.00px;height:1.20px;background:#d2d2d2"></div>
<div class="t" style="left:927.87px;top:129.86px;font-size:12.29px;font-weight:normal;color:#d2d2d2;transform:scaleX(1.1200);">0,5</div>
<div style="position:absolute;left:948.30px;top:95.90px;width:5.00px;height:1.20px;background:#d2d2d2"></div>
<div class="t" style="left:920.24px;top:91.36px;font-size:12.29px;font-weight:normal;color:#d2d2d2;transform:scaleX(1.1200);">0,55</div>
<div style="position:absolute;left:953.20px;top:519.50px;width:1.20px;height:5.00px;background:#d2d2d2"></div>
<div class="t" style="left:950.05px;top:529.76px;font-size:12.29px;font-weight:normal;color:#d2d2d2;transform:scaleX(1.1000);">0</div>
<div style="position:absolute;left:1003.16px;top:519.50px;width:1.20px;height:5.00px;background:#d2d2d2"></div>
<div class="t" style="left:990.62px;top:529.76px;font-size:12.29px;font-weight:normal;color:#d2d2d2;transform:scaleX(1.1000);">0,05</div>
<div style="position:absolute;left:1053.13px;top:519.50px;width:1.20px;height:5.00px;background:#d2d2d2"></div>
<div class="t" style="left:1044.34px;top:529.76px;font-size:12.29px;font-weight:normal;color:#d2d2d2;transform:scaleX(1.1000);">0,1</div>
<div style="position:absolute;left:1103.10px;top:519.50px;width:1.20px;height:5.00px;background:#d2d2d2"></div>
<div class="t" style="left:1090.55px;top:529.76px;font-size:12.29px;font-weight:normal;color:#d2d2d2;transform:scaleX(1.1000);">0,15</div>
<div style="position:absolute;left:1153.06px;top:519.50px;width:1.20px;height:5.00px;background:#d2d2d2"></div>
<div class="t" style="left:1144.27px;top:529.76px;font-size:12.29px;font-weight:normal;color:#d2d2d2;transform:scaleX(1.1000);">0,2</div>
<div style="position:absolute;left:1203.03px;top:519.50px;width:1.20px;height:5.00px;background:#d2d2d2"></div>
<div class="t" style="left:1190.48px;top:529.76px;font-size:12.29px;font-weight:normal;color:#d2d2d2;transform:scaleX(1.1000);">0,25</div>
<div style="position:absolute;left:1252.99px;top:519.50px;width:1.20px;height:5.00px;background:#d2d2d2"></div>
<div class="t" style="left:1244.20px;top:529.76px;font-size:12.29px;font-weight:normal;color:#d2d2d2;transform:scaleX(1.1000);">0,3</div>
<div style="position:absolute;left:1302.95px;top:519.50px;width:1.20px;height:5.00px;background:#d2d2d2"></div>
<div class="t" style="left:1290.41px;top:529.76px;font-size:12.29px;font-weight:normal;color:#d2d2d2;transform:scaleX(1.1000);">0,35</div>
<div style="position:absolute;left:1352.92px;top:519.50px;width:1.20px;height:5.00px;background:#d2d2d2"></div>
<div class="t" style="left:1344.13px;top:529.76px;font-size:12.29px;font-weight:normal;color:#d2d2d2;transform:scaleX(1.1000);">0,4</div>
<div style="position:absolute;left:1402.88px;top:519.50px;width:1.20px;height:5.00px;background:#d2d2d2"></div>
<div class="t" style="left:1390.34px;top:529.76px;font-size:12.29px;font-weight:normal;color:#d2d2d2;transform:scaleX(1.1000);">0,45</div>
<div style="position:absolute;left:1452.85px;top:519.50px;width:1.20px;height:5.00px;background:#d2d2d2"></div>
<div class="t" style="left:1444.06px;top:529.76px;font-size:12.29px;font-weight:normal;color:#d2d2d2;transform:scaleX(1.1000);">0,5</div>
<div style="position:absolute;left:1502.82px;top:519.50px;width:1.20px;height:5.00px;background:#d2d2d2"></div>
<div class="t" style="left:1490.27px;top:529.76px;font-size:12.29px;font-weight:normal;color:#d2d2d2;transform:scaleX(1.1000);">0,55</div>
<div style="position:absolute;left:1070.4px;top:79.0px;width:14px;height:14px;border:1.6px solid #f8f4f4;box-sizing:border-box;background:rgba(16,240,16,0.45)"></div>
<div style="position:absolute;left:1071.8px;top:80.9px;width:9.4px;height:9.4px;border:1.5px solid #111;box-sizing:border-box;border-radius:50%;background:#10f010"></div>
<div style="position:absolute;left:1093.4px;top:101.8px;width:14px;height:14px;border:1.6px solid #f8f4f4;box-sizing:border-box;background:rgba(90,138,90,0.45)"></div>
<div style="position:absolute;left:1092.6px;top:102.6px;width:9.4px;height:9.4px;border:1.5px solid #111;box-sizing:border-box;border-radius:50%;background:#5a8a5a"></div>
<div style="position:absolute;left:1130.5px;top:93.8px;width:14px;height:14px;border:1.6px solid #f8f4f4;box-sizing:border-box;background:rgba(168,176,96,0.45)"></div>
<div style="position:absolute;left:1131.5px;top:94.6px;width:9.4px;height:9.4px;border:1.5px solid #111;box-sizing:border-box;border-radius:50%;background:#a8b060"></div>
<div style="position:absolute;left:1128.0px;top:113.8px;width:14px;height:14px;border:1.6px solid #f8f4f4;box-sizing:border-box;background:rgba(90,106,72,0.45)"></div>
<div style="position:absolute;left:1129.7px;top:115.6px;width:9.4px;height:9.4px;border:1.5px solid #111;box-sizing:border-box;border-radius:50%;background:#5a6a48"></div>
<div style="position:absolute;left:1150.0px;top:85.8px;width:14px;height:14px;border:1.6px solid #f8f4f4;box-sizing:border-box;background:rgba(248,232,0,0.45)"></div>
<div style="position:absolute;left:1150.1px;top:87.2px;width:9.4px;height:9.4px;border:1.5px solid #111;box-sizing:border-box;border-radius:50%;background:#f8e800"></div>
<div style="position:absolute;left:1175.0px;top:90.0px;width:14px;height:14px;border:1.6px solid #f8f4f4;box-sizing:border-box;background:rgba(232,192,48,0.45)"></div>
<div style="position:absolute;left:1174.7px;top:90.8px;width:9.4px;height:9.4px;border:1.5px solid #111;box-sizing:border-box;border-radius:50%;background:#e8c030"></div>
<div style="position:absolute;left:1204.8px;top:96.4px;width:14px;height:14px;border:1.6px solid #f8f4f4;box-sizing:border-box;background:rgba(224,168,56,0.45)"></div>
<div style="position:absolute;left:1204.3px;top:97.6px;width:9.4px;height:9.4px;border:1.5px solid #111;box-sizing:border-box;border-radius:50%;background:#e0a838"></div>
<div style="position:absolute;left:1245.0px;top:100.6px;width:14px;height:14px;border:1.6px solid #f8f4f4;box-sizing:border-box;background:rgba(192,122,72,0.45)"></div>
<div style="position:absolute;left:1244.3px;top:101.4px;width:9.4px;height:9.4px;border:1.5px solid #111;box-sizing:border-box;border-radius:50%;background:#c07a48"></div>
<div style="position:absolute;left:1262.8px;top:139.8px;width:14px;height:14px;border:1.6px solid #f8f4f4;box-sizing:border-box;background:rgba(184,88,104,0.45)"></div>
<div style="position:absolute;left:1262.7px;top:141.5px;width:9.4px;height:9.4px;border:1.5px solid #111;box-sizing:border-box;border-radius:50%;background:#b85868"></div>
<div style="position:absolute;left:1099.6px;top:143.9px;width:14px;height:14px;border:1.6px solid #f8f4f4;box-sizing:border-box;background:rgba(128,176,160,0.45)"></div>
<div style="position:absolute;left:1099.6px;top:145.6px;width:9.4px;height:9.4px;border:1.5px solid #111;box-sizing:border-box;border-radius:50%;background:#80b0a0"></div>
<div style="position:absolute;left:1084.7px;top:161.5px;width:14px;height:14px;border:1.6px solid #f8f4f4;box-sizing:border-box;background:rgba(16,240,240,0.45)"></div>
<div style="position:absolute;left:1082.4px;top:163.8px;width:9.4px;height:9.4px;border:1.5px solid #111;box-sizing:border-box;border-radius:50%;background:#10f0f0"></div>
<div style="position:absolute;left:1089.7px;top:190.6px;width:14px;height:14px;border:1.6px solid #f8f4f4;box-sizing:border-box;background:rgba(32,128,160,0.45)"></div>
<div style="position:absolute;left:1086.5px;top:192.5px;width:9.4px;height:9.4px;border:1.5px solid #111;box-sizing:border-box;border-radius:50%;background:#2080a0"></div>
<div style="position:absolute;left:1121.8px;top:187.8px;width:14px;height:14px;border:1.6px solid #f8f4f4;box-sizing:border-box;background:rgba(106,128,168,0.45)"></div>
<div style="position:absolute;left:1119.5px;top:190.7px;width:9.4px;height:9.4px;border:1.5px solid #111;box-sizing:border-box;border-radius:50%;background:#6a80a8"></div>
<div style="position:absolute;left:1140.9px;top:193.4px;width:14px;height:14px;border:1.6px solid #f8f4f4;box-sizing:border-box;background:rgba(136,136,176,0.45)"></div>
<div style="position:absolute;left:1140.8px;top:194.8px;width:9.4px;height:9.4px;border:1.5px solid #111;box-sizing:border-box;border-radius:50%;background:#8888b0"></div>
<div style="position:absolute;left:1232.7px;top:182.8px;width:14px;height:14px;border:1.6px solid #f8f4f4;box-sizing:border-box;background:rgba(192,104,160,0.45)"></div>
<div style="position:absolute;left:1232.6px;top:185.7px;width:9.4px;height:9.4px;border:1.5px solid #111;box-sizing:border-box;border-radius:50%;background:#c068a0"></div>
<div style="position:absolute;left:1173.7px;top:209.9px;width:14px;height:14px;border:1.6px solid #f8f4f4;box-sizing:border-box;background:rgba(96,72,128,0.45)"></div>
<div style="position:absolute;left:1177.7px;top:217.7px;width:9.4px;height:9.4px;border:1.5px solid #111;box-sizing:border-box;border-radius:50%;background:#604880"></div>
<div style="position:absolute;left:1123.8px;top:237.4px;width:14px;height:14px;border:1.6px solid #f8f4f4;box-sizing:border-box;background:rgba(64,88,168,0.45)"></div>
<div style="position:absolute;left:1119.7px;top:241.8px;width:9.4px;height:9.4px;border:1.5px solid #111;box-sizing:border-box;border-radius:50%;background:#4058a8"></div>
<div style="position:absolute;left:1123.8px;top:284.9px;width:14px;height:14px;border:1.6px solid #f8f4f4;box-sizing:border-box;background:rgba(58,74,144,0.45)"></div>
<div style="position:absolute;left:1119.7px;top:296.1px;width:9.4px;height:9.4px;border:1.5px solid #111;box-sizing:border-box;border-radius:50%;background:#3a4a90"></div>
<div style="position:absolute;left:1121.7px;top:389.4px;width:14px;height:14px;border:1.6px solid #f8f4f4;box-sizing:border-box;background:rgba(16,48,240,0.45)"></div>
<div style="position:absolute;left:1115.1px;top:399.9px;width:8.4px;height:8.4px;border:1.5px solid #111;box-sizing:border-box;border-radius:50%;background:#1030f0"></div>
<div style="position:absolute;left:1250.8px;top:256.5px;width:14px;height:14px;border:1.6px solid #f8f4f4;box-sizing:border-box;background:rgba(224,48,224,0.45)"></div>
<div style="position:absolute;left:1247.6px;top:260.9px;width:9.4px;height:9.4px;border:1.5px solid #111;box-sizing:border-box;border-radius:50%;background:#e030e0"></div>
<div style="position:absolute;left:1320.7px;top:127.3px;width:14px;height:14px;border:1.6px solid #f8f4f4;box-sizing:border-box;background:rgba(192,80,80,0.45)"></div>
<div style="position:absolute;left:1326.3px;top:127.5px;width:9.4px;height:9.4px;border:1.5px solid #111;box-sizing:border-box;border-radius:50%;background:#c05050"></div>
<div style="position:absolute;left:1395.6px;top:108.7px;width:14px;height:14px;border:1.6px solid #f8f4f4;box-sizing:border-box;background:rgba(232,32,32,0.45)"></div>
<div style="position:absolute;left:1395.3px;top:110.6px;width:9.4px;height:9.4px;border:1.5px solid #111;box-sizing:border-box;border-radius:50%;background:#e82020"></div>
<div style="position:absolute;left:1212.0px;top:108.0px;width:14px;height:14px;border:1.6px solid #f8f4f4;box-sizing:border-box;background:rgba(240,170,140,0.35)"></div>
<div style="position:absolute;left:1223.0px;top:106.6px;width:14px;height:14px;border:1.6px solid #f8f4f4;box-sizing:border-box;background:rgba(240,170,140,0.35)"></div>
<div style="position:absolute;left:1229.3px;top:113.0px;width:14px;height:14px;border:1.6px solid #f8f4f4;box-sizing:border-box;background:rgba(240,170,140,0.35)"></div>
<div style="position:absolute;left:1223.0px;top:118.0px;width:14px;height:14px;border:1.6px solid #f8f4f4;box-sizing:border-box;background:rgba(240,170,140,0.35)"></div>
<div style="position:absolute;left:1221.7px;top:122.4px;width:14px;height:14px;border:1.6px solid #f8f4f4;box-sizing:border-box;background:rgba(240,170,140,0.35)"></div>
<div style="position:absolute;left:1197.6px;top:114.1px;width:14px;height:14px;border:1.6px solid #f8f4f4;box-sizing:border-box;background:rgba(240,170,140,0.35)"></div>
<div style="position:absolute;left:1191.6px;top:126.2px;width:14px;height:14px;border:1.6px solid #f8f4f4;box-sizing:border-box;background:rgba(240,170,140,0.35)"></div>
<div style="position:absolute;left:1179.2px;top:121.7px;width:14px;height:14px;border:1.6px solid #f8f4f4;box-sizing:border-box;background:rgba(240,170,140,0.35)"></div>
<div style="position:absolute;left:1179.2px;top:136.0px;width:14px;height:14px;border:1.6px solid #f8f4f4;box-sizing:border-box;background:rgba(240,170,140,0.35)"></div>
<div style="position:absolute;left:1208.0px;top:123.2px;width:14px;height:14px;border:1.6px solid #f8f4f4;box-sizing:border-box;background:rgba(240,170,140,0.35)"></div>
<div style="position:absolute;left:1202.0px;top:115.6px;width:14px;height:14px;border:1.6px solid #f8f4f4;box-sizing:border-box;background:rgba(240,170,140,0.35)"></div>
<div style="position:absolute;left:1211.2px;top:113.4px;width:14px;height:14px;border:1.6px solid #f8f4f4;box-sizing:border-box;background:rgba(240,170,140,0.35)"></div>
<div style="position:absolute;left:1245.0px;top:104.7px;width:14px;height:14px;border:1.6px solid #f8f4f4;box-sizing:border-box;background:rgba(240,170,140,0.35)"></div>
<div style="position:absolute;left:1244.3px;top:101.4px;width:9.4px;height:9.4px;border:1.5px solid #111;box-sizing:border-box;border-radius:50%;background:#c07a48"></div>
<div style="position:absolute;left:1248.1px;top:102.5px;width:9.4px;height:9.4px;border:1.5px solid #111;box-sizing:border-box;border-radius:50%;background:#b06c3c"></div>
<div style="position:absolute;left:1214.6px;top:108.5px;width:9.4px;height:9.4px;border:1.5px solid #111;box-sizing:border-box;border-radius:50%;background:#8a5a38"></div>
<div style="position:absolute;left:1227.2px;top:107.6px;width:9.4px;height:9.4px;border:1.5px solid #111;box-sizing:border-box;border-radius:50%;background:#7a4e30"></div>
<div style="position:absolute;left:1238.7px;top:112.7px;width:9.4px;height:9.4px;border:1.5px solid #111;box-sizing:border-box;border-radius:50%;background:#6e4428"></div>
<div style="position:absolute;left:1197.7px;top:116.1px;width:9.4px;height:9.4px;border:1.5px solid #111;box-sizing:border-box;border-radius:50%;background:#d09070"></div>
<div style="position:absolute;left:1211.6px;top:117.6px;width:9.4px;height:9.4px;border:1.5px solid #111;box-sizing:border-box;border-radius:50%;background:#d89070"></div>
<div style="position:absolute;left:1218.0px;top:117.2px;width:9.4px;height:9.4px;border:1.5px solid #111;box-sizing:border-box;border-radius:50%;background:#d08a68"></div>
<div style="position:absolute;left:1218.8px;top:122.8px;width:9.4px;height:9.4px;border:1.5px solid #111;box-sizing:border-box;border-radius:50%;background:#f0a080"></div>
<div style="position:absolute;left:1206.0px;top:124.0px;width:9.4px;height:9.4px;border:1.5px solid #111;box-sizing:border-box;border-radius:50%;background:#d8906c"></div>
<div style="position:absolute;left:1196.9px;top:122.5px;width:9.4px;height:9.4px;border:1.5px solid #111;box-sizing:border-box;border-radius:50%;background:#c88060"></div>
<div style="position:absolute;left:1191.7px;top:124.7px;width:9.4px;height:9.4px;border:1.5px solid #111;box-sizing:border-box;border-radius:50%;background:#b87858"></div>
<div style="position:absolute;left:1197.7px;top:127.4px;width:9.4px;height:9.4px;border:1.5px solid #111;box-sizing:border-box;border-radius:50%;background:#d09070"></div>
<div style="position:absolute;left:1178.9px;top:125.5px;width:9.4px;height:9.4px;border:1.5px solid #111;box-sizing:border-box;border-radius:50%;background:#f4c0a0"></div>
<div style="position:absolute;left:1175.5px;top:134.5px;width:9.4px;height:9.4px;border:1.5px solid #111;box-sizing:border-box;border-radius:50%;background:#f4c4a8"></div>
<div style="position:absolute;left:1180.3px;top:135.6px;width:9.4px;height:9.4px;border:1.5px solid #111;box-sizing:border-box;border-radius:50%;background:#d8a088"></div>
<div style="position:absolute;left:1142.8px;top:150.7px;width:14px;height:14px;border:2.4px solid #000;box-sizing:border-box;background:#d8d8d8"></div>
<div style="position:absolute;left:1141.8px;top:153.6px;width:9.4px;height:9.4px;border:1.5px solid #111;box-sizing:border-box;border-radius:50%;background:#a8a8a8"></div>
<div style="position:absolute;left:1144.5px;top:153.6px;width:9.4px;height:9.4px;border:1.5px solid #111;box-sizing:border-box;border-radius:50%;background:#b0b0b0"></div>
<div style="position:absolute;left:1133.8px;top:178.6px;width:9.4px;height:9.4px;border-radius:50%;background:#000"></div>
<div style="position:absolute;left:1360.7px;top:357px;width:187.2px;height:122.5px;border:1.5px solid #9a9a9a;box-sizing:border-box;box-shadow:0 0 0 3px #1e1e1e;background:linear-gradient(155deg,#ff8c2e 0%,#ff6a30 45%,#ff4626 100%)"></div>
<div style="position:absolute;left:1483.2px;top:373.3px;width:15px;height:15px;border:1.6px solid #f8f4f4;box-sizing:border-box;background:rgba(255,255,255,0.06)"></div>
<div style="position:absolute;left:1528.9px;top:374.1px;width:15px;height:15px;border:1.6px solid #f8f4f4;box-sizing:border-box;background:rgba(255,255,255,0.06)"></div>
<div style="position:absolute;left:1385.0px;top:392.5px;width:15px;height:15px;border:1.6px solid #f8f4f4;box-sizing:border-box;background:rgba(255,255,255,0.06)"></div>
<div style="position:absolute;left:1446.4px;top:410.1px;width:15px;height:15px;border:1.6px solid #f8f4f4;box-sizing:border-box;background:rgba(255,255,255,0.06)"></div>
<div style="position:absolute;left:1464.2px;top:423.2px;width:15px;height:15px;border:1.6px solid #f8f4f4;box-sizing:border-box;background:rgba(255,255,255,0.06)"></div>
<div style="position:absolute;left:1528.1px;top:409.3px;width:15px;height:15px;border:1.6px solid #f8f4f4;box-sizing:border-box;background:rgba(255,255,255,0.06)"></div>
<div style="position:absolute;left:1363.8px;top:422.8px;width:15px;height:15px;border:1.6px solid #f8f4f4;box-sizing:border-box;background:rgba(255,255,255,0.06)"></div>
<div style="position:absolute;left:1372.3px;top:431.3px;width:15px;height:15px;border:1.6px solid #f8f4f4;box-sizing:border-box;background:rgba(255,255,255,0.06)"></div>
<div style="position:absolute;left:1378.6px;top:442.7px;width:15px;height:15px;border:1.6px solid #f8f4f4;box-sizing:border-box;background:rgba(255,255,255,0.06)"></div>
<div style="position:absolute;left:1450.2px;top:446.1px;width:15px;height:15px;border:1.6px solid #f8f4f4;box-sizing:border-box;background:rgba(255,255,255,0.06)"></div>
<div style="position:absolute;left:1503.7px;top:362.1px;width:8.6px;height:8.6px;border:1.5px solid #111;box-sizing:border-box;border-radius:50%;background:#7a4a2a"></div>
<div style="position:absolute;left:1379.7px;top:391.7px;width:8.6px;height:8.6px;border:1.5px solid #111;box-sizing:border-box;border-radius:50%;background:#d89070"></div>
<div style="position:absolute;left:1438.7px;top:407.7px;width:8.6px;height:8.6px;border:1.5px solid #111;box-sizing:border-box;border-radius:50%;background:#d08060"></div>
<div style="position:absolute;left:1455.7px;top:420.7px;width:8.6px;height:8.6px;border:1.5px solid #111;box-sizing:border-box;border-radius:50%;background:#c07858"></div>
<div style="position:absolute;left:1364.0px;top:431.1px;width:8.6px;height:8.6px;border:1.5px solid #111;box-sizing:border-box;border-radius:50%;background:#e09878"></div>
<div style="position:absolute;left:1370.4px;top:441.7px;width:8.6px;height:8.6px;border:1.5px solid #111;box-sizing:border-box;border-radius:50%;background:#c88060"></div>
<div style="position:absolute;left:1433.7px;top:445.1px;width:8.6px;height:8.6px;border:1.5px solid #111;box-sizing:border-box;border-radius:50%;background:#f0a080"></div>
<div style="position:absolute;left:1312.90px;top:489.30px;width:237.30px;height:25.50px;background:#2e2e2e;"></div>
<div class="t" style="left:1315.00px;top:493.74px;font-size:18.07px;font-weight:normal;color:#f0f0f0;transform:scaleX(1.0176);">RGB Triplet: 217, 140, 94</div>
</body></html>
